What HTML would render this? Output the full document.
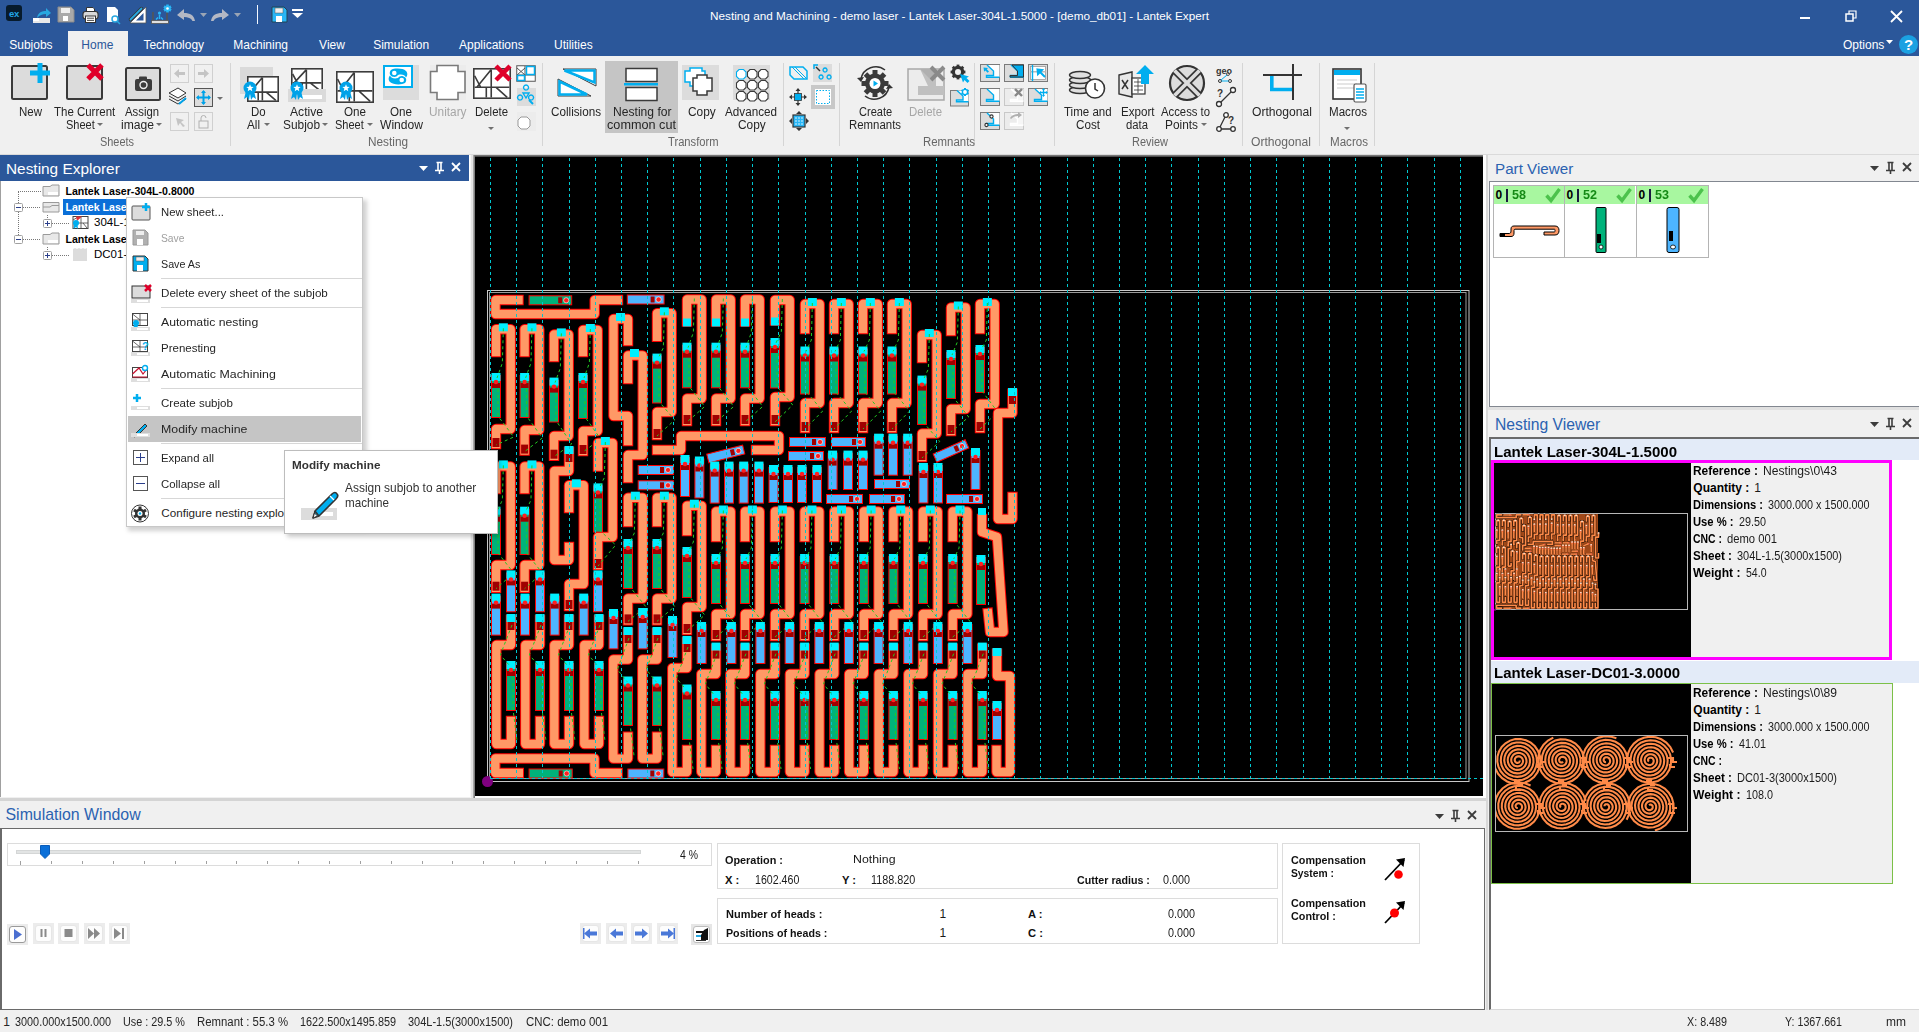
<!DOCTYPE html>
<html><head><meta charset="utf-8"><title>Lantek Expert</title>
<style>
html,body{margin:0;padding:0;}
body{width:1919px;height:1032px;overflow:hidden;position:relative;background:#f0f0f0;font-family:"Liberation Sans", sans-serif;}
.a{position:absolute;}
.t{position:absolute;white-space:nowrap;}
svg.a{overflow:visible;}
</style></head><body>
<div class="a" style="left:0px;top:0px;width:1919px;height:56px;background:#2b579a"></div>
<div class="a" style="left:6px;top:5px;width:16px;height:16px;background:#071b2c;border-radius:3px"></div>
<div class="t" style="left:9px;top:9.16px;font-size:9.5px;line-height:9.5px;color:#22a6e6;font-weight:bold;letter-spacing:-0.3px">ex</div>
<svg class="a" style="left:33px;top:6px;" width="19" height="18" viewBox="0 0 19 18"><rect x="0" y="12" width="17" height="5" fill="#e8e8e8"/><rect x="0" y="12" width="6" height="3" fill="#fff"/><path d="M4 12 C5 6 9 5 13 5 L13 2 L18 7 L13 11 L13 8 C9 8 7 9 4 12Z" fill="#29a8e0"/></svg>
<svg class="a" style="left:57px;top:6px;" width="18" height="17" viewBox="0 0 18 17"><path d="M1 1 H14 L17 4 V16 H1Z" fill="#a9a9a9" stroke="#8a8a8a"/><rect x="4" y="2" width="9" height="5" fill="#eee"/><rect x="6" y="10" width="5" height="5" fill="#fff"/></svg>
<svg class="a" style="left:82px;top:6px;" width="17" height="17" viewBox="0 0 17 17"><path d="M4.5 1.5 H11 L12.5 3 V6 H4.5Z" fill="#fff" stroke="#333" stroke-width="1"/><rect x="1" y="5.5" width="15" height="7.5" rx="2.5" fill="#d8d8d8" stroke="#333" stroke-width="1.1"/><rect x="3.5" y="10" width="10" height="6.5" fill="#fff" stroke="#333" stroke-width="1"/><path d="M5 12.2 H12 M5 14.4 H12" stroke="#333" stroke-width="0.9"/></svg>
<svg class="a" style="left:106px;top:6px;" width="15" height="18" viewBox="0 0 15 18"><path d="M1 1H9L12 4V16H1Z" fill="#fff"/><circle cx="9" cy="13" r="3" fill="#fff" stroke="#29a8e0" stroke-width="1.5"/><line x1="11" y1="15" x2="14" y2="18" stroke="#29a8e0" stroke-width="1.5"/></svg>
<svg class="a" style="left:128px;top:6px;" width="19" height="18" viewBox="0 0 19 18"><path d="M18 1 V17 H2Z" fill="#fff" stroke="#555" stroke-width="0.8"/><path d="M15.5 7 V14.5 H8Z" fill="#2b579a"/><path d="M13.5 2.5 L2.5 13.5" stroke="#333" stroke-width="3.4" stroke-linecap="round"/><path d="M13.5 2.5 L2.5 13.5" stroke="#29a8e0" stroke-width="1.8" stroke-linecap="round"/></svg>
<svg class="a" style="left:150px;top:4px;" width="22" height="21" viewBox="0 0 22 21"><path d="M3 8 V17 M17 8 V17" stroke="#555" stroke-width="1.6"/><rect x="1.5" y="16.5" width="17" height="3" fill="#e0e0e0" stroke="#555" stroke-width="0.8"/><circle cx="9.5" cy="9" r="1.6" fill="#29b6f6"/><path d="M9.5 10.5 V15 M6 15.5 L8 13.5 M13 15.5 L11 13.5" stroke="#29b6f6" stroke-width="1.4"/><g fill="#29b6f6"><rect x="16.2" y="0.5" width="2.6" height="2.6" transform="rotate(0 17.5 4.5)"/><rect x="16.2" y="0.5" width="2.6" height="2.6" transform="rotate(60 17.5 4.5)"/><rect x="16.2" y="0.5" width="2.6" height="2.6" transform="rotate(120 17.5 4.5)"/><rect x="16.2" y="0.5" width="2.6" height="2.6" transform="rotate(180 17.5 4.5)"/><rect x="16.2" y="0.5" width="2.6" height="2.6" transform="rotate(240 17.5 4.5)"/><rect x="16.2" y="0.5" width="2.6" height="2.6" transform="rotate(300 17.5 4.5)"/></g><circle cx="17.5" cy="4.5" r="3" fill="#29b6f6"/><circle cx="17.5" cy="4.5" r="1.3" fill="#fff"/></svg>
<svg class="a" style="left:177px;top:9px;" width="19" height="13" viewBox="0 0 19 13"><path d="M7 0 L0 6 L7 11 V8 C11 8 14 9 15.5 12 H18 C17 6 13 4 7 4Z" fill="#b4b8c4"/></svg>
<svg class="a" style="left:200px;top:13px;" width="7" height="4" viewBox="0 0 7 4"><path d="M0 0H7L3.5 4Z" fill="#9aa5b5"/></svg>
<svg class="a" style="left:211px;top:9px;" width="19" height="13" viewBox="0 0 19 13"><path d="M11 0 L18 6 L11 11 V8 C7 8 4 9 2.5 12 H0 C1 6 5 4 11 4Z" fill="#b4b8c4"/></svg>
<svg class="a" style="left:234px;top:13px;" width="7" height="4" viewBox="0 0 7 4"><path d="M0 0H7L3.5 4Z" fill="#9aa5b5"/></svg>
<div class="a" style="left:256.5px;top:5px;width:1.5px;height:19px;background:#f4f8ff"></div>
<svg class="a" style="left:271px;top:6px;" width="17" height="17" viewBox="0 0 17 17"><path d="M1 1 H13 L16 4 V16 H1Z" fill="#29b6f6" stroke="#245"/><rect x="4" y="2" width="8" height="5" fill="#eee" stroke="#555" stroke-width="0.5"/><rect x="5" y="10" width="6" height="6" fill="#fff"/></svg>
<svg class="a" style="left:292px;top:9px;" width="11" height="9" viewBox="0 0 11 9"><rect x="0" y="0" width="11" height="2" fill="#fff"/><path d="M0 4H11L5.5 9Z" fill="#fff"/></svg>
<div class="t" style="left:710px;top:10.04px;font-size:11.77px;line-height:11.77px;color:#ffffff;">Nesting and Machining - demo laser - Lantek Laser-304L-1.5000 - [demo_db01] - Lantek Expert</div>
<div class="a" style="left:1800px;top:17px;width:10px;height:2px;background:#fff"></div>
<svg class="a" style="left:1845px;top:10px;" width="12" height="12" viewBox="0 0 12 12"><rect x="1" y="4" width="7" height="7" fill="none" stroke="#fff" stroke-width="1.5"/><path d="M4 4V1H11V8H8" fill="none" stroke="#fff" stroke-width="1.2"/></svg>
<svg class="a" style="left:1890px;top:10px;" width="13" height="13" viewBox="0 0 13 13"><path d="M1 1L12 12M12 1L1 12" stroke="#fff" stroke-width="1.8"/></svg>
<div class="a" style="left:68px;top:31px;width:60px;height:25px;background:#f0f0f0"></div>
<div class="t" style="left:9.25px;top:38.84px;font-size:12px;line-height:12px;color:#ffffff;">Subjobs</div>
<div class="t" style="left:143.4px;top:38.84px;font-size:12px;line-height:12px;color:#ffffff;">Technology</div>
<div class="t" style="left:233.3px;top:38.84px;font-size:12px;line-height:12px;color:#ffffff;">Machining</div>
<div class="t" style="left:319.1px;top:38.84px;font-size:12px;line-height:12px;color:#ffffff;">View</div>
<div class="t" style="left:373.2px;top:38.84px;font-size:12px;line-height:12px;color:#ffffff;">Simulation</div>
<div class="t" style="left:459px;top:38.84px;font-size:12px;line-height:12px;color:#ffffff;">Applications</div>
<div class="t" style="left:554px;top:38.84px;font-size:12px;line-height:12px;color:#ffffff;">Utilities</div>
<div class="t" style="left:81.3px;top:38.84px;font-size:12px;line-height:12px;color:#2b579a;">Home</div>
<div class="t" style="left:1843px;top:38.84px;font-size:12px;line-height:12px;color:#ffffff;">Options</div>
<svg class="a" style="left:1886px;top:40px;" width="7" height="4" viewBox="0 0 7 4"><path d="M0 0H7L3.5 4Z" fill="#fff"/></svg>
<svg class="a" style="left:1898px;top:34px;" width="21" height="21" viewBox="0 0 21 21"><circle cx="10.5" cy="10.5" r="9.5" fill="#1ba1e2"/><text x="10.5" y="16" font-family="Liberation Sans" font-weight="bold" font-size="15" fill="#fff" text-anchor="middle">?</text></svg>
<div class="a" style="left:0px;top:56px;width:1919px;height:99px;background:#f0f0f0"></div>
<div class="a" style="left:0px;top:154px;width:1919px;height:1px;background:#dadada"></div>
<svg class="a" style="left:11px;top:62px;" width="40" height="39" viewBox="0 0 40 39"><rect x="1" y="4" width="35" height="33" rx="1.5" fill="#dcdcdc" stroke="#3a3a3a" stroke-width="2"/><path d="M29 1 V21 M19 11 H39" stroke="#00aeef" stroke-width="5"/></svg>
<svg class="a" style="left:66px;top:63px;" width="39" height="37" viewBox="0 0 39 37"><rect x="1" y="3" width="35" height="33" rx="1.5" fill="#dcdcdc" stroke="#3a3a3a" stroke-width="2"/><path d="M22 2 L36 16 M36 2 L22 16" stroke="#e0002a" stroke-width="5"/></svg>
<svg class="a" style="left:125px;top:67px;" width="36" height="34" viewBox="0 0 36 34"><rect x="1" y="1" width="34" height="32" rx="1.5" fill="#dcdcdc" stroke="#3a3a3a" stroke-width="2"/><rect x="10" y="12" width="17" height="12" rx="2" fill="#3c3c3c"/><rect x="14" y="9.5" width="8" height="4" rx="1" fill="#3c3c3c"/><circle cx="18.5" cy="18" r="3.5" fill="none" stroke="#eee" stroke-width="1.4"/></svg>
<div class="t" style="left:18.5px;top:105.84px;font-size:12px;line-height:12px;color:#262626;transform:scaleX(0.9581);transform-origin:0 0;">New</div>
<div class="t" style="left:54.4px;top:105.84px;font-size:12px;line-height:12px;color:#262626;transform:scaleX(0.9558);transform-origin:0 0;">The Current</div>
<div class="t" style="left:66px;top:118.84px;font-size:12px;line-height:12px;color:#262626;transform:scaleX(0.9184);transform-origin:0 0;">Sheet</div>
<svg class="a" style="left:97px;top:123px;" width="6" height="3" viewBox="0 0 6 3"><path d="M0 0H6L3 3Z" fill="#707070"/></svg>
<div class="t" style="left:125px;top:105.84px;font-size:12px;line-height:12px;color:#262626;transform:scaleX(0.9440);transform-origin:0 0;">Assign</div>
<div class="t" style="left:121px;top:118.84px;font-size:12px;line-height:12px;color:#262626;transform:scaleX(1.0096);transform-origin:0 0;">image</div>
<svg class="a" style="left:156px;top:123px;" width="6" height="3" viewBox="0 0 6 3"><path d="M0 0H6L3 3Z" fill="#707070"/></svg>
<svg class="a" style="left:170px;top:64px;" width="19" height="19" viewBox="0 0 19 19"><rect x="0.5" y="0.5" width="18" height="18" fill="#f0f0f0" stroke="#d0d0d0"/><path d="M4 9.5 L9 5 V8 H15 V11 H9 V14Z" fill="#c4c4c4"/></svg>
<svg class="a" style="left:194px;top:64px;" width="19" height="19" viewBox="0 0 19 19"><rect x="0.5" y="0.5" width="18" height="18" fill="#f0f0f0" stroke="#d0d0d0"/><path d="M15 9.5 L10 5 V8 H4 V11 H10 V14Z" fill="#c4c4c4"/></svg>
<svg class="a" style="left:168px;top:86px;" width="20" height="21" viewBox="0 0 20 21"><path d="M1 7 L10 2 L18 7 L10 12Z" fill="#fff" stroke="#333"/><path d="M1 10 L10 15 L18 10 M1 13 L10 18 L18 13" fill="none" stroke="#333"/><path d="M11 18 L18 12" stroke="#00a2e8" stroke-width="2"/></svg>
<svg class="a" style="left:194px;top:88px;" width="19" height="19" viewBox="0 0 19 19"><rect x="0.5" y="0.5" width="18" height="18" fill="#dcdcdc" stroke="#555"/><path d="M9.5 3 V16 M3 9.5 H16" stroke="#00a2e8" stroke-width="2"/><path d="M9.5 2 L7 5 H12Z M9.5 17 L7 14 H12Z M2 9.5 L5 7 V12Z M17 9.5 L14 7 V12Z" fill="#00a2e8"/></svg>
<svg class="a" style="left:217px;top:97px;" width="6" height="3" viewBox="0 0 6 3"><path d="M0 0H6L3 3Z" fill="#707070"/></svg>
<svg class="a" style="left:170px;top:112px;" width="19" height="19" viewBox="0 0 19 19"><rect x="0.5" y="0.5" width="18" height="18" fill="#f0f0f0" stroke="#d0d0d0"/><path d="M6 6 L14 8 L11 10 L15 14 L13 15 L10 11 L8 14Z" fill="#c4c4c4"/></svg>
<svg class="a" style="left:194px;top:112px;" width="19" height="19" viewBox="0 0 19 19"><rect x="0.5" y="0.5" width="18" height="18" fill="#f0f0f0" stroke="#d0d0d0"/><rect x="5" y="9" width="9" height="7" fill="none" stroke="#b0b0b0"/><path d="M7 9 V6 A2.5 2.5 0 0 1 12 6" fill="none" stroke="#b0b0b0"/></svg>
<div class="t" style="left:100px;top:135.84px;font-size:12px;line-height:12px;color:#666666;transform:scaleX(0.9101);transform-origin:0 0;">Sheets</div>
<div class="a" style="left:230px;top:63px;width:1px;height:83px;background:#d5d5d5"></div>
<div class="a" style="left:240px;top:67px;width:33px;height:27px;background:#dadada"></div>
<svg class="a" style="left:247px;top:76px;" width="32" height="26" viewBox="0 0 32 26"><rect x="0.8" y="0.8" width="30.4" height="24.4" fill="#fff" stroke="#3c3c3c" stroke-width="1.6"/><path d="M1.6 16.12 H30.4 M15.36 1.6 V24.4 M1.6 6.5 L6.4 16.12 M15.36 1.6 L3.2 16.12 M11.2 16.12 V24.4 M19.2 16.12 L28.8 24.4" stroke="#3c3c3c" stroke-width="1.6" fill="none"/></svg>
<svg class="a" style="left:243px;top:81px;" width="14" height="20" viewBox="0 0 14 20"><path d="M3 10 L1 18 L4 16 L6 19 L7 12Z M11 10 L13 18 L10 16 L8 19 L7 12Z" fill="#00a2e8"/><circle cx="7" cy="7" r="6.5" fill="#00a2e8"/><path d="M7 3.2 L8 5.8 L10.7 5.9 L8.6 7.5 L9.3 10.2 L7 8.7 L4.7 10.2 L5.4 7.5 L3.3 5.9 L6 5.8Z" fill="#fff"/></svg>
<svg class="a" style="left:291px;top:68px;" width="32" height="24" viewBox="0 0 32 24"><rect x="0.8" y="0.8" width="30.4" height="22.4" fill="#fff" stroke="#3c3c3c" stroke-width="1.6"/><path d="M1.6 14.879999999999999 H30.4 M15.36 1.6 V22.4 M1.6 6.0 L6.4 14.879999999999999 M15.36 1.6 L3.2 14.879999999999999 M11.2 14.879999999999999 V22.4 M19.2 14.879999999999999 L28.8 22.4" stroke="#3c3c3c" stroke-width="1.6" fill="none"/></svg>
<div class="a" style="left:288px;top:89px;width:38px;height:13px;background:#dadada"></div>
<div class="a" style="left:300px;top:95px;width:22px;height:4px;background:#fff"></div>
<svg class="a" style="left:290px;top:81px;" width="14" height="20" viewBox="0 0 14 20"><path d="M3 10 L1 18 L4 16 L6 19 L7 12Z M11 10 L13 18 L10 16 L8 19 L7 12Z" fill="#00a2e8"/><circle cx="7" cy="7" r="6.5" fill="#00a2e8"/><path d="M7 3.2 L8 5.8 L10.7 5.9 L8.6 7.5 L9.3 10.2 L7 8.7 L4.7 10.2 L5.4 7.5 L3.3 5.9 L6 5.8Z" fill="#fff"/></svg>
<svg class="a" style="left:336px;top:71px;" width="38" height="32" viewBox="0 0 38 32"><rect x="0.8" y="0.8" width="36.4" height="30.4" fill="#fff" stroke="#3c3c3c" stroke-width="1.6"/><path d="M1.6 19.84 H36.4 M18.24 1.6 V30.4 M1.6 8.0 L7.6000000000000005 19.84 M18.24 1.6 L3.8000000000000003 19.84 M13.299999999999999 19.84 V30.4 M22.8 19.84 L34.2 30.4" stroke="#3c3c3c" stroke-width="1.6" fill="none"/></svg>
<svg class="a" style="left:339px;top:81px;" width="14" height="20" viewBox="0 0 14 20"><path d="M3 10 L1 18 L4 16 L6 19 L7 12Z M11 10 L13 18 L10 16 L8 19 L7 12Z" fill="#00a2e8"/><circle cx="7" cy="7" r="6.5" fill="#00a2e8"/><path d="M7 3.2 L8 5.8 L10.7 5.9 L8.6 7.5 L9.3 10.2 L7 8.7 L4.7 10.2 L5.4 7.5 L3.3 5.9 L6 5.8Z" fill="#fff"/></svg>
<div class="a" style="left:383px;top:65px;width:36px;height:35px;background:#dcdcdc"></div>
<svg class="a" style="left:383px;top:65px;" width="30" height="23" viewBox="0 0 30 23"><rect x="1" y="1" width="28" height="21" fill="#fff" stroke="#00aeef" stroke-width="2"/><path d="M8 5 C11 3 20 3 23 6 C25 8 24.5 11 23 12.5 C22 10 19 9 15 10 C14 11.5 12 12.3 10 11.8 C7 11 5.5 8 8 5Z" fill="#00aeef"/><circle cx="11.3" cy="8" r="2.3" fill="#fff"/><path d="M22 18 C19 20 10 20 7 17 C5 15 5.5 12 7 10.5 C8 13 11 14 15 13 C16 11.5 18 10.7 20 11.2 C23 12 24.5 15 22 18Z" fill="#00aeef"/><circle cx="18.7" cy="15" r="2.3" fill="#fff"/></svg>
<div class="a" style="left:430px;top:65px;width:36px;height:35px;background:#ececec"></div>
<svg class="a" style="left:429px;top:64px;" width="38" height="37" viewBox="0 0 38 37"><path d="M8 1.5 H29 V7.5 H36 V28.5 H29 V35.5 H8 V28.5 H1.5 V7.5 H8Z" fill="#fff" stroke="#7a7a7a" stroke-width="1.6"/></svg>
<div class="t" style="left:251px;top:105.84px;font-size:12px;line-height:12px;color:#262626;transform:scaleX(0.9517);transform-origin:0 0;">Do</div>
<div class="t" style="left:247px;top:118.84px;font-size:12px;line-height:12px;color:#262626;transform:scaleX(0.9747);transform-origin:0 0;">All</div>
<svg class="a" style="left:264px;top:123px;" width="6" height="3" viewBox="0 0 6 3"><path d="M0 0H6L3 3Z" fill="#707070"/></svg>
<div class="t" style="left:290px;top:105.84px;font-size:12px;line-height:12px;color:#262626;transform:scaleX(1.0098);transform-origin:0 0;">Active</div>
<div class="t" style="left:283px;top:118.84px;font-size:12px;line-height:12px;color:#262626;transform:scaleX(0.9902);transform-origin:0 0;">Subjob</div>
<svg class="a" style="left:322px;top:123px;" width="6" height="3" viewBox="0 0 6 3"><path d="M0 0H6L3 3Z" fill="#707070"/></svg>
<div class="t" style="left:344px;top:105.84px;font-size:12px;line-height:12px;color:#262626;transform:scaleX(0.9699);transform-origin:0 0;">One</div>
<div class="t" style="left:335px;top:118.84px;font-size:12px;line-height:12px;color:#262626;transform:scaleX(0.9184);transform-origin:0 0;">Sheet</div>
<svg class="a" style="left:367px;top:123px;" width="6" height="3" viewBox="0 0 6 3"><path d="M0 0H6L3 3Z" fill="#707070"/></svg>
<div class="t" style="left:390px;top:105.84px;font-size:12px;line-height:12px;color:#262626;transform:scaleX(0.9699);transform-origin:0 0;">One</div>
<div class="t" style="left:379.5px;top:118.84px;font-size:12px;line-height:12px;color:#262626;transform:scaleX(1.0075);transform-origin:0 0;">Window</div>
<div class="t" style="left:429px;top:105.84px;font-size:12px;line-height:12px;color:#a6a6a6;transform:scaleX(0.9866);transform-origin:0 0;">Unitary</div>
<svg class="a" style="left:473px;top:68px;" width="38" height="31" viewBox="0 0 38 31"><rect x="0.8" y="0.8" width="36.4" height="29.4" fill="#fff" stroke="#3c3c3c" stroke-width="1.6"/><path d="M1.6 19.22 H36.4 M18.24 1.6 V29.4 M1.6 7.75 L7.6000000000000005 19.22 M18.24 1.6 L3.8000000000000003 19.22 M13.299999999999999 19.22 V29.4 M22.8 19.22 L34.2 29.4" stroke="#3c3c3c" stroke-width="1.6" fill="none"/></svg>
<svg class="a" style="left:494px;top:64px;" width="18" height="18" viewBox="0 0 18 18"><path d="M2 2 L16 16 M16 2 L2 16" stroke="#e0002a" stroke-width="4.5"/></svg>
<div class="t" style="left:475px;top:105.84px;font-size:12px;line-height:12px;color:#262626;transform:scaleX(0.9513);transform-origin:0 0;">Delete</div>
<svg class="a" style="left:488px;top:127px;" width="6" height="3" viewBox="0 0 6 3"><path d="M0 0H6L3 3Z" fill="#707070"/></svg>
<svg class="a" style="left:516px;top:65px;" width="20" height="17" viewBox="0 0 20 17"><rect x="0.75" y="0.75" width="18.5" height="15.5" fill="#fff" stroke="#555" stroke-width="1"/><path d="M1 10 H19 M9 1 V16 M1 3 L9 10 M9 3 L1 10" stroke="#555" stroke-width="1" fill="none"/><rect x="10.5" y="1.5" width="8" height="8" fill="none" stroke="#00aeef" stroke-width="1.5"/><rect x="1.5" y="10.5" width="7" height="5" fill="none" stroke="#00aeef" stroke-width="1.5"/></svg>
<div class="a" style="left:517px;top:88px;width:19px;height:18px;background:#dcdcdc"></div>
<svg class="a" style="left:517px;top:88px;" width="19" height="18" viewBox="0 0 19 18"><path d="M9 2 a2.5 2.5 0 1 1 0.1 0 M3 12 a2.5 2.5 0 1 1 0.1 0 M14 12 a2.5 2.5 0 1 1 0.1 0" fill="none" stroke="#00aeef" stroke-width="1.4"/><path d="M6 5 H12 L9 10Z" fill="none" stroke="#00aeef" stroke-width="1.4"/><path d="M12 12 L16 16" stroke="#00aeef" stroke-width="2"/></svg>
<div class="a" style="left:517px;top:112px;width:19px;height:19px;background:#ececec"></div>
<svg class="a" style="left:517px;top:116px;" width="14" height="14" viewBox="0 0 14 14"><path d="M4 1 H10 L13 4 V10 L10 13 H4 L1 10 V4Z" fill="#fff" stroke="#999" stroke-width="1"/></svg>
<div class="t" style="left:367.5px;top:135.84px;font-size:12px;line-height:12px;color:#666666;transform:scaleX(0.9831);transform-origin:0 0;">Nesting</div>
<div class="a" style="left:542px;top:63px;width:1px;height:83px;background:#d5d5d5"></div>
<svg class="a" style="left:557px;top:68px;" width="40" height="30" viewBox="0 0 40 30"><path d="M6 1 H39 V18 Z" fill="#fff" stroke="#3c3c3c" stroke-width="1"/><path d="M7.5 2.5 H37.5 V14.5Z" fill="none" stroke="#00aeef" stroke-width="2.5"/><path d="M1 11 L34 28 H1Z" fill="#fff" stroke="#3c3c3c" stroke-width="1"/><path d="M2.5 13.5 L30 26.5 H2.5Z" fill="none" stroke="#00aeef" stroke-width="2.5"/></svg>
<div class="t" style="left:551px;top:105.84px;font-size:12px;line-height:12px;color:#262626;transform:scaleX(0.9736);transform-origin:0 0;">Collisions</div>
<div class="a" style="left:605px;top:61px;width:73px;height:72px;background:#c5c5c5"></div>
<svg class="a" style="left:624px;top:67px;" width="35" height="35" viewBox="0 0 35 35"><rect x="2" y="1.5" width="31" height="13" fill="#fff" stroke="#3a3a3a" stroke-width="1.5"/><rect x="2" y="20.5" width="31" height="13" fill="#fff" stroke="#3a3a3a" stroke-width="1.5"/><rect x="0" y="16" width="34" height="2.5" fill="#00aeef"/></svg>
<div class="t" style="left:612.5px;top:105.84px;font-size:12px;line-height:12px;color:#262626;transform:scaleX(1.0082);transform-origin:0 0;">Nesting for</div>
<div class="t" style="left:607px;top:118.84px;font-size:12px;line-height:12px;color:#262626;transform:scaleX(1.0557);transform-origin:0 0;">common cut</div>
<div class="a" style="left:682px;top:65px;width:37px;height:35px;background:#dcdcdc"></div>
<svg class="a" style="left:684px;top:67px;" width="34" height="32" viewBox="0 0 34 32"><path d="M6 1 H18 V4 H21 V15 H18 V19 H6 V15 H1 V4 H6Z" fill="#fff" stroke="#00aeef" stroke-width="1.5" transform="translate(0,0)"/><path d="M13 8 H23 V11 H28 V24 H23 V28 H13 V24 H9 V11 H13Z" fill="#fff" stroke="#3a3a3a" stroke-width="1.5"/></svg>
<div class="t" style="left:687.5px;top:105.84px;font-size:12px;line-height:12px;color:#262626;transform:scaleX(0.9888);transform-origin:0 0;">Copy</div>
<div class="a" style="left:733px;top:65px;width:37px;height:35px;background:#dcdcdc"></div>
<svg class="a" style="left:734px;top:66px;" width="36" height="36" viewBox="0 0 36 36"><path d="M5.0 3.5 H9.5 L12.0 6.0 V10.5 L9.5 13.0 H5.0 L2.5 10.5 V6.0Z" fill="#fff" stroke="#00aeef" stroke-width="1.1"/><path d="M16.0 3.5 H20.5 L23.0 6.0 V10.5 L20.5 13.0 H16.0 L13.5 10.5 V6.0Z" fill="#fff" stroke="#3a3a3a" stroke-width="1.1"/><path d="M27.0 3.5 H31.5 L34.0 6.0 V10.5 L31.5 13.0 H27.0 L24.5 10.5 V6.0Z" fill="#fff" stroke="#3a3a3a" stroke-width="1.1"/><path d="M5.0 14.5 H9.5 L12.0 17.0 V21.5 L9.5 24.0 H5.0 L2.5 21.5 V17.0Z" fill="#fff" stroke="#3a3a3a" stroke-width="1.1"/><path d="M16.0 14.5 H20.5 L23.0 17.0 V21.5 L20.5 24.0 H16.0 L13.5 21.5 V17.0Z" fill="#fff" stroke="#3a3a3a" stroke-width="1.1"/><path d="M27.0 14.5 H31.5 L34.0 17.0 V21.5 L31.5 24.0 H27.0 L24.5 21.5 V17.0Z" fill="#fff" stroke="#3a3a3a" stroke-width="1.1"/><path d="M5.0 25.5 H9.5 L12.0 28.0 V32.5 L9.5 35.0 H5.0 L2.5 32.5 V28.0Z" fill="#fff" stroke="#3a3a3a" stroke-width="1.1"/><path d="M16.0 25.5 H20.5 L23.0 28.0 V32.5 L20.5 35.0 H16.0 L13.5 32.5 V28.0Z" fill="#fff" stroke="#3a3a3a" stroke-width="1.1"/><path d="M27.0 25.5 H31.5 L34.0 28.0 V32.5 L31.5 35.0 H27.0 L24.5 32.5 V28.0Z" fill="#fff" stroke="#3a3a3a" stroke-width="1.1"/></svg>
<div class="t" style="left:725px;top:105.84px;font-size:12px;line-height:12px;color:#262626;transform:scaleX(0.9742);transform-origin:0 0;">Advanced</div>
<div class="t" style="left:738px;top:118.84px;font-size:12px;line-height:12px;color:#262626;transform:scaleX(0.9888);transform-origin:0 0;">Copy</div>
<div class="t" style="left:667.5px;top:135.84px;font-size:12px;line-height:12px;color:#666666;transform:scaleX(0.9312);transform-origin:0 0;">Transform</div>
<div class="a" style="left:783px;top:63px;width:1px;height:83px;background:#d5d5d5"></div>
<svg class="a" style="left:789px;top:66px;" width="19" height="14" viewBox="0 0 19 14"><path d="M1 1 H14 L18 5 V13 H5 L1 9Z" fill="none" stroke="#00aeef" stroke-width="1.5"/><path d="M3 1 L15 13 M6 1 L18 13" stroke="#00aeef" stroke-width="1"/></svg>
<div class="a" style="left:813px;top:64px;width:19px;height:18px;background:#dcdcdc"></div>
<svg class="a" style="left:813px;top:64px;" width="19" height="18" viewBox="0 0 19 18"><path d="M1 5 V1 H5" fill="none" stroke="#00aeef" stroke-width="1.5"/><path d="M3 3 L7 7" stroke="#333" stroke-width="1.5"/><path d="M12 8 a2 2 0 1 1 0.1 0 M8 15 a2 2 0 1 1 0.1 0 M16 15 a2 2 0 1 1 0.1 0" fill="none" stroke="#00aeef" stroke-width="1.4"/></svg>
<svg class="a" style="left:789px;top:88px;" width="18" height="18" viewBox="0 0 18 18"><path d="M9 1 V17 M1 9 H17" stroke="#333" stroke-width="1.2"/><path d="M9 0 L6.5 3 H11.5Z M9 18 L6.5 15 H11.5Z M0 9 L3 6.5 V11.5Z M18 9 L15 6.5 V11.5Z" fill="#333"/><rect x="5.5" y="5.5" width="7" height="7" fill="#00aeef" stroke="#333" stroke-width="0.8"/></svg>
<div class="a" style="left:811px;top:85px;width:24px;height:24px;background:#c8c8c8"></div>
<svg class="a" style="left:815px;top:89px;" width="16" height="16" viewBox="0 0 16 16"><rect x="0" y="0" width="16" height="16" fill="#fff"/><rect x="1.5" y="1.5" width="13" height="13" fill="none" stroke="#00aeef" stroke-width="1" stroke-dasharray="1.5 1.5"/></svg>
<svg class="a" style="left:789px;top:111px;" width="20" height="20" viewBox="0 0 20 20"><path d="M10 0 L7 3 H13Z M10 20 L7 17 H13Z M0 10 L3 7 V13Z M20 10 L17 7 V13Z" fill="#333"/><rect x="4" y="4" width="12" height="12" fill="#29b6f6" stroke="#333" stroke-width="1.2"/><path d="M6 7 H14 M6 10 H14 M6 13 H14" stroke="#fff" stroke-width="0.8" stroke-dasharray="2 1"/></svg>
<div class="a" style="left:839px;top:63px;width:1px;height:83px;background:#d5d5d5"></div>
<svg class="a" style="left:855px;top:65px;" width="40" height="36" viewBox="0 0 40 36"><path d="M6 14 A15 15 0 0 1 30 5" fill="none" stroke="#333" stroke-width="1.5"/><path d="M34 22 A15 15 0 0 1 10 31" fill="none" stroke="#333" stroke-width="1.5"/><path d="M2 13 L6 17 L9 12Z M38 23 L34 19 L31 24Z" fill="#333"/><circle cx="20" cy="18.5" r="10" fill="#3a3a3a"/><g fill="#3a3a3a"><rect x="17.5" y="5" width="5" height="5" transform="rotate(0 20 18.5)"/><rect x="17.5" y="5" width="5" height="5" transform="rotate(45 20 18.5)"/><rect x="17.5" y="5" width="5" height="5" transform="rotate(90 20 18.5)"/><rect x="17.5" y="5" width="5" height="5" transform="rotate(135 20 18.5)"/><rect x="17.5" y="5" width="5" height="5" transform="rotate(180 20 18.5)"/><rect x="17.5" y="5" width="5" height="5" transform="rotate(225 20 18.5)"/><rect x="17.5" y="5" width="5" height="5" transform="rotate(270 20 18.5)"/><rect x="17.5" y="5" width="5" height="5" transform="rotate(315 20 18.5)"/></g><circle cx="20" cy="18.5" r="5.5" fill="#fff"/><path d="M18.5 15.5 L23 18.5 L18.5 21.5Z" fill="#00aeef"/></svg>
<div class="t" style="left:858.75px;top:105.84px;font-size:12px;line-height:12px;color:#262626;transform:scaleX(0.9231);transform-origin:0 0;">Create</div>
<div class="t" style="left:848.75px;top:118.84px;font-size:12px;line-height:12px;color:#262626;transform:scaleX(0.9508);transform-origin:0 0;">Remnants</div>
<svg class="a" style="left:907px;top:64px;" width="40" height="37" viewBox="0 0 40 37"><rect x="1" y="5" width="36" height="31" fill="#ececec" stroke="#a8a8a8" stroke-width="1.5"/><path d="M13 5 H29 V22 H37 V31 H11 V22 H21Z" fill="#c0c0c0"/><path d="M13 5 L22 14 H29 V5Z" fill="#b0b0b0"/><path d="M24 3 L37 16 M37 3 L24 16" stroke="#8a8a8a" stroke-width="4"/></svg>
<div class="t" style="left:909px;top:105.84px;font-size:12px;line-height:12px;color:#a6a6a6;transform:scaleX(0.9513);transform-origin:0 0;">Delete</div>
<svg class="a" style="left:950px;top:64px;" width="21" height="19" viewBox="0 0 21 19"><circle cx="8" cy="8" r="4.6" fill="none" stroke="#333" stroke-width="3.2"/><g fill="#333"><rect x="6.6" y="0.6" width="2.8" height="3" transform="rotate(0 8 8)"/><rect x="6.6" y="0.6" width="2.8" height="3" transform="rotate(45 8 8)"/><rect x="6.6" y="0.6" width="2.8" height="3" transform="rotate(90 8 8)"/><rect x="6.6" y="0.6" width="2.8" height="3" transform="rotate(135 8 8)"/><rect x="6.6" y="0.6" width="2.8" height="3" transform="rotate(180 8 8)"/><rect x="6.6" y="0.6" width="2.8" height="3" transform="rotate(225 8 8)"/><rect x="6.6" y="0.6" width="2.8" height="3" transform="rotate(270 8 8)"/><rect x="6.6" y="0.6" width="2.8" height="3" transform="rotate(315 8 8)"/></g><path d="M10 10 L19 12.5 L16.5 14 L19.5 17 L17.5 19 L14.5 16 L13 18.5Z" fill="#00aeef"/></svg>
<svg class="a" style="left:950px;top:88px;" width="20" height="19" viewBox="0 0 20 19"><rect x="0.5" y="2.5" width="18" height="15.5" fill="#dcdcdc" stroke="#7a7a7a"/><path d="M7 2.5 H18.5 V13.5 H6 V12 H13 V8Z" fill="#fff"/><path d="M7 2.5 L13 8 V12 H6.5 V13.8 H18.5" fill="none" stroke="#00aeef" stroke-width="1.4"/><g fill="#00aeef"><rect x="14" y="0" width="2" height="2.5" transform="rotate(0 15 4)"/><rect x="14" y="0" width="2" height="2.5" transform="rotate(60 15 4)"/><rect x="14" y="0" width="2" height="2.5" transform="rotate(120 15 4)"/><rect x="14" y="0" width="2" height="2.5" transform="rotate(180 15 4)"/><rect x="14" y="0" width="2" height="2.5" transform="rotate(240 15 4)"/><rect x="14" y="0" width="2" height="2.5" transform="rotate(300 15 4)"/></g><circle cx="15" cy="4" r="2.6" fill="#fff" stroke="#00aeef" stroke-width="1.4"/></svg>
<div class="a" style="left:974px;top:63px;width:1px;height:83px;background:#d5d5d5"></div>
<svg class="a" style="left:980px;top:64px;" width="20" height="18" viewBox="0 0 20 18"><rect x="0.5" y="0.5" width="19" height="17" fill="#dcdcdc" stroke="#7a7a7a" stroke-width="1"/><path d="M7 1 H19.5 V13 H6 V11.5 H13.5 V7Z" fill="#fff"/><path d="M7 1 L13.5 7 V11.5 H6.5 V13.2 H19.5" fill="none" stroke="#00aeef" stroke-width="1.4"/><path d="M3.5 3.5 L8 4 L6.8 5.2 L9 7.4 L7.6 8.8 L5.4 6.6 L4.2 7.8Z" fill="#00aeef"/></svg>
<svg class="a" style="left:1004px;top:64px;" width="20" height="18" viewBox="0 0 20 18"><rect x="0.5" y="0.5" width="19" height="17" fill="#dcdcdc" stroke="#7a7a7a" stroke-width="1"/><path d="M7 1 H19.5 V13 H6 V11.5 H13.5 V7Z" fill="#fff"/><path d="M7 1 L13.5 7 V11.5 H6.5 V13.2 H19.5" fill="none" stroke="#00aeef" stroke-width="1.4"/><path d="M8 1 H19.5 V13 H6 V11.5 H13.5 V7Z" fill="#00aeef" stroke="#333" stroke-width="1"/></svg>
<svg class="a" style="left:1028px;top:64px;" width="20" height="18" viewBox="0 0 20 18"><rect x="0.5" y="0.5" width="19" height="17" fill="#dcdcdc" stroke="#7a7a7a"/><rect x="2.5" y="2.5" width="15" height="13" fill="#fff" stroke="#999" stroke-width="0.8"/><rect x="2.5" y="7" width="15" height="1.5" fill="#bbb"/><path d="M4.5 1 V17" stroke="#00aeef" stroke-width="1.4"/><path d="M17 13 L10 6 M9.5 5.5 L14 6 L10 10Z" stroke="#00aeef" stroke-width="2" fill="#00aeef"/></svg>
<svg class="a" style="left:980px;top:88px;" width="20" height="18" viewBox="0 0 20 18"><rect x="0.5" y="0.5" width="19" height="17" fill="#dcdcdc" stroke="#7a7a7a" stroke-width="1"/><path d="M7 1 H19.5 V13 H6 V11.5 H13.5 V7Z" fill="#fff"/><path d="M7 1 L13.5 7 V11.5 H6.5 V13.2 H19.5" fill="none" stroke="#00aeef" stroke-width="1.4"/></svg>
<svg class="a" style="left:1004px;top:88px;" width="20" height="18" viewBox="0 0 20 18"><rect x="0.5" y="0.5" width="19" height="17" fill="#ececec" stroke="#c8c8c8" stroke-width="1"/><path d="M7 1 H19.5 V13 H6 V11.5 H13.5 V7Z" fill="#f6f6f6"/><path d="M7 1 L13.5 7 V11.5 H6.5 V13.2 H19.5" fill="none" stroke="#ffffff" stroke-width="1.4"/><path d="M11 1 L18 8 M18 1 L11 8" stroke="#888" stroke-width="2.4"/></svg>
<svg class="a" style="left:1028px;top:88px;" width="20" height="18" viewBox="0 0 20 18"><rect x="0.5" y="0.5" width="19" height="17" fill="#dcdcdc" stroke="#7a7a7a" stroke-width="1"/><path d="M7 1 H19.5 V13 H6 V11.5 H13.5 V7Z" fill="#fff"/><path d="M7 1 L13.5 7 V11.5 H6.5 V13.2 H19.5" fill="none" stroke="#00aeef" stroke-width="1.4"/><path d="M15.5 1 V8 M12 4.5 H19" stroke="#00aeef" stroke-width="1.3"/><path d="M15.5 0 L14 2 H17Z M15.5 9 L14 7 H17Z M11 4.5 L13 3 V6Z M20 4.5 L18 3 V6Z" fill="#00aeef"/></svg>
<svg class="a" style="left:980px;top:112px;" width="20" height="18" viewBox="0 0 20 18"><rect x="0.5" y="0.5" width="19" height="17" fill="#dcdcdc" stroke="#7a7a7a" stroke-width="1"/><path d="M7 1 H19.5 V13 H6 V11.5 H13.5 V7Z" fill="#fff"/><path d="M7 1 L13.5 7 V11.5 H6.5 V13.2 H19.5" fill="none" stroke="#00aeef" stroke-width="1.4"/><circle cx="11.5" cy="4.5" r="1.6" fill="#fff" stroke="#333" stroke-width="1.1"/><circle cx="6.5" cy="13" r="1.6" fill="#fff" stroke="#333" stroke-width="1.1"/></svg>
<svg class="a" style="left:1004px;top:112px;" width="20" height="18" viewBox="0 0 20 18"><rect x="0.5" y="0.5" width="19" height="17" fill="#ececec" stroke="#c8c8c8" stroke-width="1"/><path d="M7 1 H19.5 V13 H6 V11.5 H13.5 V7Z" fill="#f6f6f6"/><path d="M7 1 L13.5 7 V11.5 H6.5 V13.2 H19.5" fill="none" stroke="#ffffff" stroke-width="1.4"/><path d="M6 6 C8 3 11 2 14 2 V0 L18 3 L14 6 V4 C11 4 9 5 7 7Z" fill="#b0b0b0"/></svg>
<div class="t" style="left:922.5px;top:135.84px;font-size:12px;line-height:12px;color:#666666;transform:scaleX(0.9508);transform-origin:0 0;">Remnants</div>
<div class="a" style="left:1054px;top:63px;width:1px;height:83px;background:#d5d5d5"></div>
<svg class="a" style="left:1068px;top:70px;" width="38" height="29" viewBox="0 0 38 29"><g fill="#e0e0e0" stroke="#333" stroke-width="1.4"><ellipse cx="12" cy="20" rx="10.5" ry="3.5"/><ellipse cx="12" cy="15" rx="10.5" ry="3.5"/><ellipse cx="12" cy="10" rx="10.5" ry="3.5"/><ellipse cx="12" cy="5" rx="10.5" ry="3.5"/></g><circle cx="27" cy="18.5" r="9.5" fill="#fff" stroke="#333" stroke-width="1.6"/><path d="M27 13 V19 L30 21" fill="none" stroke="#333" stroke-width="1.5"/></svg>
<div class="t" style="left:1063.8px;top:105.84px;font-size:12px;line-height:12px;color:#262626;transform:scaleX(0.9601);transform-origin:0 0;">Time and</div>
<div class="t" style="left:1076px;top:118.84px;font-size:12px;line-height:12px;color:#262626;transform:scaleX(0.9727);transform-origin:0 0;">Cost</div>
<svg class="a" style="left:1118px;top:64px;" width="38" height="34" viewBox="0 0 38 34"><path d="M1 11 L14 8 V33 L1 30Z" fill="#e8e8e8" stroke="#333" stroke-width="1.4"/><path d="M4 16 L10 25 M10 16 L4 25" stroke="#333" stroke-width="1.5"/><rect x="14" y="14" width="13" height="16" fill="#fff" stroke="#333" stroke-width="1.2"/><path d="M16 18 H25 M16 22 H25 M16 26 H25 M20 15 V29" stroke="#333" stroke-width="0.8"/><path d="M27 1 L36 10 H31 V20 H23 V10 H18Z" fill="#00aeef"/></svg>
<div class="t" style="left:1120.5px;top:105.84px;font-size:12px;line-height:12px;color:#262626;transform:scaleX(0.9659);transform-origin:0 0;">Export</div>
<div class="t" style="left:1125.5px;top:118.84px;font-size:12px;line-height:12px;color:#262626;transform:scaleX(0.9419);transform-origin:0 0;">data</div>
<svg class="a" style="left:1168px;top:64px;" width="38" height="38" viewBox="0 0 38 38"><circle cx="19" cy="19" r="17" fill="#dcdcdc" stroke="#333" stroke-width="2.2"/><path d="M7.5 7.5 L30.5 30.5 M30.5 7.5 L7.5 30.5" stroke="#333" stroke-width="7"/><path d="M6.5 6.5 L31.5 31.5 M31.5 6.5 L6.5 31.5" stroke="#dcdcdc" stroke-width="3.8"/></svg>
<div class="t" style="left:1161.4px;top:105.84px;font-size:12px;line-height:12px;color:#262626;transform:scaleX(0.9419);transform-origin:0 0;">Access to</div>
<div class="t" style="left:1165px;top:118.84px;font-size:12px;line-height:12px;color:#262626;transform:scaleX(0.9894);transform-origin:0 0;">Points</div>
<svg class="a" style="left:1201px;top:123px;" width="6" height="3" viewBox="0 0 6 3"><path d="M0 0H6L3 3Z" fill="#707070"/></svg>
<div class="t" style="left:1216px;top:67.38px;font-size:9px;line-height:9px;color:#333;font-weight:bold;">geo</div>
<svg class="a" style="left:1216px;top:73px;" width="20" height="10" viewBox="0 0 20 10"><circle cx="12" cy="1" r="1.5" fill="none" stroke="#555"/><circle cx="4" cy="8" r="1.5" fill="none" stroke="#333"/><circle cx="14" cy="8" r="1.5" fill="none" stroke="#333"/><path d="M5.5 8 H12.5" stroke="#00aeef"/><path d="M5 7 L11 2" stroke="#00aeef"/></svg>
<svg class="a" style="left:1216px;top:87px;" width="20" height="20" viewBox="0 0 20 20"><circle cx="3" cy="17" r="2.5" fill="#fff" stroke="#333" stroke-width="1.3"/><circle cx="17" cy="3" r="2.5" fill="#fff" stroke="#333" stroke-width="1.3"/><path d="M5 15 L15 5" stroke="#333" stroke-width="1.3"/><text x="1" y="10" font-family="Liberation Sans" font-weight="bold" font-size="10" fill="#333">?</text></svg>
<svg class="a" style="left:1216px;top:112px;" width="20" height="20" viewBox="0 0 20 20"><circle cx="3" cy="17" r="2.3" fill="#fff" stroke="#333" stroke-width="1.3"/><circle cx="17" cy="17" r="2.3" fill="#fff" stroke="#333" stroke-width="1.3"/><circle cx="10" cy="3" r="2.3" fill="#fff" stroke="#333" stroke-width="1.3"/><path d="M5 17 H15 M4 15 L9 5" stroke="#333" stroke-width="1.3"/><text x="12" y="12" font-family="Liberation Sans" font-weight="bold" font-size="10" fill="#333">?</text></svg>
<div class="t" style="left:1131.7px;top:135.84px;font-size:12px;line-height:12px;color:#666666;transform:scaleX(0.9149);transform-origin:0 0;">Review</div>
<div class="a" style="left:1242px;top:63px;width:1px;height:83px;background:#d5d5d5"></div>
<svg class="a" style="left:1262px;top:64px;" width="40" height="37" viewBox="0 0 40 37"><path d="M9.8 11 V25.5 H30" fill="none" stroke="#00aeef" stroke-width="3.6"/><path d="M1 11 H40 M31 0 V36" stroke="#333" stroke-width="2"/></svg>
<div class="t" style="left:1251.5px;top:105.84px;font-size:12px;line-height:12px;color:#262626;transform:scaleX(1.0105);transform-origin:0 0;">Orthogonal</div>
<div class="t" style="left:1251px;top:135.84px;font-size:12px;line-height:12px;color:#666666;transform:scaleX(1.0105);transform-origin:0 0;">Orthogonal</div>
<div class="a" style="left:1319px;top:63px;width:1px;height:83px;background:#d5d5d5"></div>
<svg class="a" style="left:1332px;top:68px;" width="36" height="35" viewBox="0 0 36 35"><rect x="1" y="1" width="28" height="30" fill="#fff" stroke="#333" stroke-width="1.6"/><rect x="2" y="2" width="26" height="5" fill="#00aeef"/><path d="M5 12 H25 M5 16 H25 M5 20 H25" stroke="#ccc" stroke-width="1.2"/><rect x="22" y="16" width="12" height="18" rx="1.5" fill="#fff" stroke="#555" stroke-width="1.2"/><path d="M24 21 H32 M24 24 H32 M24 27 H32 M24 30 H32" stroke="#00aeef" stroke-width="1.5"/></svg>
<div class="t" style="left:1328.6px;top:105.84px;font-size:12px;line-height:12px;color:#262626;transform:scaleX(0.9659);transform-origin:0 0;">Macros</div>
<svg class="a" style="left:1344px;top:127px;" width="6" height="3" viewBox="0 0 6 3"><path d="M0 0H6L3 3Z" fill="#707070"/></svg>
<div class="t" style="left:1330px;top:135.84px;font-size:12px;line-height:12px;color:#666666;transform:scaleX(0.9659);transform-origin:0 0;">Macros</div>
<div class="a" style="left:1374px;top:63px;width:1px;height:83px;background:#d5d5d5"></div>
<div class="a" style="left:0px;top:155px;width:470px;height:642px;background:#ffffff"></div>
<div class="a" style="left:0px;top:181px;width:1px;height:616px;background:#a0a0a0"></div>
<div class="a" style="left:470px;top:155px;width:5px;height:645px;background:#e3e3e3"></div>
<div class="a" style="left:470px;top:155px;width:1px;height:645px;background:#f5f5f5"></div>
<div class="a" style="left:0px;top:155px;width:469px;height:26px;background:#2b579a"></div>
<div class="t" style="left:6px;top:160.96px;font-size:15.4px;line-height:15.4px;color:#ffffff;">Nesting Explorer</div>
<svg class="a" style="left:419px;top:162px;" width="42" height="13" viewBox="0 0 42 13"><path d="M0 4 H9 L4.5 9Z" fill="#ffffff"/><path d="M19 0 V8 M22 0 V8 M17.5 0.5 H23.5 M16 8.5 H25 M20.5 9 V12" stroke="#ffffff" stroke-width="1.6" fill="none"/><path d="M33 1 L41 9 M41 1 L33 9" stroke="#ffffff" stroke-width="1.8"/></svg>
<div class="a" style="left:18px;top:191px;width:23px;height:1px;background-image:linear-gradient(to right,#777 50%,transparent 50%);background-size:2px 1px;"></div>
<div class="a" style="left:18px;top:192px;width:1px;height:47px;background-image:linear-gradient(to bottom,#777 50%,transparent 50%);background-size:1px 2px;"></div>
<div class="a" style="left:23px;top:207px;width:18px;height:1px;background-image:linear-gradient(to right,#777 50%,transparent 50%);background-size:2px 1px;"></div>
<div class="a" style="left:23px;top:239px;width:18px;height:1px;background-image:linear-gradient(to right,#777 50%,transparent 50%);background-size:2px 1px;"></div>
<div class="a" style="left:47px;top:215px;width:1px;height:8px;background-image:linear-gradient(to bottom,#777 50%,transparent 50%);background-size:1px 2px;"></div>
<div class="a" style="left:52px;top:223px;width:18px;height:1px;background-image:linear-gradient(to right,#777 50%,transparent 50%);background-size:2px 1px;"></div>
<div class="a" style="left:47px;top:247px;width:1px;height:8px;background-image:linear-gradient(to bottom,#777 50%,transparent 50%);background-size:1px 2px;"></div>
<div class="a" style="left:52px;top:255px;width:18px;height:1px;background-image:linear-gradient(to right,#777 50%,transparent 50%);background-size:2px 1px;"></div>
<svg class="a" style="left:14px;top:203px;" width="9" height="9" viewBox="0 0 9 9"><rect x="0.5" y="0.5" width="8" height="8" rx="1" fill="#fff" stroke="#a0a0a0"/><path d="M2 4.5 H7" stroke="#2b3f8c" stroke-width="1"/></svg>
<svg class="a" style="left:14px;top:235px;" width="9" height="9" viewBox="0 0 9 9"><rect x="0.5" y="0.5" width="8" height="8" rx="1" fill="#fff" stroke="#a0a0a0"/><path d="M2 4.5 H7" stroke="#2b3f8c" stroke-width="1"/></svg>
<svg class="a" style="left:43px;top:219px;" width="9" height="9" viewBox="0 0 9 9"><rect x="0.5" y="0.5" width="8" height="8" rx="1" fill="#fff" stroke="#a0a0a0"/><path d="M2 4.5 H7" stroke="#2b3f8c" stroke-width="1"/><path d="M4.5 2 V7" stroke="#2b3f8c" stroke-width="1"/></svg>
<svg class="a" style="left:43px;top:251px;" width="9" height="9" viewBox="0 0 9 9"><rect x="0.5" y="0.5" width="8" height="8" rx="1" fill="#fff" stroke="#a0a0a0"/><path d="M2 4.5 H7" stroke="#2b3f8c" stroke-width="1"/><path d="M4.5 2 V7" stroke="#2b3f8c" stroke-width="1"/></svg>
<svg class="a" style="left:42px;top:184px;" width="18" height="13" viewBox="0 0 18 13"><path d="M1 2.5 H8 L10 1 H17 V12 H1Z" fill="#e8e8e8" stroke="#9a9a9a" stroke-width="1"/><rect x="6" y="8" width="10" height="3" fill="#fff"/></svg>
<svg class="a" style="left:42px;top:200px;" width="18" height="13" viewBox="0 0 18 13"><path d="M1 2.5 H17 V12 H1Z" fill="#e8e8e8" stroke="#9a9a9a" stroke-width="1"/><path d="M1 7 H8 L10 5.5 H17" stroke="#9a9a9a" fill="none"/></svg>
<svg class="a" style="left:42px;top:232px;" width="18" height="13" viewBox="0 0 18 13"><path d="M1 2.5 H8 L10 1 H17 V12 H1Z" fill="#e8e8e8" stroke="#9a9a9a" stroke-width="1"/><rect x="6" y="8" width="10" height="3" fill="#fff"/></svg>
<svg class="a" style="left:72px;top:216px;" width="17" height="13" viewBox="0 0 17 13"><rect x="1" y="0.5" width="15" height="12" fill="#fff" stroke="#444" stroke-width="1"/><path d="M1 7 H16 M9 1 V12 M1 4 L6 1 M11 7 L15 12" stroke="#444" stroke-width="0.8" fill="none"/><path d="M4 0.5 L10 0.5 L5 5Z" fill="#e0303a"/><circle cx="4" cy="7" r="3" fill="#00aeef"/><path d="M2 9 L1.5 13 L4 11 L6 13 L5.5 9" fill="#00aeef"/></svg>
<svg class="a" style="left:73px;top:248px;" width="14" height="13" viewBox="0 0 14 13"><path d="M0 1 L2 0 L4 1 L6 0 L8 1 L10 0 L12 1 L14 0 V13 H0Z" fill="#dcdcdc"/></svg>
<div class="t" style="left:65.5px;top:186.03px;font-size:10.6px;line-height:10.6px;color:#000000;font-weight:bold;">Lantek Laser-304L-0.8000</div>
<div class="a" style="left:63px;top:199px;width:64px;height:16px;background:#0a6fd8"></div>
<div class="t" style="left:65.5px;top:202.03px;font-size:10.6px;line-height:10.6px;color:#ffffff;font-weight:bold;">Lantek Lase</div>
<div class="t" style="left:94px;top:217.27px;font-size:11.5px;line-height:11.5px;color:#000000;">304L-1</div>
<div class="t" style="left:65.5px;top:234.03px;font-size:10.6px;line-height:10.6px;color:#000000;font-weight:bold;">Lantek Lase</div>
<div class="t" style="left:94px;top:249.27px;font-size:11.5px;line-height:11.5px;color:#000000;">DC01-</div>
<div class="a" style="left:475px;top:155px;width:1008px;height:2px;background:linear-gradient(#8a8a8a,#3a3a3a)"></div>
<div class="a" style="left:475px;top:157px;width:1008px;height:639px;background:#000"></div>
<div class="a" style="left:473px;top:155px;width:2px;height:644px;background:linear-gradient(90deg,#b8b8b8,#6a6a6a)"></div>
<div class="a" style="left:1483px;top:155px;width:3px;height:644px;background:#fdfdfd"></div>
<div class="a" style="left:475px;top:796px;width:1011px;height:3px;background:#fdfdfd"></div>
<div class="a" style="left:0px;top:798px;width:1488px;height:3px;background:#d4d4d4"></div>
<svg class="a" style="left:475px;top:157px;overflow:hidden" width="1008" height="639" viewBox="0 0 1008 639"><rect x="12.5" y="133.5" width="981.5" height="491.0" fill="none" stroke="#c8c8c8" stroke-width="1"/><rect x="14.5" y="135.5" width="976.5" height="486.0" fill="none" stroke="#9a9a9a" stroke-width="1"/><g transform="translate(-475,-157)"><path d="M518.5 300 H495.5 V314 H594.7 V300 H618" fill="none" stroke="#ff0000" stroke-width="10.4" stroke-linejoin="round" stroke-linecap="square"/><path d="M518.5 300 H495.5 V314 H594.7 V300 H618" fill="none" stroke="#ff9966" stroke-width="8.4" stroke-linejoin="round" stroke-linecap="square"/><rect x="529.1" y="295.8" width="42.60000000000002" height="9" fill="#00b27a" stroke="#ff0000" stroke-width="1"/><rect x="558.2" y="297.3" width="4" height="6" fill="#a00000"/><circle cx="566.2" cy="300.3" r="2.6" fill="#ff2020" stroke="#fff" stroke-width="0.6"/><rect x="627.3" y="295.0" width="36.80000000000007" height="9" fill="#4db5ff" stroke="#ff0000" stroke-width="1"/><rect x="650.6" y="296.5" width="4" height="6" fill="#a00000"/><circle cx="658.6" cy="299.5" r="2.6" fill="#ff2020" stroke="#fff" stroke-width="0.6"/><path d="M518.8 773 H495.3 V758.5 H594.5 V773 H617.6" fill="none" stroke="#ff0000" stroke-width="10.4" stroke-linejoin="round" stroke-linecap="square"/><path d="M518.8 773 H495.3 V758.5 H594.5 V773 H617.6" fill="none" stroke="#ff9966" stroke-width="8.4" stroke-linejoin="round" stroke-linecap="square"/><rect x="529.1" y="769.0" width="43.10000000000002" height="9" fill="#00b27a" stroke="#ff0000" stroke-width="1"/><rect x="558.7" y="770.5" width="4" height="6" fill="#a00000"/><circle cx="566.7" cy="773.5" r="2.6" fill="#ff2020" stroke="#fff" stroke-width="0.6"/><rect x="627.9" y="769.0" width="35.89999999999998" height="9" fill="#4db5ff" stroke="#ff0000" stroke-width="1"/><rect x="650.3" y="770.5" width="4" height="6" fill="#a00000"/><circle cx="658.3" cy="773.5" r="2.6" fill="#ff2020" stroke="#fff" stroke-width="0.6"/><path d="M496 352 V329.3 H510.7 V429 H496 V444" fill="none" stroke="#ff0000" stroke-width="10.4" stroke-linejoin="round" stroke-linecap="square"/><path d="M496 352 V329.3 H510.7 V429 H496 V444" fill="none" stroke="#ff9966" stroke-width="8.4" stroke-linejoin="round" stroke-linecap="square"/><rect x="498.85" y="323.3" width="9" height="8" fill="#00f0ff"/><rect x="492.5" y="438" width="7" height="9" fill="#a00000"/><rect x="491.5" y="375.5" width="9" height="42" fill="#00b27a" stroke="#ff0000" stroke-width="1"/><rect x="491.5" y="373" width="9" height="8" fill="#00f0ff"/><rect x="492" y="383" width="8" height="5" fill="#a00000"/><circle cx="496.0" cy="382" r="2.2" fill="#ff2020"/><path d="M503.35 328.3 L502.35 363 L497 378 M498 389 V416 L513.7 437 L496 445" fill="none" stroke="#22cc22" stroke-width="1" stroke-dasharray="3 3"/><path d="M524.6 352 V329.3 H539.3000000000001 V430 H524.6 V450.6" fill="none" stroke="#ff0000" stroke-width="10.4" stroke-linejoin="round" stroke-linecap="square"/><path d="M524.6 352 V329.3 H539.3000000000001 V430 H524.6 V450.6" fill="none" stroke="#ff9966" stroke-width="8.4" stroke-linejoin="round" stroke-linecap="square"/><rect x="527.45" y="323.3" width="9" height="8" fill="#00f0ff"/><rect x="521.1" y="444.6" width="7" height="9" fill="#a00000"/><rect x="520.1" y="375.5" width="9" height="42" fill="#00b27a" stroke="#ff0000" stroke-width="1"/><rect x="520.1" y="373" width="9" height="8" fill="#00f0ff"/><rect x="520.6" y="383" width="8" height="5" fill="#a00000"/><circle cx="524.6" cy="382" r="2.2" fill="#ff2020"/><path d="M531.95 328.3 L530.95 363 L525.6 378 M526.6 389 V416 L542.3000000000001 438 L524.6 451.6" fill="none" stroke="#22cc22" stroke-width="1" stroke-dasharray="3 3"/><path d="M554 357 V334.4 H568.7 V436 H554 V455.7" fill="none" stroke="#ff0000" stroke-width="10.4" stroke-linejoin="round" stroke-linecap="square"/><path d="M554 357 V334.4 H568.7 V436 H554 V455.7" fill="none" stroke="#ff9966" stroke-width="8.4" stroke-linejoin="round" stroke-linecap="square"/><rect x="556.85" y="328.4" width="9" height="8" fill="#00f0ff"/><rect x="550.5" y="449.7" width="7" height="9" fill="#a00000"/><rect x="549.5" y="380.1" width="9" height="41.89999999999998" fill="#00b27a" stroke="#ff0000" stroke-width="1"/><rect x="549.5" y="377.6" width="9" height="8" fill="#00f0ff"/><rect x="550" y="387.6" width="8" height="5" fill="#a00000"/><circle cx="554.0" cy="386.6" r="2.2" fill="#ff2020"/><path d="M561.35 333.4 L560.35 368 L555 382.6 M556 393.6 V420.5 L571.7 444 L554 456.7" fill="none" stroke="#22cc22" stroke-width="1" stroke-dasharray="3 3"/><path d="M583 352 V330 H597.7 V431 H583 V451" fill="none" stroke="#ff0000" stroke-width="10.4" stroke-linejoin="round" stroke-linecap="square"/><path d="M583 352 V330 H597.7 V431 H583 V451" fill="none" stroke="#ff9966" stroke-width="8.4" stroke-linejoin="round" stroke-linecap="square"/><rect x="585.85" y="324" width="9" height="8" fill="#00f0ff"/><rect x="579.5" y="445" width="7" height="9" fill="#a00000"/><rect x="578.5" y="375.5" width="9" height="43" fill="#00b27a" stroke="#ff0000" stroke-width="1"/><rect x="578.5" y="373" width="9" height="8" fill="#00f0ff"/><rect x="579" y="383" width="8" height="5" fill="#a00000"/><circle cx="583.0" cy="382" r="2.2" fill="#ff2020"/><path d="M590.35 329 L589.35 363 L584 378 M585 389 V417 L600.7 439 L583 452" fill="none" stroke="#22cc22" stroke-width="1" stroke-dasharray="3 3"/><path d="M628 341 V319 H613.5 V416 H628 V441" fill="none" stroke="#ff0000" stroke-width="10.4" stroke-linejoin="round" stroke-linecap="square"/><path d="M628 341 V319 H613.5 V416 H628 V441" fill="none" stroke="#ff9966" stroke-width="8.4" stroke-linejoin="round" stroke-linecap="square"/><rect x="616" y="313" width="9" height="8" fill="#00f0ff"/><path d="M628 379 V355.5 H642.7 V455 H628 V478" fill="none" stroke="#ff0000" stroke-width="10.4" stroke-linejoin="round" stroke-linecap="square"/><path d="M628 379 V355.5 H642.7 V455 H628 V478" fill="none" stroke="#ff9966" stroke-width="8.4" stroke-linejoin="round" stroke-linecap="square"/><rect x="630" y="349" width="9" height="8" fill="#00f0ff"/><path d="M657 336.8 V313.3 H671.7 V412 H657 V435" fill="none" stroke="#ff0000" stroke-width="10.4" stroke-linejoin="round" stroke-linecap="square"/><path d="M657 336.8 V313.3 H671.7 V412 H657 V435" fill="none" stroke="#ff9966" stroke-width="8.4" stroke-linejoin="round" stroke-linecap="square"/><rect x="659.85" y="307.3" width="9" height="8" fill="#00f0ff"/><rect x="653.5" y="429" width="7" height="9" fill="#a00000"/><rect x="652.5" y="356.1" width="9" height="46.89999999999998" fill="#00b27a" stroke="#ff0000" stroke-width="1"/><rect x="652.5" y="353.6" width="9" height="8" fill="#00f0ff"/><rect x="653" y="363.6" width="8" height="5" fill="#a00000"/><circle cx="657.0" cy="362.6" r="2.2" fill="#ff2020"/><path d="M664.35 312.3 L663.35 347.8 L658 358.6 M659 369.6 V401.5 L674.7 420 L657 436" fill="none" stroke="#22cc22" stroke-width="1" stroke-dasharray="3 3"/><path d="M687 321.5 V299.5 H701.7 V398.5 H687 V421" fill="none" stroke="#ff0000" stroke-width="10.4" stroke-linejoin="round" stroke-linecap="square"/><path d="M687 321.5 V299.5 H701.7 V398.5 H687 V421" fill="none" stroke="#ff9966" stroke-width="8.4" stroke-linejoin="round" stroke-linecap="square"/><rect x="683" y="318.5" width="8" height="8" fill="#00f0ff"/><rect x="683.5" y="415" width="7" height="9" fill="#a00000"/><rect x="682.5" y="345.2" width="9" height="42.60000000000002" fill="#00b27a" stroke="#ff0000" stroke-width="1"/><rect x="682.5" y="342.7" width="9" height="8" fill="#00f0ff"/><rect x="683" y="352.7" width="8" height="5" fill="#a00000"/><circle cx="687.0" cy="351.7" r="2.2" fill="#ff2020"/><path d="M694.35 298.5 L693.35 332.5 L688 347.7 M689 358.7 V386.3 L704.7 406.5 L687 422" fill="none" stroke="#22cc22" stroke-width="1" stroke-dasharray="3 3"/><path d="M716 321.5 V299.5 H730.7 V398.5 H716 V421" fill="none" stroke="#ff0000" stroke-width="10.4" stroke-linejoin="round" stroke-linecap="square"/><path d="M716 321.5 V299.5 H730.7 V398.5 H716 V421" fill="none" stroke="#ff9966" stroke-width="8.4" stroke-linejoin="round" stroke-linecap="square"/><rect x="712" y="318.5" width="8" height="8" fill="#00f0ff"/><rect x="712.5" y="415" width="7" height="9" fill="#a00000"/><rect x="711.5" y="345.2" width="9" height="42.60000000000002" fill="#00b27a" stroke="#ff0000" stroke-width="1"/><rect x="711.5" y="342.7" width="9" height="8" fill="#00f0ff"/><rect x="712" y="352.7" width="8" height="5" fill="#a00000"/><circle cx="716.0" cy="351.7" r="2.2" fill="#ff2020"/><path d="M723.35 298.5 L722.35 332.5 L717 347.7 M718 358.7 V386.3 L733.7 406.5 L716 422" fill="none" stroke="#22cc22" stroke-width="1" stroke-dasharray="3 3"/><path d="M745 321.5 V299.5 H759.7 V398.5 H745 V421" fill="none" stroke="#ff0000" stroke-width="10.4" stroke-linejoin="round" stroke-linecap="square"/><path d="M745 321.5 V299.5 H759.7 V398.5 H745 V421" fill="none" stroke="#ff9966" stroke-width="8.4" stroke-linejoin="round" stroke-linecap="square"/><rect x="741" y="318.5" width="8" height="8" fill="#00f0ff"/><rect x="741.5" y="415" width="7" height="9" fill="#a00000"/><rect x="740.5" y="345.2" width="9" height="42.60000000000002" fill="#00b27a" stroke="#ff0000" stroke-width="1"/><rect x="740.5" y="342.7" width="9" height="8" fill="#00f0ff"/><rect x="741" y="352.7" width="8" height="5" fill="#a00000"/><circle cx="745.0" cy="351.7" r="2.2" fill="#ff2020"/><path d="M752.35 298.5 L751.35 332.5 L746 347.7 M747 358.7 V386.3 L762.7 406.5 L745 422" fill="none" stroke="#22cc22" stroke-width="1" stroke-dasharray="3 3"/><path d="M775 320.5 V300 H789.7 V397 H775 V421" fill="none" stroke="#ff0000" stroke-width="10.4" stroke-linejoin="round" stroke-linecap="square"/><path d="M775 320.5 V300 H789.7 V397 H775 V421" fill="none" stroke="#ff9966" stroke-width="8.4" stroke-linejoin="round" stroke-linecap="square"/><rect x="771" y="317.5" width="8" height="8" fill="#00f0ff"/><rect x="771.5" y="415" width="7" height="9" fill="#a00000"/><rect x="770.5" y="340.5" width="9" height="47.5" fill="#00b27a" stroke="#ff0000" stroke-width="1"/><rect x="770.5" y="338" width="9" height="8" fill="#00f0ff"/><rect x="771" y="348" width="8" height="5" fill="#a00000"/><circle cx="775.0" cy="347" r="2.2" fill="#ff2020"/><path d="M782.35 299 L781.35 331.5 L776 343 M777 354 V386.5 L792.7 405 L775 422" fill="none" stroke="#22cc22" stroke-width="1" stroke-dasharray="3 3"/><path d="M805 329 V304 H819.7 V403 H805 V428" fill="none" stroke="#ff0000" stroke-width="10.4" stroke-linejoin="round" stroke-linecap="square"/><path d="M805 329 V304 H819.7 V403 H805 V428" fill="none" stroke="#ff9966" stroke-width="8.4" stroke-linejoin="round" stroke-linecap="square"/><rect x="807.85" y="298" width="9" height="8" fill="#00f0ff"/><rect x="801.5" y="422" width="7" height="9" fill="#a00000"/><rect x="800.5" y="349.0" width="9" height="45.0" fill="#00b27a" stroke="#ff0000" stroke-width="1"/><rect x="800.5" y="346.5" width="9" height="8" fill="#00f0ff"/><rect x="801" y="356.5" width="8" height="5" fill="#a00000"/><circle cx="805.0" cy="355.5" r="2.2" fill="#ff2020"/><path d="M812.35 303 L811.35 340 L806 351.5 M807 362.5 V392.5 L822.7 411 L805 429" fill="none" stroke="#22cc22" stroke-width="1" stroke-dasharray="3 3"/><path d="M834 329 V304 H848.7 V403 H834 V428" fill="none" stroke="#ff0000" stroke-width="10.4" stroke-linejoin="round" stroke-linecap="square"/><path d="M834 329 V304 H848.7 V403 H834 V428" fill="none" stroke="#ff9966" stroke-width="8.4" stroke-linejoin="round" stroke-linecap="square"/><rect x="836.85" y="298" width="9" height="8" fill="#00f0ff"/><rect x="830.5" y="422" width="7" height="9" fill="#a00000"/><rect x="829.5" y="349.0" width="9" height="45.0" fill="#00b27a" stroke="#ff0000" stroke-width="1"/><rect x="829.5" y="346.5" width="9" height="8" fill="#00f0ff"/><rect x="830" y="356.5" width="8" height="5" fill="#a00000"/><circle cx="834.0" cy="355.5" r="2.2" fill="#ff2020"/><path d="M841.35 303 L840.35 340 L835 351.5 M836 362.5 V392.5 L851.7 411 L834 429" fill="none" stroke="#22cc22" stroke-width="1" stroke-dasharray="3 3"/><path d="M863 329 V304 H877.7 V403 H863 V428" fill="none" stroke="#ff0000" stroke-width="10.4" stroke-linejoin="round" stroke-linecap="square"/><path d="M863 329 V304 H877.7 V403 H863 V428" fill="none" stroke="#ff9966" stroke-width="8.4" stroke-linejoin="round" stroke-linecap="square"/><rect x="865.85" y="298" width="9" height="8" fill="#00f0ff"/><rect x="859.5" y="422" width="7" height="9" fill="#a00000"/><rect x="858.5" y="349.0" width="9" height="45.0" fill="#00b27a" stroke="#ff0000" stroke-width="1"/><rect x="858.5" y="346.5" width="9" height="8" fill="#00f0ff"/><rect x="859" y="356.5" width="8" height="5" fill="#a00000"/><circle cx="863.0" cy="355.5" r="2.2" fill="#ff2020"/><path d="M870.35 303 L869.35 340 L864 351.5 M865 362.5 V392.5 L880.7 411 L863 429" fill="none" stroke="#22cc22" stroke-width="1" stroke-dasharray="3 3"/><path d="M892 329 V304 H906.7 V403 H892 V428" fill="none" stroke="#ff0000" stroke-width="10.4" stroke-linejoin="round" stroke-linecap="square"/><path d="M892 329 V304 H906.7 V403 H892 V428" fill="none" stroke="#ff9966" stroke-width="8.4" stroke-linejoin="round" stroke-linecap="square"/><rect x="894.85" y="298" width="9" height="8" fill="#00f0ff"/><rect x="888.5" y="422" width="7" height="9" fill="#a00000"/><rect x="887.5" y="349.0" width="9" height="45.0" fill="#00b27a" stroke="#ff0000" stroke-width="1"/><rect x="887.5" y="346.5" width="9" height="8" fill="#00f0ff"/><rect x="888" y="356.5" width="8" height="5" fill="#a00000"/><circle cx="892.0" cy="355.5" r="2.2" fill="#ff2020"/><path d="M899.35 303 L898.35 340 L893 351.5 M894 362.5 V392.5 L909.7 411 L892 429" fill="none" stroke="#22cc22" stroke-width="1" stroke-dasharray="3 3"/><path d="M922 358 V335 H936.7 V433.5 H922 V457" fill="none" stroke="#ff0000" stroke-width="10.4" stroke-linejoin="round" stroke-linecap="square"/><path d="M922 358 V335 H936.7 V433.5 H922 V457" fill="none" stroke="#ff9966" stroke-width="8.4" stroke-linejoin="round" stroke-linecap="square"/><rect x="924.85" y="329" width="9" height="8" fill="#00f0ff"/><rect x="918.5" y="451" width="7" height="9" fill="#a00000"/><rect x="917.5" y="378.1" width="9" height="46.39999999999998" fill="#00b27a" stroke="#ff0000" stroke-width="1"/><rect x="917.5" y="375.6" width="9" height="8" fill="#00f0ff"/><rect x="918" y="385.6" width="8" height="5" fill="#a00000"/><circle cx="922.0" cy="384.6" r="2.2" fill="#ff2020"/><path d="M929.35 334 L928.35 369 L923 380.6 M924 391.6 V423 L939.7 441.5 L922 458" fill="none" stroke="#22cc22" stroke-width="1" stroke-dasharray="3 3"/><path d="M951 331 V307.5 H965.7 V409 H951 V431" fill="none" stroke="#ff0000" stroke-width="10.4" stroke-linejoin="round" stroke-linecap="square"/><path d="M951 331 V307.5 H965.7 V409 H951 V431" fill="none" stroke="#ff9966" stroke-width="8.4" stroke-linejoin="round" stroke-linecap="square"/><rect x="953.85" y="301.5" width="9" height="8" fill="#00f0ff"/><rect x="947.5" y="425" width="7" height="9" fill="#a00000"/><rect x="946.5" y="352.5" width="9" height="46" fill="#00b27a" stroke="#ff0000" stroke-width="1"/><rect x="946.5" y="350" width="9" height="8" fill="#00f0ff"/><rect x="947" y="360" width="8" height="5" fill="#a00000"/><circle cx="951.0" cy="359" r="2.2" fill="#ff2020"/><path d="M958.35 306.5 L957.35 342 L952 355 M953 366 V397 L968.7 417 L951 432" fill="none" stroke="#22cc22" stroke-width="1" stroke-dasharray="3 3"/><path d="M980 329 V304 H994.7 V404 H980 V428" fill="none" stroke="#ff0000" stroke-width="10.4" stroke-linejoin="round" stroke-linecap="square"/><path d="M980 329 V304 H994.7 V404 H980 V428" fill="none" stroke="#ff9966" stroke-width="8.4" stroke-linejoin="round" stroke-linecap="square"/><rect x="982.85" y="298" width="9" height="8" fill="#00f0ff"/><rect x="976.5" y="422" width="7" height="9" fill="#a00000"/><rect x="975.5" y="347.5" width="9" height="45" fill="#00b27a" stroke="#ff0000" stroke-width="1"/><rect x="975.5" y="345" width="9" height="8" fill="#00f0ff"/><rect x="976" y="355" width="8" height="5" fill="#a00000"/><circle cx="980.0" cy="354" r="2.2" fill="#ff2020"/><path d="M987.35 303 L986.35 340 L981 350 M982 361 V391 L997.7 412 L980 429" fill="none" stroke="#22cc22" stroke-width="1" stroke-dasharray="3 3"/><path d="M1012.5 393.7 V413 H998 V519 H1012.5 V497" fill="none" stroke="#ff0000" stroke-width="10.4" stroke-linejoin="round" stroke-linecap="square"/><path d="M1012.5 393.7 V413 H998 V519 H1012.5 V497" fill="none" stroke="#ff9966" stroke-width="8.4" stroke-linejoin="round" stroke-linecap="square"/><rect x="1008" y="388" width="9" height="8" fill="#00f0ff"/><rect x="1009" y="396" width="7" height="8" fill="#a00000"/><path d="M657 450 H681 V436 H779 V450 H756" fill="none" stroke="#ff0000" stroke-width="10.4" stroke-linejoin="round" stroke-linecap="square"/><path d="M657 450 H681 V436 H779 V450 H756" fill="none" stroke="#ff9966" stroke-width="8.4" stroke-linejoin="round" stroke-linecap="square"/><rect x="638.2" y="465.5" width="35.299999999999955" height="9" fill="#4db5ff" stroke="#ff0000" stroke-width="1"/><rect x="660" y="467" width="4" height="6" fill="#a00000"/><circle cx="668" cy="470.0" r="2.6" fill="#ff2020" stroke="#fff" stroke-width="0.6"/><rect x="638.2" y="480.8" width="35.299999999999955" height="9" fill="#4db5ff" stroke="#ff0000" stroke-width="1"/><rect x="660" y="482.3" width="4" height="6" fill="#a00000"/><circle cx="668" cy="485.3" r="2.6" fill="#ff2020" stroke="#fff" stroke-width="0.6"/><rect x="789.5" y="437.5" width="36" height="9" fill="#4db5ff" stroke="#ff0000" stroke-width="1"/><rect x="812" y="439" width="4" height="6" fill="#a00000"/><circle cx="820" cy="442.0" r="2.6" fill="#ff2020" stroke="#fff" stroke-width="0.6"/><rect x="831.5" y="437.5" width="34" height="9" fill="#4db5ff" stroke="#ff0000" stroke-width="1"/><rect x="852" y="439" width="4" height="6" fill="#a00000"/><circle cx="860" cy="442.0" r="2.6" fill="#ff2020" stroke="#fff" stroke-width="0.6"/><rect x="788.5" y="451.5" width="35" height="9" fill="#4db5ff" stroke="#ff0000" stroke-width="1"/><rect x="810" y="453" width="4" height="6" fill="#a00000"/><circle cx="818" cy="456.0" r="2.6" fill="#ff2020" stroke="#fff" stroke-width="0.6"/><rect x="826.5" y="494.5" width="36" height="9" fill="#4db5ff" stroke="#ff0000" stroke-width="1"/><rect x="849" y="496" width="4" height="6" fill="#a00000"/><circle cx="857" cy="499.0" r="2.6" fill="#ff2020" stroke="#fff" stroke-width="0.6"/><rect x="874.5" y="479.5" width="35" height="9" fill="#4db5ff" stroke="#ff0000" stroke-width="1"/><rect x="896" y="481" width="4" height="6" fill="#a00000"/><circle cx="904" cy="484.0" r="2.6" fill="#ff2020" stroke="#fff" stroke-width="0.6"/><rect x="869.5" y="494.5" width="35" height="9" fill="#4db5ff" stroke="#ff0000" stroke-width="1"/><rect x="891" y="496" width="4" height="6" fill="#a00000"/><circle cx="899" cy="499.0" r="2.6" fill="#ff2020" stroke="#fff" stroke-width="0.6"/><rect x="946.5" y="494.5" width="36" height="9" fill="#4db5ff" stroke="#ff0000" stroke-width="1"/><rect x="969" y="496" width="4" height="6" fill="#a00000"/><circle cx="977" cy="499.0" r="2.6" fill="#ff2020" stroke="#fff" stroke-width="0.6"/><g transform="rotate(-14 726 455)"><rect x="707.5" y="449.5" width="37" height="9" fill="#4db5ff" stroke="#ff0000" stroke-width="1"/><rect x="731" y="451" width="4" height="6" fill="#a00000"/><circle cx="739" cy="454.0" r="2.6" fill="#ff2020" stroke="#fff" stroke-width="0.6"/></g><g transform="rotate(-24 951 451)"><rect x="933.5" y="446.5" width="35" height="9" fill="#4db5ff" stroke="#ff0000" stroke-width="1"/><rect x="955" y="448" width="4" height="6" fill="#a00000"/><circle cx="963" cy="451.0" r="2.6" fill="#ff2020" stroke="#fff" stroke-width="0.6"/></g><rect x="680.5" y="457.5" width="9" height="39" fill="#4db5ff" stroke="#ff0000" stroke-width="1"/><rect x="680.5" y="455" width="9" height="8" fill="#00f0ff"/><rect x="681" y="465" width="8" height="5" fill="#a00000"/><circle cx="685.0" cy="464" r="2.2" fill="#ff2020"/><rect x="694.9" y="459.0" width="9" height="39.0" fill="#4db5ff" stroke="#ff0000" stroke-width="1"/><rect x="694.9" y="456.5" width="9" height="8" fill="#00f0ff"/><rect x="695.4" y="466.5" width="8" height="5" fill="#a00000"/><circle cx="699.4" cy="465.5" r="2.2" fill="#ff2020"/><rect x="710.2" y="464.1" width="9" height="39.0" fill="#4db5ff" stroke="#ff0000" stroke-width="1"/><rect x="710.2" y="461.6" width="9" height="8" fill="#00f0ff"/><rect x="710.7" y="471.6" width="8" height="5" fill="#a00000"/><circle cx="714.7" cy="470.6" r="2.2" fill="#ff2020"/><rect x="724.5" y="464.1" width="9" height="39.0" fill="#4db5ff" stroke="#ff0000" stroke-width="1"/><rect x="724.5" y="461.6" width="9" height="8" fill="#00f0ff"/><rect x="725" y="471.6" width="8" height="5" fill="#a00000"/><circle cx="729.0" cy="470.6" r="2.2" fill="#ff2020"/><rect x="739.2" y="464.1" width="9" height="39.0" fill="#4db5ff" stroke="#ff0000" stroke-width="1"/><rect x="739.2" y="461.6" width="9" height="8" fill="#00f0ff"/><rect x="739.7" y="471.6" width="8" height="5" fill="#a00000"/><circle cx="743.7" cy="470.6" r="2.2" fill="#ff2020"/><rect x="754.5" y="464.1" width="9" height="39.0" fill="#4db5ff" stroke="#ff0000" stroke-width="1"/><rect x="754.5" y="461.6" width="9" height="8" fill="#00f0ff"/><rect x="755" y="471.6" width="8" height="5" fill="#a00000"/><circle cx="759.0" cy="470.6" r="2.2" fill="#ff2020"/><rect x="769.0" y="467.5" width="9" height="35" fill="#4db5ff" stroke="#ff0000" stroke-width="1"/><rect x="769.0" y="465" width="9" height="8" fill="#00f0ff"/><rect x="769.5" y="475" width="8" height="5" fill="#a00000"/><circle cx="773.5" cy="474" r="2.2" fill="#ff2020"/><rect x="783.5" y="467.5" width="9" height="35" fill="#4db5ff" stroke="#ff0000" stroke-width="1"/><rect x="783.5" y="465" width="9" height="8" fill="#00f0ff"/><rect x="784" y="475" width="8" height="5" fill="#a00000"/><circle cx="788.0" cy="474" r="2.2" fill="#ff2020"/><rect x="797.5" y="467.5" width="9" height="35" fill="#4db5ff" stroke="#ff0000" stroke-width="1"/><rect x="797.5" y="465" width="9" height="8" fill="#00f0ff"/><rect x="798" y="475" width="8" height="5" fill="#a00000"/><circle cx="802.0" cy="474" r="2.2" fill="#ff2020"/><rect x="812.5" y="467.5" width="9" height="35" fill="#4db5ff" stroke="#ff0000" stroke-width="1"/><rect x="812.5" y="465" width="9" height="8" fill="#00f0ff"/><rect x="813" y="475" width="8" height="5" fill="#a00000"/><circle cx="817.0" cy="474" r="2.2" fill="#ff2020"/><rect x="828.1" y="453.1" width="9" height="36.39999999999998" fill="#4db5ff" stroke="#ff0000" stroke-width="1"/><rect x="828.1" y="450.6" width="9" height="8" fill="#00f0ff"/><rect x="828.6" y="460.6" width="8" height="5" fill="#a00000"/><circle cx="832.6" cy="459.6" r="2.2" fill="#ff2020"/><rect x="843.5" y="453.1" width="9" height="36.39999999999998" fill="#4db5ff" stroke="#ff0000" stroke-width="1"/><rect x="843.5" y="450.6" width="9" height="8" fill="#00f0ff"/><rect x="844" y="460.6" width="8" height="5" fill="#a00000"/><circle cx="848.0" cy="459.6" r="2.2" fill="#ff2020"/><rect x="858.5" y="453.1" width="9" height="36.39999999999998" fill="#4db5ff" stroke="#ff0000" stroke-width="1"/><rect x="858.5" y="450.6" width="9" height="8" fill="#00f0ff"/><rect x="859" y="460.6" width="8" height="5" fill="#a00000"/><circle cx="863.0" cy="459.6" r="2.2" fill="#ff2020"/><rect x="874.1" y="436.2" width="9" height="39.0" fill="#4db5ff" stroke="#ff0000" stroke-width="1"/><rect x="874.1" y="433.7" width="9" height="8" fill="#00f0ff"/><rect x="874.6" y="443.7" width="8" height="5" fill="#a00000"/><circle cx="878.6" cy="442.7" r="2.2" fill="#ff2020"/><rect x="888.5" y="436.2" width="9" height="39.0" fill="#4db5ff" stroke="#ff0000" stroke-width="1"/><rect x="888.5" y="433.7" width="9" height="8" fill="#00f0ff"/><rect x="889" y="443.7" width="8" height="5" fill="#a00000"/><circle cx="893.0" cy="442.7" r="2.2" fill="#ff2020"/><rect x="903.2" y="436.2" width="9" height="39.0" fill="#4db5ff" stroke="#ff0000" stroke-width="1"/><rect x="903.2" y="433.7" width="9" height="8" fill="#00f0ff"/><rect x="903.7" y="443.7" width="8" height="5" fill="#a00000"/><circle cx="907.7" cy="442.7" r="2.2" fill="#ff2020"/><rect x="918.9" y="465.5" width="9" height="37.5" fill="#4db5ff" stroke="#ff0000" stroke-width="1"/><rect x="918.9" y="463" width="9" height="8" fill="#00f0ff"/><rect x="919.4" y="473" width="8" height="5" fill="#a00000"/><circle cx="923.4" cy="472" r="2.2" fill="#ff2020"/><rect x="933.5" y="465.5" width="9" height="37.5" fill="#4db5ff" stroke="#ff0000" stroke-width="1"/><rect x="933.5" y="463" width="9" height="8" fill="#00f0ff"/><rect x="934" y="473" width="8" height="5" fill="#a00000"/><circle cx="938.0" cy="472" r="2.2" fill="#ff2020"/><rect x="971.0" y="450.5" width="9" height="39" fill="#4db5ff" stroke="#ff0000" stroke-width="1"/><rect x="971.0" y="448" width="9" height="8" fill="#00f0ff"/><rect x="971.5" y="458" width="8" height="5" fill="#a00000"/><circle cx="975.5" cy="457" r="2.2" fill="#ff2020"/><path d="M496 489 V466.4 H510.7 V565 H496 V587.7" fill="none" stroke="#ff0000" stroke-width="10.4" stroke-linejoin="round" stroke-linecap="square"/><path d="M496 489 V466.4 H510.7 V565 H496 V587.7" fill="none" stroke="#ff9966" stroke-width="8.4" stroke-linejoin="round" stroke-linecap="square"/><rect x="498.85" y="460.4" width="9" height="8" fill="#00f0ff"/><rect x="492.5" y="581.7" width="7" height="9" fill="#a00000"/><rect x="491.5" y="509.2" width="9" height="45.30000000000001" fill="#00b27a" stroke="#ff0000" stroke-width="1"/><rect x="491.5" y="506.7" width="9" height="8" fill="#00f0ff"/><rect x="492" y="516.7" width="8" height="5" fill="#a00000"/><circle cx="496.0" cy="515.7" r="2.2" fill="#ff2020"/><path d="M503.35 465.4 L502.35 500 L497 511.7 M498 522.7 V553 L513.7 573 L496 588.7" fill="none" stroke="#22cc22" stroke-width="1" stroke-dasharray="3 3"/><path d="M524.6 489 V466.4 H539.3000000000001 V565 H524.6 V587.7" fill="none" stroke="#ff0000" stroke-width="10.4" stroke-linejoin="round" stroke-linecap="square"/><path d="M524.6 489 V466.4 H539.3000000000001 V565 H524.6 V587.7" fill="none" stroke="#ff9966" stroke-width="8.4" stroke-linejoin="round" stroke-linecap="square"/><rect x="527.45" y="460.4" width="9" height="8" fill="#00f0ff"/><rect x="521.1" y="581.7" width="7" height="9" fill="#a00000"/><rect x="520.1" y="509.2" width="9" height="45.30000000000001" fill="#00b27a" stroke="#ff0000" stroke-width="1"/><rect x="520.1" y="506.7" width="9" height="8" fill="#00f0ff"/><rect x="520.6" y="516.7" width="8" height="5" fill="#a00000"/><circle cx="524.6" cy="515.7" r="2.2" fill="#ff2020"/><path d="M531.95 465.4 L530.95 500 L525.6 511.7 M526.6 522.7 V553 L542.3000000000001 573 L524.6 588.7" fill="none" stroke="#22cc22" stroke-width="1" stroke-dasharray="3 3"/><path d="M569 452 V471 H554.3 V560 H569 V547" fill="none" stroke="#ff0000" stroke-width="10.4" stroke-linejoin="round" stroke-linecap="square"/><path d="M569 452 V471 H554.3 V560 H569 V547" fill="none" stroke="#ff9966" stroke-width="8.4" stroke-linejoin="round" stroke-linecap="square"/><rect x="564.5" y="446" width="9" height="8" fill="#00f0ff"/><rect x="565.5" y="454" width="7" height="8" fill="#a00000"/><path d="M569 508 V485.3 H583.7 V584 H569 V606" fill="none" stroke="#ff0000" stroke-width="10.4" stroke-linejoin="round" stroke-linecap="square"/><path d="M569 508 V485.3 H583.7 V584 H569 V606" fill="none" stroke="#ff9966" stroke-width="8.4" stroke-linejoin="round" stroke-linecap="square"/><rect x="571.85" y="479.3" width="9" height="8" fill="#00f0ff"/><rect x="565.5" y="600" width="7" height="9" fill="#a00000"/><path d="M598 466.6 V443 H612.7 V537 H598 V565" fill="none" stroke="#ff0000" stroke-width="10.4" stroke-linejoin="round" stroke-linecap="square"/><path d="M598 466.6 V443 H612.7 V537 H598 V565" fill="none" stroke="#ff9966" stroke-width="8.4" stroke-linejoin="round" stroke-linecap="square"/><rect x="600.85" y="437" width="9" height="8" fill="#00f0ff"/><rect x="594.5" y="559" width="7" height="9" fill="#a00000"/><rect x="593.5" y="485.9" width="9" height="46.200000000000045" fill="#00b27a" stroke="#ff0000" stroke-width="1"/><rect x="593.5" y="483.4" width="9" height="8" fill="#00f0ff"/><rect x="594" y="493.4" width="8" height="5" fill="#a00000"/><circle cx="598.0" cy="492.4" r="2.2" fill="#ff2020"/><path d="M605.35 442 L604.35 477.6 L599 488.4 M600 499.4 V530.6 L615.7 545 L598 566" fill="none" stroke="#22cc22" stroke-width="1" stroke-dasharray="3 3"/><path d="M628 522 V497.7 H642.7 V598.5 H628 V620.4" fill="none" stroke="#ff0000" stroke-width="10.4" stroke-linejoin="round" stroke-linecap="square"/><path d="M628 522 V497.7 H642.7 V598.5 H628 V620.4" fill="none" stroke="#ff9966" stroke-width="8.4" stroke-linejoin="round" stroke-linecap="square"/><rect x="630.85" y="491.7" width="9" height="8" fill="#00f0ff"/><rect x="624.5" y="614.4" width="7" height="9" fill="#a00000"/><rect x="623.5" y="541.5" width="9" height="47" fill="#00b27a" stroke="#ff0000" stroke-width="1"/><rect x="623.5" y="539" width="9" height="8" fill="#00f0ff"/><rect x="624" y="549" width="8" height="5" fill="#a00000"/><circle cx="628.0" cy="548" r="2.2" fill="#ff2020"/><path d="M635.35 496.7 L634.35 533 L629 544 M630 555 V587 L645.7 606.5 L628 621.4" fill="none" stroke="#22cc22" stroke-width="1" stroke-dasharray="3 3"/><path d="M657 522 V497.7 H671.7 V598.5 H657 V620.4" fill="none" stroke="#ff0000" stroke-width="10.4" stroke-linejoin="round" stroke-linecap="square"/><path d="M657 522 V497.7 H671.7 V598.5 H657 V620.4" fill="none" stroke="#ff9966" stroke-width="8.4" stroke-linejoin="round" stroke-linecap="square"/><rect x="659.85" y="491.7" width="9" height="8" fill="#00f0ff"/><rect x="653.5" y="614.4" width="7" height="9" fill="#a00000"/><rect x="652.5" y="541.5" width="9" height="47" fill="#00b27a" stroke="#ff0000" stroke-width="1"/><rect x="652.5" y="539" width="9" height="8" fill="#00f0ff"/><rect x="653" y="549" width="8" height="5" fill="#a00000"/><circle cx="657.0" cy="548" r="2.2" fill="#ff2020"/><path d="M664.35 496.7 L663.35 533 L658 544 M659 555 V587 L674.7 606.5 L657 621.4" fill="none" stroke="#22cc22" stroke-width="1" stroke-dasharray="3 3"/><path d="M687 531 V505.7 H701.7 V607 H687 V630" fill="none" stroke="#ff0000" stroke-width="10.4" stroke-linejoin="round" stroke-linecap="square"/><path d="M687 531 V505.7 H701.7 V607 H687 V630" fill="none" stroke="#ff9966" stroke-width="8.4" stroke-linejoin="round" stroke-linecap="square"/><rect x="689.85" y="499.7" width="9" height="8" fill="#00f0ff"/><rect x="683.5" y="624" width="7" height="9" fill="#a00000"/><rect x="682.5" y="549.5" width="9" height="48" fill="#00b27a" stroke="#ff0000" stroke-width="1"/><rect x="682.5" y="547" width="9" height="8" fill="#00f0ff"/><rect x="683" y="557" width="8" height="5" fill="#a00000"/><circle cx="687.0" cy="556" r="2.2" fill="#ff2020"/><path d="M694.35 504.7 L693.35 542 L688 552 M689 563 V596 L704.7 615 L687 631" fill="none" stroke="#22cc22" stroke-width="1" stroke-dasharray="3 3"/><path d="M716 537 V511.5 H730.7 V614 H716 V636" fill="none" stroke="#ff0000" stroke-width="10.4" stroke-linejoin="round" stroke-linecap="square"/><path d="M716 537 V511.5 H730.7 V614 H716 V636" fill="none" stroke="#ff9966" stroke-width="8.4" stroke-linejoin="round" stroke-linecap="square"/><rect x="718.85" y="505.5" width="9" height="8" fill="#00f0ff"/><rect x="712.5" y="630" width="7" height="9" fill="#a00000"/><rect x="711.5" y="556.5" width="9" height="47" fill="#00b27a" stroke="#ff0000" stroke-width="1"/><rect x="711.5" y="554" width="9" height="8" fill="#00f0ff"/><rect x="712" y="564" width="8" height="5" fill="#a00000"/><circle cx="716.0" cy="563" r="2.2" fill="#ff2020"/><path d="M723.35 510.5 L722.35 548 L717 559 M718 570 V602 L733.7 622 L716 637" fill="none" stroke="#22cc22" stroke-width="1" stroke-dasharray="3 3"/><path d="M745 537 V511.5 H759.7 V614 H745 V636" fill="none" stroke="#ff0000" stroke-width="10.4" stroke-linejoin="round" stroke-linecap="square"/><path d="M745 537 V511.5 H759.7 V614 H745 V636" fill="none" stroke="#ff9966" stroke-width="8.4" stroke-linejoin="round" stroke-linecap="square"/><rect x="747.85" y="505.5" width="9" height="8" fill="#00f0ff"/><rect x="741.5" y="630" width="7" height="9" fill="#a00000"/><rect x="740.5" y="556.5" width="9" height="47" fill="#00b27a" stroke="#ff0000" stroke-width="1"/><rect x="740.5" y="554" width="9" height="8" fill="#00f0ff"/><rect x="741" y="564" width="8" height="5" fill="#a00000"/><circle cx="745.0" cy="563" r="2.2" fill="#ff2020"/><path d="M752.35 510.5 L751.35 548 L746 559 M747 570 V602 L762.7 622 L745 637" fill="none" stroke="#22cc22" stroke-width="1" stroke-dasharray="3 3"/><path d="M775 537 V511.5 H789.7 V614 H775 V636" fill="none" stroke="#ff0000" stroke-width="10.4" stroke-linejoin="round" stroke-linecap="square"/><path d="M775 537 V511.5 H789.7 V614 H775 V636" fill="none" stroke="#ff9966" stroke-width="8.4" stroke-linejoin="round" stroke-linecap="square"/><rect x="777.85" y="505.5" width="9" height="8" fill="#00f0ff"/><rect x="771.5" y="630" width="7" height="9" fill="#a00000"/><rect x="770.5" y="556.5" width="9" height="47" fill="#00b27a" stroke="#ff0000" stroke-width="1"/><rect x="770.5" y="554" width="9" height="8" fill="#00f0ff"/><rect x="771" y="564" width="8" height="5" fill="#a00000"/><circle cx="775.0" cy="563" r="2.2" fill="#ff2020"/><path d="M782.35 510.5 L781.35 548 L776 559 M777 570 V602 L792.7 622 L775 637" fill="none" stroke="#22cc22" stroke-width="1" stroke-dasharray="3 3"/><path d="M804.6 537 V511.5 H819.3000000000001 V614 H804.6 V636" fill="none" stroke="#ff0000" stroke-width="10.4" stroke-linejoin="round" stroke-linecap="square"/><path d="M804.6 537 V511.5 H819.3000000000001 V614 H804.6 V636" fill="none" stroke="#ff9966" stroke-width="8.4" stroke-linejoin="round" stroke-linecap="square"/><rect x="807.45" y="505.5" width="9" height="8" fill="#00f0ff"/><rect x="801.1" y="630" width="7" height="9" fill="#a00000"/><rect x="800.1" y="556.5" width="9" height="47" fill="#00b27a" stroke="#ff0000" stroke-width="1"/><rect x="800.1" y="554" width="9" height="8" fill="#00f0ff"/><rect x="800.6" y="564" width="8" height="5" fill="#a00000"/><circle cx="804.6" cy="563" r="2.2" fill="#ff2020"/><path d="M811.95 510.5 L810.95 548 L805.6 559 M806.6 570 V602 L822.3000000000001 622 L804.6 637" fill="none" stroke="#22cc22" stroke-width="1" stroke-dasharray="3 3"/><path d="M834.2 537 V511.5 H848.9000000000001 V614 H834.2 V636" fill="none" stroke="#ff0000" stroke-width="10.4" stroke-linejoin="round" stroke-linecap="square"/><path d="M834.2 537 V511.5 H848.9000000000001 V614 H834.2 V636" fill="none" stroke="#ff9966" stroke-width="8.4" stroke-linejoin="round" stroke-linecap="square"/><rect x="837.0500000000001" y="505.5" width="9" height="8" fill="#00f0ff"/><rect x="830.7" y="630" width="7" height="9" fill="#a00000"/><rect x="829.7" y="556.5" width="9" height="47" fill="#00b27a" stroke="#ff0000" stroke-width="1"/><rect x="829.7" y="554" width="9" height="8" fill="#00f0ff"/><rect x="830.2" y="564" width="8" height="5" fill="#a00000"/><circle cx="834.2" cy="563" r="2.2" fill="#ff2020"/><path d="M841.5500000000001 510.5 L840.5500000000001 548 L835.2 559 M836.2 570 V602 L851.9000000000001 622 L834.2 637" fill="none" stroke="#22cc22" stroke-width="1" stroke-dasharray="3 3"/><path d="M863.8 537 V511.5 H878.5 V614 H863.8 V636" fill="none" stroke="#ff0000" stroke-width="10.4" stroke-linejoin="round" stroke-linecap="square"/><path d="M863.8 537 V511.5 H878.5 V614 H863.8 V636" fill="none" stroke="#ff9966" stroke-width="8.4" stroke-linejoin="round" stroke-linecap="square"/><rect x="866.65" y="505.5" width="9" height="8" fill="#00f0ff"/><rect x="860.3" y="630" width="7" height="9" fill="#a00000"/><rect x="859.3" y="556.5" width="9" height="47" fill="#00b27a" stroke="#ff0000" stroke-width="1"/><rect x="859.3" y="554" width="9" height="8" fill="#00f0ff"/><rect x="859.8" y="564" width="8" height="5" fill="#a00000"/><circle cx="863.8" cy="563" r="2.2" fill="#ff2020"/><path d="M871.15 510.5 L870.15 548 L864.8 559 M865.8 570 V602 L881.5 622 L863.8 637" fill="none" stroke="#22cc22" stroke-width="1" stroke-dasharray="3 3"/><path d="M893.4 537 V511.5 H908.1 V614 H893.4 V636" fill="none" stroke="#ff0000" stroke-width="10.4" stroke-linejoin="round" stroke-linecap="square"/><path d="M893.4 537 V511.5 H908.1 V614 H893.4 V636" fill="none" stroke="#ff9966" stroke-width="8.4" stroke-linejoin="round" stroke-linecap="square"/><rect x="896.25" y="505.5" width="9" height="8" fill="#00f0ff"/><rect x="889.9" y="630" width="7" height="9" fill="#a00000"/><rect x="888.9" y="556.5" width="9" height="47" fill="#00b27a" stroke="#ff0000" stroke-width="1"/><rect x="888.9" y="554" width="9" height="8" fill="#00f0ff"/><rect x="889.4" y="564" width="8" height="5" fill="#a00000"/><circle cx="893.4" cy="563" r="2.2" fill="#ff2020"/><path d="M900.75 510.5 L899.75 548 L894.4 559 M895.4 570 V602 L911.1 622 L893.4 637" fill="none" stroke="#22cc22" stroke-width="1" stroke-dasharray="3 3"/><path d="M923 537 V511.5 H937.7 V614 H923 V636" fill="none" stroke="#ff0000" stroke-width="10.4" stroke-linejoin="round" stroke-linecap="square"/><path d="M923 537 V511.5 H937.7 V614 H923 V636" fill="none" stroke="#ff9966" stroke-width="8.4" stroke-linejoin="round" stroke-linecap="square"/><rect x="925.85" y="505.5" width="9" height="8" fill="#00f0ff"/><rect x="919.5" y="630" width="7" height="9" fill="#a00000"/><rect x="918.5" y="556.5" width="9" height="47" fill="#00b27a" stroke="#ff0000" stroke-width="1"/><rect x="918.5" y="554" width="9" height="8" fill="#00f0ff"/><rect x="919" y="564" width="8" height="5" fill="#a00000"/><circle cx="923.0" cy="563" r="2.2" fill="#ff2020"/><path d="M930.35 510.5 L929.35 548 L924 559 M925 570 V602 L940.7 622 L923 637" fill="none" stroke="#22cc22" stroke-width="1" stroke-dasharray="3 3"/><path d="M952.7 537 V511.5 H967.4000000000001 V614 H952.7 V636" fill="none" stroke="#ff0000" stroke-width="10.4" stroke-linejoin="round" stroke-linecap="square"/><path d="M952.7 537 V511.5 H967.4000000000001 V614 H952.7 V636" fill="none" stroke="#ff9966" stroke-width="8.4" stroke-linejoin="round" stroke-linecap="square"/><rect x="955.5500000000001" y="505.5" width="9" height="8" fill="#00f0ff"/><rect x="949.2" y="630" width="7" height="9" fill="#a00000"/><rect x="948.2" y="556.5" width="9" height="47" fill="#00b27a" stroke="#ff0000" stroke-width="1"/><rect x="948.2" y="554" width="9" height="8" fill="#00f0ff"/><rect x="948.7" y="564" width="8" height="5" fill="#a00000"/><circle cx="952.7" cy="563" r="2.2" fill="#ff2020"/><path d="M960.0500000000001 510.5 L959.0500000000001 548 L953.7 559 M954.7 570 V602 L970.4000000000001 622 L952.7 637" fill="none" stroke="#22cc22" stroke-width="1" stroke-dasharray="3 3"/><path d="M982 519 V532 L997 537 L1003.5 632 L990 632 L988 613" fill="none" stroke="#ff0000" stroke-width="10.4" stroke-linejoin="round" stroke-linecap="square"/><path d="M982 519 V532 L997 537 L1003.5 632 L990 632 L988 613" fill="none" stroke="#ff9966" stroke-width="8.4" stroke-linejoin="round" stroke-linecap="square"/><rect x="978" y="508" width="8" height="7" fill="#00f0ff"/><rect x="976.5" y="557.5" width="9" height="47" fill="#00b27a" stroke="#ff0000" stroke-width="1"/><rect x="976.5" y="555" width="9" height="8" fill="#00f0ff"/><rect x="977" y="565" width="8" height="5" fill="#a00000"/><circle cx="981.0" cy="564" r="2.2" fill="#ff2020"/><rect x="506.5" y="572.9" width="9" height="38.89999999999998" fill="#4db5ff" stroke="#ff0000" stroke-width="1"/><rect x="506.5" y="570.4" width="9" height="8" fill="#00f0ff"/><rect x="507" y="580.4" width="8" height="5" fill="#a00000"/><circle cx="511.0" cy="579.4" r="2.2" fill="#ff2020"/><rect x="535.5" y="572.9" width="9" height="38.89999999999998" fill="#4db5ff" stroke="#ff0000" stroke-width="1"/><rect x="535.5" y="570.4" width="9" height="8" fill="#00f0ff"/><rect x="536" y="580.4" width="8" height="5" fill="#a00000"/><circle cx="540.0" cy="579.4" r="2.2" fill="#ff2020"/><rect x="593.5" y="572.9" width="9" height="38.89999999999998" fill="#4db5ff" stroke="#ff0000" stroke-width="1"/><rect x="593.5" y="570.4" width="9" height="8" fill="#00f0ff"/><rect x="594" y="580.4" width="8" height="5" fill="#a00000"/><circle cx="598.0" cy="579.4" r="2.2" fill="#ff2020"/><rect x="491.5" y="596.1" width="9" height="39.0" fill="#4db5ff" stroke="#ff0000" stroke-width="1"/><rect x="491.5" y="593.6" width="9" height="8" fill="#00f0ff"/><rect x="492" y="603.6" width="8" height="5" fill="#a00000"/><circle cx="496.0" cy="602.6" r="2.2" fill="#ff2020"/><rect x="520.5" y="596.1" width="9" height="39.0" fill="#4db5ff" stroke="#ff0000" stroke-width="1"/><rect x="520.5" y="593.6" width="9" height="8" fill="#00f0ff"/><rect x="521" y="603.6" width="8" height="5" fill="#a00000"/><circle cx="525.0" cy="602.6" r="2.2" fill="#ff2020"/><rect x="550.2" y="596.1" width="9" height="39.0" fill="#4db5ff" stroke="#ff0000" stroke-width="1"/><rect x="550.2" y="593.6" width="9" height="8" fill="#00f0ff"/><rect x="550.7" y="603.6" width="8" height="5" fill="#a00000"/><circle cx="554.7" cy="602.6" r="2.2" fill="#ff2020"/><rect x="579.2" y="596.1" width="9" height="39.0" fill="#4db5ff" stroke="#ff0000" stroke-width="1"/><rect x="579.2" y="593.6" width="9" height="8" fill="#00f0ff"/><rect x="579.7" y="603.6" width="8" height="5" fill="#a00000"/><circle cx="583.7" cy="602.6" r="2.2" fill="#ff2020"/><rect x="609.0" y="611.5" width="9" height="37.39999999999998" fill="#4db5ff" stroke="#ff0000" stroke-width="1"/><rect x="609.0" y="609" width="9" height="8" fill="#00f0ff"/><rect x="609.5" y="619" width="8" height="5" fill="#a00000"/><circle cx="613.5" cy="618" r="2.2" fill="#ff2020"/><rect x="638.2" y="610.5" width="9" height="38.39999999999998" fill="#4db5ff" stroke="#ff0000" stroke-width="1"/><rect x="638.2" y="608" width="9" height="8" fill="#00f0ff"/><rect x="638.7" y="618" width="8" height="5" fill="#a00000"/><circle cx="642.7" cy="617" r="2.2" fill="#ff2020"/><rect x="668.0" y="618.5" width="9" height="39" fill="#4db5ff" stroke="#ff0000" stroke-width="1"/><rect x="668.0" y="616" width="9" height="8" fill="#00f0ff"/><rect x="668.5" y="626" width="8" height="5" fill="#a00000"/><circle cx="672.5" cy="625" r="2.2" fill="#ff2020"/><rect x="697.1" y="624.5" width="9" height="39" fill="#4db5ff" stroke="#ff0000" stroke-width="1"/><rect x="697.1" y="622" width="9" height="8" fill="#00f0ff"/><rect x="697.6" y="632" width="8" height="5" fill="#a00000"/><circle cx="701.6" cy="631" r="2.2" fill="#ff2020"/><rect x="726.9" y="624.5" width="9" height="39" fill="#4db5ff" stroke="#ff0000" stroke-width="1"/><rect x="726.9" y="622" width="9" height="8" fill="#00f0ff"/><rect x="727.4" y="632" width="8" height="5" fill="#a00000"/><circle cx="731.4" cy="631" r="2.2" fill="#ff2020"/><rect x="755.9" y="624.5" width="9" height="39" fill="#4db5ff" stroke="#ff0000" stroke-width="1"/><rect x="755.9" y="622" width="9" height="8" fill="#00f0ff"/><rect x="756.4" y="632" width="8" height="5" fill="#a00000"/><circle cx="760.4" cy="631" r="2.2" fill="#ff2020"/><rect x="785.1" y="624.5" width="9" height="39" fill="#4db5ff" stroke="#ff0000" stroke-width="1"/><rect x="785.1" y="622" width="9" height="8" fill="#00f0ff"/><rect x="785.6" y="632" width="8" height="5" fill="#a00000"/><circle cx="789.6" cy="631" r="2.2" fill="#ff2020"/><rect x="814.8" y="624.5" width="9" height="39" fill="#4db5ff" stroke="#ff0000" stroke-width="1"/><rect x="814.8" y="622" width="9" height="8" fill="#00f0ff"/><rect x="815.3" y="632" width="8" height="5" fill="#a00000"/><circle cx="819.3" cy="631" r="2.2" fill="#ff2020"/><rect x="844.4" y="624.5" width="9" height="39" fill="#4db5ff" stroke="#ff0000" stroke-width="1"/><rect x="844.4" y="622" width="9" height="8" fill="#00f0ff"/><rect x="844.9" y="632" width="8" height="5" fill="#a00000"/><circle cx="848.9" cy="631" r="2.2" fill="#ff2020"/><rect x="874.1" y="624.5" width="9" height="39" fill="#4db5ff" stroke="#ff0000" stroke-width="1"/><rect x="874.1" y="622" width="9" height="8" fill="#00f0ff"/><rect x="874.6" y="632" width="8" height="5" fill="#a00000"/><circle cx="878.6" cy="631" r="2.2" fill="#ff2020"/><rect x="903.7" y="624.5" width="9" height="39" fill="#4db5ff" stroke="#ff0000" stroke-width="1"/><rect x="903.7" y="622" width="9" height="8" fill="#00f0ff"/><rect x="904.2" y="632" width="8" height="5" fill="#a00000"/><circle cx="908.2" cy="631" r="2.2" fill="#ff2020"/><rect x="933.4" y="624.5" width="9" height="39" fill="#4db5ff" stroke="#ff0000" stroke-width="1"/><rect x="933.4" y="622" width="9" height="8" fill="#00f0ff"/><rect x="933.9" y="632" width="8" height="5" fill="#a00000"/><circle cx="937.9" cy="631" r="2.2" fill="#ff2020"/><rect x="963.0" y="624.5" width="9" height="39" fill="#4db5ff" stroke="#ff0000" stroke-width="1"/><rect x="963.0" y="622" width="9" height="8" fill="#00f0ff"/><rect x="963.5" y="632" width="8" height="5" fill="#a00000"/><circle cx="967.5" cy="631" r="2.2" fill="#ff2020"/><path d="M511 620 V645 H496.3 V744 H511 V721" fill="none" stroke="#ff0000" stroke-width="10.4" stroke-linejoin="round" stroke-linecap="square"/><path d="M511 620 V645 H496.3 V744 H511 V721" fill="none" stroke="#ff9966" stroke-width="8.4" stroke-linejoin="round" stroke-linecap="square"/><rect x="506.5" y="614" width="9" height="8" fill="#00f0ff"/><rect x="507.5" y="622" width="7" height="8" fill="#a00000"/><rect x="506.5" y="663.5" width="9" height="47" fill="#00b27a" stroke="#ff0000" stroke-width="1"/><rect x="506.5" y="661" width="9" height="8" fill="#00f0ff"/><rect x="507" y="671" width="8" height="5" fill="#a00000"/><circle cx="511.0" cy="670" r="2.2" fill="#ff2020"/><path d="M512 625 L500.3 655 L510 666 M513 677 V709 L517 741" fill="none" stroke="#22cc22" stroke-width="1" stroke-dasharray="3 3"/><path d="M540 620 V645 H525.3 V744 H540 V721" fill="none" stroke="#ff0000" stroke-width="10.4" stroke-linejoin="round" stroke-linecap="square"/><path d="M540 620 V645 H525.3 V744 H540 V721" fill="none" stroke="#ff9966" stroke-width="8.4" stroke-linejoin="round" stroke-linecap="square"/><rect x="535.5" y="614" width="9" height="8" fill="#00f0ff"/><rect x="536.5" y="622" width="7" height="8" fill="#a00000"/><rect x="535.5" y="663.5" width="9" height="47" fill="#00b27a" stroke="#ff0000" stroke-width="1"/><rect x="535.5" y="661" width="9" height="8" fill="#00f0ff"/><rect x="536" y="671" width="8" height="5" fill="#a00000"/><circle cx="540.0" cy="670" r="2.2" fill="#ff2020"/><path d="M541 625 L529.3 655 L539 666 M542 677 V709 L546 741" fill="none" stroke="#22cc22" stroke-width="1" stroke-dasharray="3 3"/><path d="M569 620 V645 H554.3 V744 H569 V721" fill="none" stroke="#ff0000" stroke-width="10.4" stroke-linejoin="round" stroke-linecap="square"/><path d="M569 620 V645 H554.3 V744 H569 V721" fill="none" stroke="#ff9966" stroke-width="8.4" stroke-linejoin="round" stroke-linecap="square"/><rect x="564.5" y="614" width="9" height="8" fill="#00f0ff"/><rect x="565.5" y="622" width="7" height="8" fill="#a00000"/><rect x="564.5" y="663.5" width="9" height="47" fill="#00b27a" stroke="#ff0000" stroke-width="1"/><rect x="564.5" y="661" width="9" height="8" fill="#00f0ff"/><rect x="565" y="671" width="8" height="5" fill="#a00000"/><circle cx="569.0" cy="670" r="2.2" fill="#ff2020"/><path d="M570 625 L558.3 655 L568 666 M571 677 V709 L575 741" fill="none" stroke="#22cc22" stroke-width="1" stroke-dasharray="3 3"/><path d="M599 620 V645 H584.3 V744 H599 V721" fill="none" stroke="#ff0000" stroke-width="10.4" stroke-linejoin="round" stroke-linecap="square"/><path d="M599 620 V645 H584.3 V744 H599 V721" fill="none" stroke="#ff9966" stroke-width="8.4" stroke-linejoin="round" stroke-linecap="square"/><rect x="594.5" y="614" width="9" height="8" fill="#00f0ff"/><rect x="595.5" y="622" width="7" height="8" fill="#a00000"/><rect x="594.5" y="663.5" width="9" height="47" fill="#00b27a" stroke="#ff0000" stroke-width="1"/><rect x="594.5" y="661" width="9" height="8" fill="#00f0ff"/><rect x="595" y="671" width="8" height="5" fill="#a00000"/><circle cx="599.0" cy="670" r="2.2" fill="#ff2020"/><path d="M600 625 L588.3 655 L598 666 M601 677 V709 L605 741" fill="none" stroke="#22cc22" stroke-width="1" stroke-dasharray="3 3"/><path d="M628 633 V659.5 H613.3 V758.6 H628 V736.7" fill="none" stroke="#ff0000" stroke-width="10.4" stroke-linejoin="round" stroke-linecap="square"/><path d="M628 633 V659.5 H613.3 V758.6 H628 V736.7" fill="none" stroke="#ff9966" stroke-width="8.4" stroke-linejoin="round" stroke-linecap="square"/><rect x="623.5" y="627" width="9" height="8" fill="#00f0ff"/><rect x="624.5" y="635" width="7" height="8" fill="#a00000"/><rect x="623.5" y="679.0" width="9" height="46.5" fill="#00b27a" stroke="#ff0000" stroke-width="1"/><rect x="623.5" y="676.5" width="9" height="8" fill="#00f0ff"/><rect x="624" y="686.5" width="8" height="5" fill="#a00000"/><circle cx="628.0" cy="685.5" r="2.2" fill="#ff2020"/><path d="M629 638 L617.3 669.5 L627 681.5 M630 692.5 V724 L634 755.6" fill="none" stroke="#22cc22" stroke-width="1" stroke-dasharray="3 3"/><path d="M657 633 V659.5 H642.3 V758.6 H657 V736.7" fill="none" stroke="#ff0000" stroke-width="10.4" stroke-linejoin="round" stroke-linecap="square"/><path d="M657 633 V659.5 H642.3 V758.6 H657 V736.7" fill="none" stroke="#ff9966" stroke-width="8.4" stroke-linejoin="round" stroke-linecap="square"/><rect x="652.5" y="627" width="9" height="8" fill="#00f0ff"/><rect x="653.5" y="635" width="7" height="8" fill="#a00000"/><rect x="652.5" y="679.0" width="9" height="46.5" fill="#00b27a" stroke="#ff0000" stroke-width="1"/><rect x="652.5" y="676.5" width="9" height="8" fill="#00f0ff"/><rect x="653" y="686.5" width="8" height="5" fill="#a00000"/><circle cx="657.0" cy="685.5" r="2.2" fill="#ff2020"/><path d="M658 638 L646.3 669.5 L656 681.5 M659 692.5 V724 L663 755.6" fill="none" stroke="#22cc22" stroke-width="1" stroke-dasharray="3 3"/><path d="M687 642 V668 H672.3 V772 H687 V750" fill="none" stroke="#ff0000" stroke-width="10.4" stroke-linejoin="round" stroke-linecap="square"/><path d="M687 642 V668 H672.3 V772 H687 V750" fill="none" stroke="#ff9966" stroke-width="8.4" stroke-linejoin="round" stroke-linecap="square"/><rect x="682.5" y="636" width="9" height="8" fill="#00f0ff"/><rect x="683.5" y="644" width="7" height="8" fill="#a00000"/><rect x="682.5" y="687.0" width="9" height="52.5" fill="#00b27a" stroke="#ff0000" stroke-width="1"/><rect x="682.5" y="684.5" width="9" height="8" fill="#00f0ff"/><rect x="683" y="694.5" width="8" height="5" fill="#a00000"/><circle cx="687.0" cy="693.5" r="2.2" fill="#ff2020"/><path d="M688 647 L676.3 678 L686 689.5 M689 700.5 V738 L693 769" fill="none" stroke="#22cc22" stroke-width="1" stroke-dasharray="3 3"/><path d="M716 648.6 V674 H701.3 V772 H716 V750" fill="none" stroke="#ff0000" stroke-width="10.4" stroke-linejoin="round" stroke-linecap="square"/><path d="M716 648.6 V674 H701.3 V772 H716 V750" fill="none" stroke="#ff9966" stroke-width="8.4" stroke-linejoin="round" stroke-linecap="square"/><rect x="711.5" y="642.6" width="9" height="8" fill="#00f0ff"/><rect x="712.5" y="650.6" width="7" height="8" fill="#a00000"/><rect x="711.5" y="693.5" width="9" height="46" fill="#00b27a" stroke="#ff0000" stroke-width="1"/><rect x="711.5" y="691" width="9" height="8" fill="#00f0ff"/><rect x="712" y="701" width="8" height="5" fill="#a00000"/><circle cx="716.0" cy="700" r="2.2" fill="#ff2020"/><path d="M717 653.6 L705.3 684 L715 696 M718 707 V738 L722 769" fill="none" stroke="#22cc22" stroke-width="1" stroke-dasharray="3 3"/><path d="M745 648.6 V674 H730.3 V772 H745 V750" fill="none" stroke="#ff0000" stroke-width="10.4" stroke-linejoin="round" stroke-linecap="square"/><path d="M745 648.6 V674 H730.3 V772 H745 V750" fill="none" stroke="#ff9966" stroke-width="8.4" stroke-linejoin="round" stroke-linecap="square"/><rect x="740.5" y="642.6" width="9" height="8" fill="#00f0ff"/><rect x="741.5" y="650.6" width="7" height="8" fill="#a00000"/><rect x="740.5" y="693.5" width="9" height="46" fill="#00b27a" stroke="#ff0000" stroke-width="1"/><rect x="740.5" y="691" width="9" height="8" fill="#00f0ff"/><rect x="741" y="701" width="8" height="5" fill="#a00000"/><circle cx="745.0" cy="700" r="2.2" fill="#ff2020"/><path d="M746 653.6 L734.3 684 L744 696 M747 707 V738 L751 769" fill="none" stroke="#22cc22" stroke-width="1" stroke-dasharray="3 3"/><path d="M775 648.6 V674 H760.3 V772 H775 V750" fill="none" stroke="#ff0000" stroke-width="10.4" stroke-linejoin="round" stroke-linecap="square"/><path d="M775 648.6 V674 H760.3 V772 H775 V750" fill="none" stroke="#ff9966" stroke-width="8.4" stroke-linejoin="round" stroke-linecap="square"/><rect x="770.5" y="642.6" width="9" height="8" fill="#00f0ff"/><rect x="771.5" y="650.6" width="7" height="8" fill="#a00000"/><rect x="770.5" y="693.5" width="9" height="46" fill="#00b27a" stroke="#ff0000" stroke-width="1"/><rect x="770.5" y="691" width="9" height="8" fill="#00f0ff"/><rect x="771" y="701" width="8" height="5" fill="#a00000"/><circle cx="775.0" cy="700" r="2.2" fill="#ff2020"/><path d="M776 653.6 L764.3 684 L774 696 M777 707 V738 L781 769" fill="none" stroke="#22cc22" stroke-width="1" stroke-dasharray="3 3"/><path d="M804.6 648.6 V674 H789.9 V772 H804.6 V750" fill="none" stroke="#ff0000" stroke-width="10.4" stroke-linejoin="round" stroke-linecap="square"/><path d="M804.6 648.6 V674 H789.9 V772 H804.6 V750" fill="none" stroke="#ff9966" stroke-width="8.4" stroke-linejoin="round" stroke-linecap="square"/><rect x="800.1" y="642.6" width="9" height="8" fill="#00f0ff"/><rect x="801.1" y="650.6" width="7" height="8" fill="#a00000"/><rect x="800.1" y="693.5" width="9" height="46" fill="#00b27a" stroke="#ff0000" stroke-width="1"/><rect x="800.1" y="691" width="9" height="8" fill="#00f0ff"/><rect x="800.6" y="701" width="8" height="5" fill="#a00000"/><circle cx="804.6" cy="700" r="2.2" fill="#ff2020"/><path d="M805.6 653.6 L793.9 684 L803.6 696 M806.6 707 V738 L810.6 769" fill="none" stroke="#22cc22" stroke-width="1" stroke-dasharray="3 3"/><path d="M834.2 648.6 V674 H819.5 V772 H834.2 V750" fill="none" stroke="#ff0000" stroke-width="10.4" stroke-linejoin="round" stroke-linecap="square"/><path d="M834.2 648.6 V674 H819.5 V772 H834.2 V750" fill="none" stroke="#ff9966" stroke-width="8.4" stroke-linejoin="round" stroke-linecap="square"/><rect x="829.7" y="642.6" width="9" height="8" fill="#00f0ff"/><rect x="830.7" y="650.6" width="7" height="8" fill="#a00000"/><rect x="829.7" y="693.5" width="9" height="46" fill="#00b27a" stroke="#ff0000" stroke-width="1"/><rect x="829.7" y="691" width="9" height="8" fill="#00f0ff"/><rect x="830.2" y="701" width="8" height="5" fill="#a00000"/><circle cx="834.2" cy="700" r="2.2" fill="#ff2020"/><path d="M835.2 653.6 L823.5 684 L833.2 696 M836.2 707 V738 L840.2 769" fill="none" stroke="#22cc22" stroke-width="1" stroke-dasharray="3 3"/><path d="M863.8 648.6 V674 H849.0999999999999 V772 H863.8 V750" fill="none" stroke="#ff0000" stroke-width="10.4" stroke-linejoin="round" stroke-linecap="square"/><path d="M863.8 648.6 V674 H849.0999999999999 V772 H863.8 V750" fill="none" stroke="#ff9966" stroke-width="8.4" stroke-linejoin="round" stroke-linecap="square"/><rect x="859.3" y="642.6" width="9" height="8" fill="#00f0ff"/><rect x="860.3" y="650.6" width="7" height="8" fill="#a00000"/><rect x="859.3" y="693.5" width="9" height="46" fill="#00b27a" stroke="#ff0000" stroke-width="1"/><rect x="859.3" y="691" width="9" height="8" fill="#00f0ff"/><rect x="859.8" y="701" width="8" height="5" fill="#a00000"/><circle cx="863.8" cy="700" r="2.2" fill="#ff2020"/><path d="M864.8 653.6 L853.0999999999999 684 L862.8 696 M865.8 707 V738 L869.8 769" fill="none" stroke="#22cc22" stroke-width="1" stroke-dasharray="3 3"/><path d="M893.4 648.6 V674 H878.6999999999999 V772 H893.4 V750" fill="none" stroke="#ff0000" stroke-width="10.4" stroke-linejoin="round" stroke-linecap="square"/><path d="M893.4 648.6 V674 H878.6999999999999 V772 H893.4 V750" fill="none" stroke="#ff9966" stroke-width="8.4" stroke-linejoin="round" stroke-linecap="square"/><rect x="888.9" y="642.6" width="9" height="8" fill="#00f0ff"/><rect x="889.9" y="650.6" width="7" height="8" fill="#a00000"/><rect x="888.9" y="693.5" width="9" height="46" fill="#00b27a" stroke="#ff0000" stroke-width="1"/><rect x="888.9" y="691" width="9" height="8" fill="#00f0ff"/><rect x="889.4" y="701" width="8" height="5" fill="#a00000"/><circle cx="893.4" cy="700" r="2.2" fill="#ff2020"/><path d="M894.4 653.6 L882.6999999999999 684 L892.4 696 M895.4 707 V738 L899.4 769" fill="none" stroke="#22cc22" stroke-width="1" stroke-dasharray="3 3"/><path d="M923 648.6 V674 H908.3 V772 H923 V750" fill="none" stroke="#ff0000" stroke-width="10.4" stroke-linejoin="round" stroke-linecap="square"/><path d="M923 648.6 V674 H908.3 V772 H923 V750" fill="none" stroke="#ff9966" stroke-width="8.4" stroke-linejoin="round" stroke-linecap="square"/><rect x="918.5" y="642.6" width="9" height="8" fill="#00f0ff"/><rect x="919.5" y="650.6" width="7" height="8" fill="#a00000"/><rect x="918.5" y="693.5" width="9" height="46" fill="#00b27a" stroke="#ff0000" stroke-width="1"/><rect x="918.5" y="691" width="9" height="8" fill="#00f0ff"/><rect x="919" y="701" width="8" height="5" fill="#a00000"/><circle cx="923.0" cy="700" r="2.2" fill="#ff2020"/><path d="M924 653.6 L912.3 684 L922 696 M925 707 V738 L929 769" fill="none" stroke="#22cc22" stroke-width="1" stroke-dasharray="3 3"/><path d="M952.7 648.6 V674 H938.0 V772 H952.7 V750" fill="none" stroke="#ff0000" stroke-width="10.4" stroke-linejoin="round" stroke-linecap="square"/><path d="M952.7 648.6 V674 H938.0 V772 H952.7 V750" fill="none" stroke="#ff9966" stroke-width="8.4" stroke-linejoin="round" stroke-linecap="square"/><rect x="948.2" y="642.6" width="9" height="8" fill="#00f0ff"/><rect x="949.2" y="650.6" width="7" height="8" fill="#a00000"/><rect x="948.2" y="693.5" width="9" height="46" fill="#00b27a" stroke="#ff0000" stroke-width="1"/><rect x="948.2" y="691" width="9" height="8" fill="#00f0ff"/><rect x="948.7" y="701" width="8" height="5" fill="#a00000"/><circle cx="952.7" cy="700" r="2.2" fill="#ff2020"/><path d="M953.7 653.6 L942.0 684 L951.7 696 M954.7 707 V738 L958.7 769" fill="none" stroke="#22cc22" stroke-width="1" stroke-dasharray="3 3"/><path d="M982.3 648.6 V674 H967.5999999999999 V772 H982.3 V750" fill="none" stroke="#ff0000" stroke-width="10.4" stroke-linejoin="round" stroke-linecap="square"/><path d="M982.3 648.6 V674 H967.5999999999999 V772 H982.3 V750" fill="none" stroke="#ff9966" stroke-width="8.4" stroke-linejoin="round" stroke-linecap="square"/><rect x="977.8" y="642.6" width="9" height="8" fill="#00f0ff"/><rect x="978.8" y="650.6" width="7" height="8" fill="#a00000"/><rect x="977.8" y="693.5" width="9" height="46" fill="#00b27a" stroke="#ff0000" stroke-width="1"/><rect x="977.8" y="691" width="9" height="8" fill="#00f0ff"/><rect x="978.3" y="701" width="8" height="5" fill="#a00000"/><circle cx="982.3" cy="700" r="2.2" fill="#ff2020"/><path d="M983.3 653.6 L971.5999999999999 684 L981.3 696 M984.3 707 V738 L988.3 769" fill="none" stroke="#22cc22" stroke-width="1" stroke-dasharray="3 3"/><path d="M997 653.6 V676 H1010 V772 H996.5 V750" fill="none" stroke="#ff0000" stroke-width="10.4" stroke-linejoin="round" stroke-linecap="square"/><path d="M997 653.6 V676 H1010 V772 H996.5 V750" fill="none" stroke="#ff9966" stroke-width="8.4" stroke-linejoin="round" stroke-linecap="square"/><rect x="992.5" y="648" width="9" height="8" fill="#00f0ff"/><rect x="992.5" y="703.5" width="9" height="36" fill="#4db5ff" stroke="#ff0000" stroke-width="1"/><rect x="992.5" y="701" width="9" height="8" fill="#00f0ff"/><rect x="993" y="711" width="8" height="5" fill="#a00000"/><circle cx="997.0" cy="710" r="2.2" fill="#ff2020"/><circle cx="487.5" cy="781.5" r="5.5" fill="#800080"/></g><line x1="15.5" y1="1" x2="15.5" y2="621" stroke="#00c8d0" stroke-width="1" stroke-dasharray="3 3"/><line x1="41.5" y1="1" x2="41.5" y2="621" stroke="#00c8d0" stroke-width="1" stroke-dasharray="3 3"/><line x1="67.5" y1="1" x2="67.5" y2="621" stroke="#00c8d0" stroke-width="1" stroke-dasharray="3 3"/><line x1="94.5" y1="1" x2="94.5" y2="621" stroke="#00c8d0" stroke-width="1" stroke-dasharray="3 3"/><line x1="120.5" y1="1" x2="120.5" y2="621" stroke="#00c8d0" stroke-width="1" stroke-dasharray="3 3"/><line x1="146.5" y1="1" x2="146.5" y2="621" stroke="#00c8d0" stroke-width="1" stroke-dasharray="3 3"/><line x1="172.5" y1="1" x2="172.5" y2="621" stroke="#00c8d0" stroke-width="1" stroke-dasharray="3 3"/><line x1="198.5" y1="1" x2="198.5" y2="621" stroke="#00c8d0" stroke-width="1" stroke-dasharray="3 3"/><line x1="225.5" y1="1" x2="225.5" y2="621" stroke="#00c8d0" stroke-width="1" stroke-dasharray="3 3"/><line x1="251.5" y1="1" x2="251.5" y2="621" stroke="#00c8d0" stroke-width="1" stroke-dasharray="3 3"/><line x1="277.5" y1="1" x2="277.5" y2="621" stroke="#00c8d0" stroke-width="1" stroke-dasharray="3 3"/><line x1="303.5" y1="1" x2="303.5" y2="621" stroke="#00c8d0" stroke-width="1" stroke-dasharray="3 3"/><line x1="330.5" y1="1" x2="330.5" y2="621" stroke="#00c8d0" stroke-width="1" stroke-dasharray="3 3"/><line x1="356.5" y1="1" x2="356.5" y2="621" stroke="#00c8d0" stroke-width="1" stroke-dasharray="3 3"/><line x1="382.5" y1="1" x2="382.5" y2="621" stroke="#00c8d0" stroke-width="1" stroke-dasharray="3 3"/><line x1="408.5" y1="1" x2="408.5" y2="621" stroke="#00c8d0" stroke-width="1" stroke-dasharray="3 3"/><line x1="434.5" y1="1" x2="434.5" y2="621" stroke="#00c8d0" stroke-width="1" stroke-dasharray="3 3"/><line x1="461.5" y1="1" x2="461.5" y2="621" stroke="#00c8d0" stroke-width="1" stroke-dasharray="3 3"/><line x1="487.5" y1="1" x2="487.5" y2="621" stroke="#00c8d0" stroke-width="1" stroke-dasharray="3 3"/><line x1="513.5" y1="1" x2="513.5" y2="621" stroke="#00c8d0" stroke-width="1" stroke-dasharray="3 3"/><line x1="539.5" y1="1" x2="539.5" y2="621" stroke="#00c8d0" stroke-width="1" stroke-dasharray="3 3"/><line x1="565.5" y1="1" x2="565.5" y2="621" stroke="#00c8d0" stroke-width="1" stroke-dasharray="3 3"/><line x1="592.5" y1="1" x2="592.5" y2="621" stroke="#00c8d0" stroke-width="1" stroke-dasharray="3 3"/><line x1="618.5" y1="1" x2="618.5" y2="621" stroke="#00c8d0" stroke-width="1" stroke-dasharray="3 3"/><line x1="644.5" y1="1" x2="644.5" y2="621" stroke="#00c8d0" stroke-width="1" stroke-dasharray="3 3"/><line x1="670.5" y1="1" x2="670.5" y2="621" stroke="#00c8d0" stroke-width="1" stroke-dasharray="3 3"/><line x1="696.5" y1="1" x2="696.5" y2="621" stroke="#00c8d0" stroke-width="1" stroke-dasharray="3 3"/><line x1="723.5" y1="1" x2="723.5" y2="621" stroke="#00c8d0" stroke-width="1" stroke-dasharray="3 3"/><line x1="749.5" y1="1" x2="749.5" y2="621" stroke="#00c8d0" stroke-width="1" stroke-dasharray="3 3"/><line x1="775.5" y1="1" x2="775.5" y2="621" stroke="#00c8d0" stroke-width="1" stroke-dasharray="3 3"/><line x1="801.5" y1="1" x2="801.5" y2="621" stroke="#00c8d0" stroke-width="1" stroke-dasharray="3 3"/><line x1="828.5" y1="1" x2="828.5" y2="621" stroke="#00c8d0" stroke-width="1" stroke-dasharray="3 3"/><line x1="854.5" y1="1" x2="854.5" y2="621" stroke="#00c8d0" stroke-width="1" stroke-dasharray="3 3"/><line x1="880.5" y1="1" x2="880.5" y2="621" stroke="#00c8d0" stroke-width="1" stroke-dasharray="3 3"/><line x1="906.5" y1="1" x2="906.5" y2="621" stroke="#00c8d0" stroke-width="1" stroke-dasharray="3 3"/><line x1="932.5" y1="1" x2="932.5" y2="621" stroke="#00c8d0" stroke-width="1" stroke-dasharray="3 3"/><line x1="959.5" y1="1" x2="959.5" y2="621" stroke="#00c8d0" stroke-width="1" stroke-dasharray="3 3"/><line x1="985.5" y1="1" x2="985.5" y2="621" stroke="#00c8d0" stroke-width="1" stroke-dasharray="3 3"/><line x1="15" y1="621.5" x2="1008" y2="621.5" stroke="#00c8d0" stroke-width="1" stroke-dasharray="3 3"/></svg>
<div class="a" style="left:1486px;top:155px;width:2px;height:855px;background:#d8d8d8"></div>
<div class="t" style="left:1495px;top:161.13px;font-size:15.2px;line-height:15.2px;color:#2b62b0;">Part Viewer</div>
<svg class="a" style="left:1870px;top:162px;" width="42" height="13" viewBox="0 0 42 13"><path d="M0 4 H9 L4.5 9Z" fill="#3c3c3c"/><path d="M19 0 V8 M22 0 V8 M17.5 0.5 H23.5 M16 8.5 H25 M20.5 9 V12" stroke="#3c3c3c" stroke-width="1.6" fill="none"/><path d="M33 1 L41 9 M41 1 L33 9" stroke="#3c3c3c" stroke-width="1.8"/></svg>
<div class="a" style="left:1489px;top:181px;width:430px;height:226px;background:#fff;border-left:1px solid #828790;border-top:1px solid #828790;border-bottom:1px solid #828790;box-sizing:border-box"></div>
<div class="a" style="left:1488px;top:407px;width:431px;height:3px;background:#e0e0e0"></div>
<div class="a" style="left:1493px;top:185px;width:216px;height:73px;background:#fff;border:1px solid #b4b4b4;box-sizing:border-box"></div>
<div class="a" style="left:1564px;top:185px;width:1px;height:73px;background:#b4b4b4"></div>
<div class="a" style="left:1636px;top:185px;width:1px;height:73px;background:#b4b4b4"></div>
<div class="a" style="left:1494px;top:186px;width:70px;height:18px;background:#a8f7a0"></div>
<div class="t" style="left:1495.5px;top:188.84px;font-size:12px;line-height:12px;color:#000;font-weight:bold;">0</div>
<div class="a" style="left:1506px;top:189px;width:2px;height:13px;background:#1a1a40"></div>
<div class="t" style="left:1512.3px;top:188.84px;font-size:12px;line-height:12px;color:#158a15;font-weight:bold;transform:scaleX(1.0488);transform-origin:0 0;">58</div>
<svg class="a" style="left:1545px;top:187px;" width="16" height="16" viewBox="0 0 16 16"><path d="M1.5 8.5 L6 13.5 L14.5 2" fill="none" stroke="#4cc24c" stroke-width="3.4"/></svg>
<div class="a" style="left:1565px;top:186px;width:70px;height:18px;background:#a8f7a0"></div>
<div class="t" style="left:1566.5px;top:188.84px;font-size:12px;line-height:12px;color:#000;font-weight:bold;">0</div>
<div class="a" style="left:1577px;top:189px;width:2px;height:13px;background:#1a1a40"></div>
<div class="t" style="left:1583.3px;top:188.84px;font-size:12px;line-height:12px;color:#158a15;font-weight:bold;transform:scaleX(1.0488);transform-origin:0 0;">52</div>
<svg class="a" style="left:1616px;top:187px;" width="16" height="16" viewBox="0 0 16 16"><path d="M1.5 8.5 L6 13.5 L14.5 2" fill="none" stroke="#4cc24c" stroke-width="3.4"/></svg>
<div class="a" style="left:1637px;top:186px;width:71px;height:18px;background:#a8f7a0"></div>
<div class="t" style="left:1638.5px;top:188.84px;font-size:12px;line-height:12px;color:#000;font-weight:bold;">0</div>
<div class="a" style="left:1649px;top:189px;width:2px;height:13px;background:#1a1a40"></div>
<div class="t" style="left:1655.3px;top:188.84px;font-size:12px;line-height:12px;color:#158a15;font-weight:bold;transform:scaleX(1.0488);transform-origin:0 0;">53</div>
<svg class="a" style="left:1688px;top:187px;" width="16" height="16" viewBox="0 0 16 16"><path d="M1.5 8.5 L6 13.5 L14.5 2" fill="none" stroke="#4cc24c" stroke-width="3.4"/></svg>
<svg class="a" style="left:1499px;top:224px;" width="62" height="15" viewBox="0 0 62 15"><path d="M1 9.5 H10 C11 9.5 12 9 12 7 V5 C12 3 13 2 15 2 H56 C59 2 60 4 60 6.5 C60 9 59 11 56 11 H45 V8 H55 C56 8 56 7.6 56 6.5 C56 5.5 56 5.2 55 5.2 H16 C15.5 5.2 15 5.6 15 6.5 V9 C15 11.5 14 12.5 12 12.5 H1Z" fill="#ff9966" stroke="#000" stroke-width="1"/><rect x="1" y="9.5" width="5" height="3" fill="#000"/></svg>
<svg class="a" style="left:1595px;top:207px;" width="12" height="48" viewBox="0 0 12 48"><rect x="1" y="0.5" width="10" height="45" rx="1" fill="#00b27a" stroke="#000" stroke-width="1"/><rect x="2" y="27" width="4" height="9" fill="#000"/><circle cx="6" cy="40" r="2" fill="#fff" stroke="#000" stroke-width="0.8"/></svg>
<svg class="a" style="left:1666px;top:207px;" width="15" height="48" viewBox="0 0 15 48"><rect x="1" y="0.5" width="12" height="45" rx="2" fill="#4db5ff" stroke="#000" stroke-width="1"/><rect x="3" y="24" width="4" height="10" fill="#000"/><ellipse cx="7" cy="40" rx="2.5" ry="2" fill="#fff" stroke="#000" stroke-width="0.8"/></svg>
<div class="t" style="left:1495px;top:416.71px;font-size:15.7px;line-height:15.7px;color:#2b62b0;">Nesting Viewer</div>
<svg class="a" style="left:1870px;top:418px;" width="42" height="13" viewBox="0 0 42 13"><path d="M0 4 H9 L4.5 9Z" fill="#3c3c3c"/><path d="M19 0 V8 M22 0 V8 M17.5 0.5 H23.5 M16 8.5 H25 M20.5 9 V12" stroke="#3c3c3c" stroke-width="1.6" fill="none"/><path d="M33 1 L41 9 M41 1 L33 9" stroke="#3c3c3c" stroke-width="1.8"/></svg>
<div class="a" style="left:1489px;top:437px;width:430px;height:573px;background:#fff;border-left:2px solid #6a6a6a;border-top:2px solid #6a6a6a;border-bottom:1px solid #d8d8d8;box-sizing:border-box"></div>
<div class="a" style="left:1491px;top:439px;width:428px;height:21px;background:#e3ebf8"></div>
<div class="t" style="left:1494px;top:444.30px;font-size:15px;line-height:15px;color:#000;font-weight:bold;transform:scaleX(1.0022);transform-origin:0 0;">Lantek Laser-304L-1.5000</div>
<div class="a" style="left:1491px;top:460px;width:401px;height:200px;border:3px solid #ff00ff;box-sizing:border-box;background:#f0f0f0"></div>
<div class="a" style="left:1494px;top:463px;width:197px;height:194px;background:#000"></div>
<div class="a" style="left:1495px;top:513px;width:193px;height:97px;border:1px solid #b8b8b8;box-sizing:border-box"></div>
<div class="a" style="left:1496px;top:514px;width:102px;height:95px;background:#a04818"></div>
<svg class="a" style="left:1494px;top:463px;overflow:hidden" width="197" height="194" viewBox="0 0 197 194"><g transform="translate(-95.00,-7.20) scale(0.197)"><path d="M518.5 300 H495.5 V314 H594.7 V300 H618" fill="none" stroke="#000000" stroke-width="12.5" stroke-linejoin="round" stroke-linecap="square"/><path d="M518.5 300 H495.5 V314 H594.7 V300 H618" fill="none" stroke="#ff8a48" stroke-width="8.4" stroke-linejoin="round" stroke-linecap="square"/><rect x="529.1" y="295.8" width="42.60000000000002" height="9" fill="#ff8a48" stroke="#000000" stroke-width="1"/><rect x="558.2" y="297.3" width="4" height="6" fill="#ff8a48"/><circle cx="566.2" cy="300.3" r="2.6" fill="#ff2020" stroke="#fff" stroke-width="0.6"/><rect x="627.3" y="295.0" width="36.80000000000007" height="9" fill="#ff8a48" stroke="#000000" stroke-width="1"/><rect x="650.6" y="296.5" width="4" height="6" fill="#ff8a48"/><circle cx="658.6" cy="299.5" r="2.6" fill="#ff2020" stroke="#fff" stroke-width="0.6"/><path d="M518.8 773 H495.3 V758.5 H594.5 V773 H617.6" fill="none" stroke="#000000" stroke-width="12.5" stroke-linejoin="round" stroke-linecap="square"/><path d="M518.8 773 H495.3 V758.5 H594.5 V773 H617.6" fill="none" stroke="#ff8a48" stroke-width="8.4" stroke-linejoin="round" stroke-linecap="square"/><rect x="529.1" y="769.0" width="43.10000000000002" height="9" fill="#ff8a48" stroke="#000000" stroke-width="1"/><rect x="558.7" y="770.5" width="4" height="6" fill="#ff8a48"/><circle cx="566.7" cy="773.5" r="2.6" fill="#ff2020" stroke="#fff" stroke-width="0.6"/><rect x="627.9" y="769.0" width="35.89999999999998" height="9" fill="#ff8a48" stroke="#000000" stroke-width="1"/><rect x="650.3" y="770.5" width="4" height="6" fill="#ff8a48"/><circle cx="658.3" cy="773.5" r="2.6" fill="#ff2020" stroke="#fff" stroke-width="0.6"/><path d="M496 352 V329.3 H510.7 V429 H496 V444" fill="none" stroke="#000000" stroke-width="12.5" stroke-linejoin="round" stroke-linecap="square"/><path d="M496 352 V329.3 H510.7 V429 H496 V444" fill="none" stroke="#ff8a48" stroke-width="8.4" stroke-linejoin="round" stroke-linecap="square"/><rect x="498.85" y="323.3" width="9" height="8" fill="#ffd8c0"/><rect x="492.5" y="438" width="7" height="9" fill="#ff8a48"/><rect x="491.5" y="375.5" width="9" height="42" fill="#ff8a48" stroke="#000000" stroke-width="1"/><rect x="491.5" y="373" width="9" height="8" fill="#ffd8c0"/><rect x="492" y="383" width="8" height="5" fill="#ff8a48"/><circle cx="496.0" cy="382" r="2.2" fill="#ff2020"/><path d="M503.35 328.3 L502.35 363 L497 378 M498 389 V416 L513.7 437 L496 445" fill="none" stroke="none" stroke-width="1" stroke-dasharray="3 3"/><path d="M524.6 352 V329.3 H539.3000000000001 V430 H524.6 V450.6" fill="none" stroke="#000000" stroke-width="12.5" stroke-linejoin="round" stroke-linecap="square"/><path d="M524.6 352 V329.3 H539.3000000000001 V430 H524.6 V450.6" fill="none" stroke="#ff8a48" stroke-width="8.4" stroke-linejoin="round" stroke-linecap="square"/><rect x="527.45" y="323.3" width="9" height="8" fill="#ffd8c0"/><rect x="521.1" y="444.6" width="7" height="9" fill="#ff8a48"/><rect x="520.1" y="375.5" width="9" height="42" fill="#ff8a48" stroke="#000000" stroke-width="1"/><rect x="520.1" y="373" width="9" height="8" fill="#ffd8c0"/><rect x="520.6" y="383" width="8" height="5" fill="#ff8a48"/><circle cx="524.6" cy="382" r="2.2" fill="#ff2020"/><path d="M531.95 328.3 L530.95 363 L525.6 378 M526.6 389 V416 L542.3000000000001 438 L524.6 451.6" fill="none" stroke="none" stroke-width="1" stroke-dasharray="3 3"/><path d="M554 357 V334.4 H568.7 V436 H554 V455.7" fill="none" stroke="#000000" stroke-width="12.5" stroke-linejoin="round" stroke-linecap="square"/><path d="M554 357 V334.4 H568.7 V436 H554 V455.7" fill="none" stroke="#ff8a48" stroke-width="8.4" stroke-linejoin="round" stroke-linecap="square"/><rect x="556.85" y="328.4" width="9" height="8" fill="#ffd8c0"/><rect x="550.5" y="449.7" width="7" height="9" fill="#ff8a48"/><rect x="549.5" y="380.1" width="9" height="41.89999999999998" fill="#ff8a48" stroke="#000000" stroke-width="1"/><rect x="549.5" y="377.6" width="9" height="8" fill="#ffd8c0"/><rect x="550" y="387.6" width="8" height="5" fill="#ff8a48"/><circle cx="554.0" cy="386.6" r="2.2" fill="#ff2020"/><path d="M561.35 333.4 L560.35 368 L555 382.6 M556 393.6 V420.5 L571.7 444 L554 456.7" fill="none" stroke="none" stroke-width="1" stroke-dasharray="3 3"/><path d="M583 352 V330 H597.7 V431 H583 V451" fill="none" stroke="#000000" stroke-width="12.5" stroke-linejoin="round" stroke-linecap="square"/><path d="M583 352 V330 H597.7 V431 H583 V451" fill="none" stroke="#ff8a48" stroke-width="8.4" stroke-linejoin="round" stroke-linecap="square"/><rect x="585.85" y="324" width="9" height="8" fill="#ffd8c0"/><rect x="579.5" y="445" width="7" height="9" fill="#ff8a48"/><rect x="578.5" y="375.5" width="9" height="43" fill="#ff8a48" stroke="#000000" stroke-width="1"/><rect x="578.5" y="373" width="9" height="8" fill="#ffd8c0"/><rect x="579" y="383" width="8" height="5" fill="#ff8a48"/><circle cx="583.0" cy="382" r="2.2" fill="#ff2020"/><path d="M590.35 329 L589.35 363 L584 378 M585 389 V417 L600.7 439 L583 452" fill="none" stroke="none" stroke-width="1" stroke-dasharray="3 3"/><path d="M628 341 V319 H613.5 V416 H628 V441" fill="none" stroke="#000000" stroke-width="12.5" stroke-linejoin="round" stroke-linecap="square"/><path d="M628 341 V319 H613.5 V416 H628 V441" fill="none" stroke="#ff8a48" stroke-width="8.4" stroke-linejoin="round" stroke-linecap="square"/><rect x="616" y="313" width="9" height="8" fill="#ffd8c0"/><path d="M628 379 V355.5 H642.7 V455 H628 V478" fill="none" stroke="#000000" stroke-width="12.5" stroke-linejoin="round" stroke-linecap="square"/><path d="M628 379 V355.5 H642.7 V455 H628 V478" fill="none" stroke="#ff8a48" stroke-width="8.4" stroke-linejoin="round" stroke-linecap="square"/><rect x="630" y="349" width="9" height="8" fill="#ffd8c0"/><path d="M657 336.8 V313.3 H671.7 V412 H657 V435" fill="none" stroke="#000000" stroke-width="12.5" stroke-linejoin="round" stroke-linecap="square"/><path d="M657 336.8 V313.3 H671.7 V412 H657 V435" fill="none" stroke="#ff8a48" stroke-width="8.4" stroke-linejoin="round" stroke-linecap="square"/><rect x="659.85" y="307.3" width="9" height="8" fill="#ffd8c0"/><rect x="653.5" y="429" width="7" height="9" fill="#ff8a48"/><rect x="652.5" y="356.1" width="9" height="46.89999999999998" fill="#ff8a48" stroke="#000000" stroke-width="1"/><rect x="652.5" y="353.6" width="9" height="8" fill="#ffd8c0"/><rect x="653" y="363.6" width="8" height="5" fill="#ff8a48"/><circle cx="657.0" cy="362.6" r="2.2" fill="#ff2020"/><path d="M664.35 312.3 L663.35 347.8 L658 358.6 M659 369.6 V401.5 L674.7 420 L657 436" fill="none" stroke="none" stroke-width="1" stroke-dasharray="3 3"/><path d="M687 321.5 V299.5 H701.7 V398.5 H687 V421" fill="none" stroke="#000000" stroke-width="12.5" stroke-linejoin="round" stroke-linecap="square"/><path d="M687 321.5 V299.5 H701.7 V398.5 H687 V421" fill="none" stroke="#ff8a48" stroke-width="8.4" stroke-linejoin="round" stroke-linecap="square"/><rect x="683" y="318.5" width="8" height="8" fill="#ffd8c0"/><rect x="683.5" y="415" width="7" height="9" fill="#ff8a48"/><rect x="682.5" y="345.2" width="9" height="42.60000000000002" fill="#ff8a48" stroke="#000000" stroke-width="1"/><rect x="682.5" y="342.7" width="9" height="8" fill="#ffd8c0"/><rect x="683" y="352.7" width="8" height="5" fill="#ff8a48"/><circle cx="687.0" cy="351.7" r="2.2" fill="#ff2020"/><path d="M694.35 298.5 L693.35 332.5 L688 347.7 M689 358.7 V386.3 L704.7 406.5 L687 422" fill="none" stroke="none" stroke-width="1" stroke-dasharray="3 3"/><path d="M716 321.5 V299.5 H730.7 V398.5 H716 V421" fill="none" stroke="#000000" stroke-width="12.5" stroke-linejoin="round" stroke-linecap="square"/><path d="M716 321.5 V299.5 H730.7 V398.5 H716 V421" fill="none" stroke="#ff8a48" stroke-width="8.4" stroke-linejoin="round" stroke-linecap="square"/><rect x="712" y="318.5" width="8" height="8" fill="#ffd8c0"/><rect x="712.5" y="415" width="7" height="9" fill="#ff8a48"/><rect x="711.5" y="345.2" width="9" height="42.60000000000002" fill="#ff8a48" stroke="#000000" stroke-width="1"/><rect x="711.5" y="342.7" width="9" height="8" fill="#ffd8c0"/><rect x="712" y="352.7" width="8" height="5" fill="#ff8a48"/><circle cx="716.0" cy="351.7" r="2.2" fill="#ff2020"/><path d="M723.35 298.5 L722.35 332.5 L717 347.7 M718 358.7 V386.3 L733.7 406.5 L716 422" fill="none" stroke="none" stroke-width="1" stroke-dasharray="3 3"/><path d="M745 321.5 V299.5 H759.7 V398.5 H745 V421" fill="none" stroke="#000000" stroke-width="12.5" stroke-linejoin="round" stroke-linecap="square"/><path d="M745 321.5 V299.5 H759.7 V398.5 H745 V421" fill="none" stroke="#ff8a48" stroke-width="8.4" stroke-linejoin="round" stroke-linecap="square"/><rect x="741" y="318.5" width="8" height="8" fill="#ffd8c0"/><rect x="741.5" y="415" width="7" height="9" fill="#ff8a48"/><rect x="740.5" y="345.2" width="9" height="42.60000000000002" fill="#ff8a48" stroke="#000000" stroke-width="1"/><rect x="740.5" y="342.7" width="9" height="8" fill="#ffd8c0"/><rect x="741" y="352.7" width="8" height="5" fill="#ff8a48"/><circle cx="745.0" cy="351.7" r="2.2" fill="#ff2020"/><path d="M752.35 298.5 L751.35 332.5 L746 347.7 M747 358.7 V386.3 L762.7 406.5 L745 422" fill="none" stroke="none" stroke-width="1" stroke-dasharray="3 3"/><path d="M775 320.5 V300 H789.7 V397 H775 V421" fill="none" stroke="#000000" stroke-width="12.5" stroke-linejoin="round" stroke-linecap="square"/><path d="M775 320.5 V300 H789.7 V397 H775 V421" fill="none" stroke="#ff8a48" stroke-width="8.4" stroke-linejoin="round" stroke-linecap="square"/><rect x="771" y="317.5" width="8" height="8" fill="#ffd8c0"/><rect x="771.5" y="415" width="7" height="9" fill="#ff8a48"/><rect x="770.5" y="340.5" width="9" height="47.5" fill="#ff8a48" stroke="#000000" stroke-width="1"/><rect x="770.5" y="338" width="9" height="8" fill="#ffd8c0"/><rect x="771" y="348" width="8" height="5" fill="#ff8a48"/><circle cx="775.0" cy="347" r="2.2" fill="#ff2020"/><path d="M782.35 299 L781.35 331.5 L776 343 M777 354 V386.5 L792.7 405 L775 422" fill="none" stroke="none" stroke-width="1" stroke-dasharray="3 3"/><path d="M805 329 V304 H819.7 V403 H805 V428" fill="none" stroke="#000000" stroke-width="12.5" stroke-linejoin="round" stroke-linecap="square"/><path d="M805 329 V304 H819.7 V403 H805 V428" fill="none" stroke="#ff8a48" stroke-width="8.4" stroke-linejoin="round" stroke-linecap="square"/><rect x="807.85" y="298" width="9" height="8" fill="#ffd8c0"/><rect x="801.5" y="422" width="7" height="9" fill="#ff8a48"/><rect x="800.5" y="349.0" width="9" height="45.0" fill="#ff8a48" stroke="#000000" stroke-width="1"/><rect x="800.5" y="346.5" width="9" height="8" fill="#ffd8c0"/><rect x="801" y="356.5" width="8" height="5" fill="#ff8a48"/><circle cx="805.0" cy="355.5" r="2.2" fill="#ff2020"/><path d="M812.35 303 L811.35 340 L806 351.5 M807 362.5 V392.5 L822.7 411 L805 429" fill="none" stroke="none" stroke-width="1" stroke-dasharray="3 3"/><path d="M834 329 V304 H848.7 V403 H834 V428" fill="none" stroke="#000000" stroke-width="12.5" stroke-linejoin="round" stroke-linecap="square"/><path d="M834 329 V304 H848.7 V403 H834 V428" fill="none" stroke="#ff8a48" stroke-width="8.4" stroke-linejoin="round" stroke-linecap="square"/><rect x="836.85" y="298" width="9" height="8" fill="#ffd8c0"/><rect x="830.5" y="422" width="7" height="9" fill="#ff8a48"/><rect x="829.5" y="349.0" width="9" height="45.0" fill="#ff8a48" stroke="#000000" stroke-width="1"/><rect x="829.5" y="346.5" width="9" height="8" fill="#ffd8c0"/><rect x="830" y="356.5" width="8" height="5" fill="#ff8a48"/><circle cx="834.0" cy="355.5" r="2.2" fill="#ff2020"/><path d="M841.35 303 L840.35 340 L835 351.5 M836 362.5 V392.5 L851.7 411 L834 429" fill="none" stroke="none" stroke-width="1" stroke-dasharray="3 3"/><path d="M863 329 V304 H877.7 V403 H863 V428" fill="none" stroke="#000000" stroke-width="12.5" stroke-linejoin="round" stroke-linecap="square"/><path d="M863 329 V304 H877.7 V403 H863 V428" fill="none" stroke="#ff8a48" stroke-width="8.4" stroke-linejoin="round" stroke-linecap="square"/><rect x="865.85" y="298" width="9" height="8" fill="#ffd8c0"/><rect x="859.5" y="422" width="7" height="9" fill="#ff8a48"/><rect x="858.5" y="349.0" width="9" height="45.0" fill="#ff8a48" stroke="#000000" stroke-width="1"/><rect x="858.5" y="346.5" width="9" height="8" fill="#ffd8c0"/><rect x="859" y="356.5" width="8" height="5" fill="#ff8a48"/><circle cx="863.0" cy="355.5" r="2.2" fill="#ff2020"/><path d="M870.35 303 L869.35 340 L864 351.5 M865 362.5 V392.5 L880.7 411 L863 429" fill="none" stroke="none" stroke-width="1" stroke-dasharray="3 3"/><path d="M892 329 V304 H906.7 V403 H892 V428" fill="none" stroke="#000000" stroke-width="12.5" stroke-linejoin="round" stroke-linecap="square"/><path d="M892 329 V304 H906.7 V403 H892 V428" fill="none" stroke="#ff8a48" stroke-width="8.4" stroke-linejoin="round" stroke-linecap="square"/><rect x="894.85" y="298" width="9" height="8" fill="#ffd8c0"/><rect x="888.5" y="422" width="7" height="9" fill="#ff8a48"/><rect x="887.5" y="349.0" width="9" height="45.0" fill="#ff8a48" stroke="#000000" stroke-width="1"/><rect x="887.5" y="346.5" width="9" height="8" fill="#ffd8c0"/><rect x="888" y="356.5" width="8" height="5" fill="#ff8a48"/><circle cx="892.0" cy="355.5" r="2.2" fill="#ff2020"/><path d="M899.35 303 L898.35 340 L893 351.5 M894 362.5 V392.5 L909.7 411 L892 429" fill="none" stroke="none" stroke-width="1" stroke-dasharray="3 3"/><path d="M922 358 V335 H936.7 V433.5 H922 V457" fill="none" stroke="#000000" stroke-width="12.5" stroke-linejoin="round" stroke-linecap="square"/><path d="M922 358 V335 H936.7 V433.5 H922 V457" fill="none" stroke="#ff8a48" stroke-width="8.4" stroke-linejoin="round" stroke-linecap="square"/><rect x="924.85" y="329" width="9" height="8" fill="#ffd8c0"/><rect x="918.5" y="451" width="7" height="9" fill="#ff8a48"/><rect x="917.5" y="378.1" width="9" height="46.39999999999998" fill="#ff8a48" stroke="#000000" stroke-width="1"/><rect x="917.5" y="375.6" width="9" height="8" fill="#ffd8c0"/><rect x="918" y="385.6" width="8" height="5" fill="#ff8a48"/><circle cx="922.0" cy="384.6" r="2.2" fill="#ff2020"/><path d="M929.35 334 L928.35 369 L923 380.6 M924 391.6 V423 L939.7 441.5 L922 458" fill="none" stroke="none" stroke-width="1" stroke-dasharray="3 3"/><path d="M951 331 V307.5 H965.7 V409 H951 V431" fill="none" stroke="#000000" stroke-width="12.5" stroke-linejoin="round" stroke-linecap="square"/><path d="M951 331 V307.5 H965.7 V409 H951 V431" fill="none" stroke="#ff8a48" stroke-width="8.4" stroke-linejoin="round" stroke-linecap="square"/><rect x="953.85" y="301.5" width="9" height="8" fill="#ffd8c0"/><rect x="947.5" y="425" width="7" height="9" fill="#ff8a48"/><rect x="946.5" y="352.5" width="9" height="46" fill="#ff8a48" stroke="#000000" stroke-width="1"/><rect x="946.5" y="350" width="9" height="8" fill="#ffd8c0"/><rect x="947" y="360" width="8" height="5" fill="#ff8a48"/><circle cx="951.0" cy="359" r="2.2" fill="#ff2020"/><path d="M958.35 306.5 L957.35 342 L952 355 M953 366 V397 L968.7 417 L951 432" fill="none" stroke="none" stroke-width="1" stroke-dasharray="3 3"/><path d="M980 329 V304 H994.7 V404 H980 V428" fill="none" stroke="#000000" stroke-width="12.5" stroke-linejoin="round" stroke-linecap="square"/><path d="M980 329 V304 H994.7 V404 H980 V428" fill="none" stroke="#ff8a48" stroke-width="8.4" stroke-linejoin="round" stroke-linecap="square"/><rect x="982.85" y="298" width="9" height="8" fill="#ffd8c0"/><rect x="976.5" y="422" width="7" height="9" fill="#ff8a48"/><rect x="975.5" y="347.5" width="9" height="45" fill="#ff8a48" stroke="#000000" stroke-width="1"/><rect x="975.5" y="345" width="9" height="8" fill="#ffd8c0"/><rect x="976" y="355" width="8" height="5" fill="#ff8a48"/><circle cx="980.0" cy="354" r="2.2" fill="#ff2020"/><path d="M987.35 303 L986.35 340 L981 350 M982 361 V391 L997.7 412 L980 429" fill="none" stroke="none" stroke-width="1" stroke-dasharray="3 3"/><path d="M1012.5 393.7 V413 H998 V519 H1012.5 V497" fill="none" stroke="#000000" stroke-width="12.5" stroke-linejoin="round" stroke-linecap="square"/><path d="M1012.5 393.7 V413 H998 V519 H1012.5 V497" fill="none" stroke="#ff8a48" stroke-width="8.4" stroke-linejoin="round" stroke-linecap="square"/><rect x="1008" y="388" width="9" height="8" fill="#ffd8c0"/><rect x="1009" y="396" width="7" height="8" fill="#ff8a48"/><path d="M657 450 H681 V436 H779 V450 H756" fill="none" stroke="#000000" stroke-width="12.5" stroke-linejoin="round" stroke-linecap="square"/><path d="M657 450 H681 V436 H779 V450 H756" fill="none" stroke="#ff8a48" stroke-width="8.4" stroke-linejoin="round" stroke-linecap="square"/><rect x="638.2" y="465.5" width="35.299999999999955" height="9" fill="#ff8a48" stroke="#000000" stroke-width="1"/><rect x="660" y="467" width="4" height="6" fill="#ff8a48"/><circle cx="668" cy="470.0" r="2.6" fill="#ff2020" stroke="#fff" stroke-width="0.6"/><rect x="638.2" y="480.8" width="35.299999999999955" height="9" fill="#ff8a48" stroke="#000000" stroke-width="1"/><rect x="660" y="482.3" width="4" height="6" fill="#ff8a48"/><circle cx="668" cy="485.3" r="2.6" fill="#ff2020" stroke="#fff" stroke-width="0.6"/><rect x="789.5" y="437.5" width="36" height="9" fill="#ff8a48" stroke="#000000" stroke-width="1"/><rect x="812" y="439" width="4" height="6" fill="#ff8a48"/><circle cx="820" cy="442.0" r="2.6" fill="#ff2020" stroke="#fff" stroke-width="0.6"/><rect x="831.5" y="437.5" width="34" height="9" fill="#ff8a48" stroke="#000000" stroke-width="1"/><rect x="852" y="439" width="4" height="6" fill="#ff8a48"/><circle cx="860" cy="442.0" r="2.6" fill="#ff2020" stroke="#fff" stroke-width="0.6"/><rect x="788.5" y="451.5" width="35" height="9" fill="#ff8a48" stroke="#000000" stroke-width="1"/><rect x="810" y="453" width="4" height="6" fill="#ff8a48"/><circle cx="818" cy="456.0" r="2.6" fill="#ff2020" stroke="#fff" stroke-width="0.6"/><rect x="826.5" y="494.5" width="36" height="9" fill="#ff8a48" stroke="#000000" stroke-width="1"/><rect x="849" y="496" width="4" height="6" fill="#ff8a48"/><circle cx="857" cy="499.0" r="2.6" fill="#ff2020" stroke="#fff" stroke-width="0.6"/><rect x="874.5" y="479.5" width="35" height="9" fill="#ff8a48" stroke="#000000" stroke-width="1"/><rect x="896" y="481" width="4" height="6" fill="#ff8a48"/><circle cx="904" cy="484.0" r="2.6" fill="#ff2020" stroke="#fff" stroke-width="0.6"/><rect x="869.5" y="494.5" width="35" height="9" fill="#ff8a48" stroke="#000000" stroke-width="1"/><rect x="891" y="496" width="4" height="6" fill="#ff8a48"/><circle cx="899" cy="499.0" r="2.6" fill="#ff2020" stroke="#fff" stroke-width="0.6"/><rect x="946.5" y="494.5" width="36" height="9" fill="#ff8a48" stroke="#000000" stroke-width="1"/><rect x="969" y="496" width="4" height="6" fill="#ff8a48"/><circle cx="977" cy="499.0" r="2.6" fill="#ff2020" stroke="#fff" stroke-width="0.6"/><g transform="rotate(-14 726 455)"><rect x="707.5" y="449.5" width="37" height="9" fill="#ff8a48" stroke="#000000" stroke-width="1"/><rect x="731" y="451" width="4" height="6" fill="#ff8a48"/><circle cx="739" cy="454.0" r="2.6" fill="#ff2020" stroke="#fff" stroke-width="0.6"/></g><g transform="rotate(-24 951 451)"><rect x="933.5" y="446.5" width="35" height="9" fill="#ff8a48" stroke="#000000" stroke-width="1"/><rect x="955" y="448" width="4" height="6" fill="#ff8a48"/><circle cx="963" cy="451.0" r="2.6" fill="#ff2020" stroke="#fff" stroke-width="0.6"/></g><rect x="680.5" y="457.5" width="9" height="39" fill="#ff8a48" stroke="#000000" stroke-width="1"/><rect x="680.5" y="455" width="9" height="8" fill="#ffd8c0"/><rect x="681" y="465" width="8" height="5" fill="#ff8a48"/><circle cx="685.0" cy="464" r="2.2" fill="#ff2020"/><rect x="694.9" y="459.0" width="9" height="39.0" fill="#ff8a48" stroke="#000000" stroke-width="1"/><rect x="694.9" y="456.5" width="9" height="8" fill="#ffd8c0"/><rect x="695.4" y="466.5" width="8" height="5" fill="#ff8a48"/><circle cx="699.4" cy="465.5" r="2.2" fill="#ff2020"/><rect x="710.2" y="464.1" width="9" height="39.0" fill="#ff8a48" stroke="#000000" stroke-width="1"/><rect x="710.2" y="461.6" width="9" height="8" fill="#ffd8c0"/><rect x="710.7" y="471.6" width="8" height="5" fill="#ff8a48"/><circle cx="714.7" cy="470.6" r="2.2" fill="#ff2020"/><rect x="724.5" y="464.1" width="9" height="39.0" fill="#ff8a48" stroke="#000000" stroke-width="1"/><rect x="724.5" y="461.6" width="9" height="8" fill="#ffd8c0"/><rect x="725" y="471.6" width="8" height="5" fill="#ff8a48"/><circle cx="729.0" cy="470.6" r="2.2" fill="#ff2020"/><rect x="739.2" y="464.1" width="9" height="39.0" fill="#ff8a48" stroke="#000000" stroke-width="1"/><rect x="739.2" y="461.6" width="9" height="8" fill="#ffd8c0"/><rect x="739.7" y="471.6" width="8" height="5" fill="#ff8a48"/><circle cx="743.7" cy="470.6" r="2.2" fill="#ff2020"/><rect x="754.5" y="464.1" width="9" height="39.0" fill="#ff8a48" stroke="#000000" stroke-width="1"/><rect x="754.5" y="461.6" width="9" height="8" fill="#ffd8c0"/><rect x="755" y="471.6" width="8" height="5" fill="#ff8a48"/><circle cx="759.0" cy="470.6" r="2.2" fill="#ff2020"/><rect x="769.0" y="467.5" width="9" height="35" fill="#ff8a48" stroke="#000000" stroke-width="1"/><rect x="769.0" y="465" width="9" height="8" fill="#ffd8c0"/><rect x="769.5" y="475" width="8" height="5" fill="#ff8a48"/><circle cx="773.5" cy="474" r="2.2" fill="#ff2020"/><rect x="783.5" y="467.5" width="9" height="35" fill="#ff8a48" stroke="#000000" stroke-width="1"/><rect x="783.5" y="465" width="9" height="8" fill="#ffd8c0"/><rect x="784" y="475" width="8" height="5" fill="#ff8a48"/><circle cx="788.0" cy="474" r="2.2" fill="#ff2020"/><rect x="797.5" y="467.5" width="9" height="35" fill="#ff8a48" stroke="#000000" stroke-width="1"/><rect x="797.5" y="465" width="9" height="8" fill="#ffd8c0"/><rect x="798" y="475" width="8" height="5" fill="#ff8a48"/><circle cx="802.0" cy="474" r="2.2" fill="#ff2020"/><rect x="812.5" y="467.5" width="9" height="35" fill="#ff8a48" stroke="#000000" stroke-width="1"/><rect x="812.5" y="465" width="9" height="8" fill="#ffd8c0"/><rect x="813" y="475" width="8" height="5" fill="#ff8a48"/><circle cx="817.0" cy="474" r="2.2" fill="#ff2020"/><rect x="828.1" y="453.1" width="9" height="36.39999999999998" fill="#ff8a48" stroke="#000000" stroke-width="1"/><rect x="828.1" y="450.6" width="9" height="8" fill="#ffd8c0"/><rect x="828.6" y="460.6" width="8" height="5" fill="#ff8a48"/><circle cx="832.6" cy="459.6" r="2.2" fill="#ff2020"/><rect x="843.5" y="453.1" width="9" height="36.39999999999998" fill="#ff8a48" stroke="#000000" stroke-width="1"/><rect x="843.5" y="450.6" width="9" height="8" fill="#ffd8c0"/><rect x="844" y="460.6" width="8" height="5" fill="#ff8a48"/><circle cx="848.0" cy="459.6" r="2.2" fill="#ff2020"/><rect x="858.5" y="453.1" width="9" height="36.39999999999998" fill="#ff8a48" stroke="#000000" stroke-width="1"/><rect x="858.5" y="450.6" width="9" height="8" fill="#ffd8c0"/><rect x="859" y="460.6" width="8" height="5" fill="#ff8a48"/><circle cx="863.0" cy="459.6" r="2.2" fill="#ff2020"/><rect x="874.1" y="436.2" width="9" height="39.0" fill="#ff8a48" stroke="#000000" stroke-width="1"/><rect x="874.1" y="433.7" width="9" height="8" fill="#ffd8c0"/><rect x="874.6" y="443.7" width="8" height="5" fill="#ff8a48"/><circle cx="878.6" cy="442.7" r="2.2" fill="#ff2020"/><rect x="888.5" y="436.2" width="9" height="39.0" fill="#ff8a48" stroke="#000000" stroke-width="1"/><rect x="888.5" y="433.7" width="9" height="8" fill="#ffd8c0"/><rect x="889" y="443.7" width="8" height="5" fill="#ff8a48"/><circle cx="893.0" cy="442.7" r="2.2" fill="#ff2020"/><rect x="903.2" y="436.2" width="9" height="39.0" fill="#ff8a48" stroke="#000000" stroke-width="1"/><rect x="903.2" y="433.7" width="9" height="8" fill="#ffd8c0"/><rect x="903.7" y="443.7" width="8" height="5" fill="#ff8a48"/><circle cx="907.7" cy="442.7" r="2.2" fill="#ff2020"/><rect x="918.9" y="465.5" width="9" height="37.5" fill="#ff8a48" stroke="#000000" stroke-width="1"/><rect x="918.9" y="463" width="9" height="8" fill="#ffd8c0"/><rect x="919.4" y="473" width="8" height="5" fill="#ff8a48"/><circle cx="923.4" cy="472" r="2.2" fill="#ff2020"/><rect x="933.5" y="465.5" width="9" height="37.5" fill="#ff8a48" stroke="#000000" stroke-width="1"/><rect x="933.5" y="463" width="9" height="8" fill="#ffd8c0"/><rect x="934" y="473" width="8" height="5" fill="#ff8a48"/><circle cx="938.0" cy="472" r="2.2" fill="#ff2020"/><rect x="971.0" y="450.5" width="9" height="39" fill="#ff8a48" stroke="#000000" stroke-width="1"/><rect x="971.0" y="448" width="9" height="8" fill="#ffd8c0"/><rect x="971.5" y="458" width="8" height="5" fill="#ff8a48"/><circle cx="975.5" cy="457" r="2.2" fill="#ff2020"/><path d="M496 489 V466.4 H510.7 V565 H496 V587.7" fill="none" stroke="#000000" stroke-width="12.5" stroke-linejoin="round" stroke-linecap="square"/><path d="M496 489 V466.4 H510.7 V565 H496 V587.7" fill="none" stroke="#ff8a48" stroke-width="8.4" stroke-linejoin="round" stroke-linecap="square"/><rect x="498.85" y="460.4" width="9" height="8" fill="#ffd8c0"/><rect x="492.5" y="581.7" width="7" height="9" fill="#ff8a48"/><rect x="491.5" y="509.2" width="9" height="45.30000000000001" fill="#ff8a48" stroke="#000000" stroke-width="1"/><rect x="491.5" y="506.7" width="9" height="8" fill="#ffd8c0"/><rect x="492" y="516.7" width="8" height="5" fill="#ff8a48"/><circle cx="496.0" cy="515.7" r="2.2" fill="#ff2020"/><path d="M503.35 465.4 L502.35 500 L497 511.7 M498 522.7 V553 L513.7 573 L496 588.7" fill="none" stroke="none" stroke-width="1" stroke-dasharray="3 3"/><path d="M524.6 489 V466.4 H539.3000000000001 V565 H524.6 V587.7" fill="none" stroke="#000000" stroke-width="12.5" stroke-linejoin="round" stroke-linecap="square"/><path d="M524.6 489 V466.4 H539.3000000000001 V565 H524.6 V587.7" fill="none" stroke="#ff8a48" stroke-width="8.4" stroke-linejoin="round" stroke-linecap="square"/><rect x="527.45" y="460.4" width="9" height="8" fill="#ffd8c0"/><rect x="521.1" y="581.7" width="7" height="9" fill="#ff8a48"/><rect x="520.1" y="509.2" width="9" height="45.30000000000001" fill="#ff8a48" stroke="#000000" stroke-width="1"/><rect x="520.1" y="506.7" width="9" height="8" fill="#ffd8c0"/><rect x="520.6" y="516.7" width="8" height="5" fill="#ff8a48"/><circle cx="524.6" cy="515.7" r="2.2" fill="#ff2020"/><path d="M531.95 465.4 L530.95 500 L525.6 511.7 M526.6 522.7 V553 L542.3000000000001 573 L524.6 588.7" fill="none" stroke="none" stroke-width="1" stroke-dasharray="3 3"/><path d="M569 452 V471 H554.3 V560 H569 V547" fill="none" stroke="#000000" stroke-width="12.5" stroke-linejoin="round" stroke-linecap="square"/><path d="M569 452 V471 H554.3 V560 H569 V547" fill="none" stroke="#ff8a48" stroke-width="8.4" stroke-linejoin="round" stroke-linecap="square"/><rect x="564.5" y="446" width="9" height="8" fill="#ffd8c0"/><rect x="565.5" y="454" width="7" height="8" fill="#ff8a48"/><path d="M569 508 V485.3 H583.7 V584 H569 V606" fill="none" stroke="#000000" stroke-width="12.5" stroke-linejoin="round" stroke-linecap="square"/><path d="M569 508 V485.3 H583.7 V584 H569 V606" fill="none" stroke="#ff8a48" stroke-width="8.4" stroke-linejoin="round" stroke-linecap="square"/><rect x="571.85" y="479.3" width="9" height="8" fill="#ffd8c0"/><rect x="565.5" y="600" width="7" height="9" fill="#ff8a48"/><path d="M598 466.6 V443 H612.7 V537 H598 V565" fill="none" stroke="#000000" stroke-width="12.5" stroke-linejoin="round" stroke-linecap="square"/><path d="M598 466.6 V443 H612.7 V537 H598 V565" fill="none" stroke="#ff8a48" stroke-width="8.4" stroke-linejoin="round" stroke-linecap="square"/><rect x="600.85" y="437" width="9" height="8" fill="#ffd8c0"/><rect x="594.5" y="559" width="7" height="9" fill="#ff8a48"/><rect x="593.5" y="485.9" width="9" height="46.200000000000045" fill="#ff8a48" stroke="#000000" stroke-width="1"/><rect x="593.5" y="483.4" width="9" height="8" fill="#ffd8c0"/><rect x="594" y="493.4" width="8" height="5" fill="#ff8a48"/><circle cx="598.0" cy="492.4" r="2.2" fill="#ff2020"/><path d="M605.35 442 L604.35 477.6 L599 488.4 M600 499.4 V530.6 L615.7 545 L598 566" fill="none" stroke="none" stroke-width="1" stroke-dasharray="3 3"/><path d="M628 522 V497.7 H642.7 V598.5 H628 V620.4" fill="none" stroke="#000000" stroke-width="12.5" stroke-linejoin="round" stroke-linecap="square"/><path d="M628 522 V497.7 H642.7 V598.5 H628 V620.4" fill="none" stroke="#ff8a48" stroke-width="8.4" stroke-linejoin="round" stroke-linecap="square"/><rect x="630.85" y="491.7" width="9" height="8" fill="#ffd8c0"/><rect x="624.5" y="614.4" width="7" height="9" fill="#ff8a48"/><rect x="623.5" y="541.5" width="9" height="47" fill="#ff8a48" stroke="#000000" stroke-width="1"/><rect x="623.5" y="539" width="9" height="8" fill="#ffd8c0"/><rect x="624" y="549" width="8" height="5" fill="#ff8a48"/><circle cx="628.0" cy="548" r="2.2" fill="#ff2020"/><path d="M635.35 496.7 L634.35 533 L629 544 M630 555 V587 L645.7 606.5 L628 621.4" fill="none" stroke="none" stroke-width="1" stroke-dasharray="3 3"/><path d="M657 522 V497.7 H671.7 V598.5 H657 V620.4" fill="none" stroke="#000000" stroke-width="12.5" stroke-linejoin="round" stroke-linecap="square"/><path d="M657 522 V497.7 H671.7 V598.5 H657 V620.4" fill="none" stroke="#ff8a48" stroke-width="8.4" stroke-linejoin="round" stroke-linecap="square"/><rect x="659.85" y="491.7" width="9" height="8" fill="#ffd8c0"/><rect x="653.5" y="614.4" width="7" height="9" fill="#ff8a48"/><rect x="652.5" y="541.5" width="9" height="47" fill="#ff8a48" stroke="#000000" stroke-width="1"/><rect x="652.5" y="539" width="9" height="8" fill="#ffd8c0"/><rect x="653" y="549" width="8" height="5" fill="#ff8a48"/><circle cx="657.0" cy="548" r="2.2" fill="#ff2020"/><path d="M664.35 496.7 L663.35 533 L658 544 M659 555 V587 L674.7 606.5 L657 621.4" fill="none" stroke="none" stroke-width="1" stroke-dasharray="3 3"/><path d="M687 531 V505.7 H701.7 V607 H687 V630" fill="none" stroke="#000000" stroke-width="12.5" stroke-linejoin="round" stroke-linecap="square"/><path d="M687 531 V505.7 H701.7 V607 H687 V630" fill="none" stroke="#ff8a48" stroke-width="8.4" stroke-linejoin="round" stroke-linecap="square"/><rect x="689.85" y="499.7" width="9" height="8" fill="#ffd8c0"/><rect x="683.5" y="624" width="7" height="9" fill="#ff8a48"/><rect x="682.5" y="549.5" width="9" height="48" fill="#ff8a48" stroke="#000000" stroke-width="1"/><rect x="682.5" y="547" width="9" height="8" fill="#ffd8c0"/><rect x="683" y="557" width="8" height="5" fill="#ff8a48"/><circle cx="687.0" cy="556" r="2.2" fill="#ff2020"/><path d="M694.35 504.7 L693.35 542 L688 552 M689 563 V596 L704.7 615 L687 631" fill="none" stroke="none" stroke-width="1" stroke-dasharray="3 3"/><path d="M716 537 V511.5 H730.7 V614 H716 V636" fill="none" stroke="#000000" stroke-width="12.5" stroke-linejoin="round" stroke-linecap="square"/><path d="M716 537 V511.5 H730.7 V614 H716 V636" fill="none" stroke="#ff8a48" stroke-width="8.4" stroke-linejoin="round" stroke-linecap="square"/><rect x="718.85" y="505.5" width="9" height="8" fill="#ffd8c0"/><rect x="712.5" y="630" width="7" height="9" fill="#ff8a48"/><rect x="711.5" y="556.5" width="9" height="47" fill="#ff8a48" stroke="#000000" stroke-width="1"/><rect x="711.5" y="554" width="9" height="8" fill="#ffd8c0"/><rect x="712" y="564" width="8" height="5" fill="#ff8a48"/><circle cx="716.0" cy="563" r="2.2" fill="#ff2020"/><path d="M723.35 510.5 L722.35 548 L717 559 M718 570 V602 L733.7 622 L716 637" fill="none" stroke="none" stroke-width="1" stroke-dasharray="3 3"/><path d="M745 537 V511.5 H759.7 V614 H745 V636" fill="none" stroke="#000000" stroke-width="12.5" stroke-linejoin="round" stroke-linecap="square"/><path d="M745 537 V511.5 H759.7 V614 H745 V636" fill="none" stroke="#ff8a48" stroke-width="8.4" stroke-linejoin="round" stroke-linecap="square"/><rect x="747.85" y="505.5" width="9" height="8" fill="#ffd8c0"/><rect x="741.5" y="630" width="7" height="9" fill="#ff8a48"/><rect x="740.5" y="556.5" width="9" height="47" fill="#ff8a48" stroke="#000000" stroke-width="1"/><rect x="740.5" y="554" width="9" height="8" fill="#ffd8c0"/><rect x="741" y="564" width="8" height="5" fill="#ff8a48"/><circle cx="745.0" cy="563" r="2.2" fill="#ff2020"/><path d="M752.35 510.5 L751.35 548 L746 559 M747 570 V602 L762.7 622 L745 637" fill="none" stroke="none" stroke-width="1" stroke-dasharray="3 3"/><path d="M775 537 V511.5 H789.7 V614 H775 V636" fill="none" stroke="#000000" stroke-width="12.5" stroke-linejoin="round" stroke-linecap="square"/><path d="M775 537 V511.5 H789.7 V614 H775 V636" fill="none" stroke="#ff8a48" stroke-width="8.4" stroke-linejoin="round" stroke-linecap="square"/><rect x="777.85" y="505.5" width="9" height="8" fill="#ffd8c0"/><rect x="771.5" y="630" width="7" height="9" fill="#ff8a48"/><rect x="770.5" y="556.5" width="9" height="47" fill="#ff8a48" stroke="#000000" stroke-width="1"/><rect x="770.5" y="554" width="9" height="8" fill="#ffd8c0"/><rect x="771" y="564" width="8" height="5" fill="#ff8a48"/><circle cx="775.0" cy="563" r="2.2" fill="#ff2020"/><path d="M782.35 510.5 L781.35 548 L776 559 M777 570 V602 L792.7 622 L775 637" fill="none" stroke="none" stroke-width="1" stroke-dasharray="3 3"/><path d="M804.6 537 V511.5 H819.3000000000001 V614 H804.6 V636" fill="none" stroke="#000000" stroke-width="12.5" stroke-linejoin="round" stroke-linecap="square"/><path d="M804.6 537 V511.5 H819.3000000000001 V614 H804.6 V636" fill="none" stroke="#ff8a48" stroke-width="8.4" stroke-linejoin="round" stroke-linecap="square"/><rect x="807.45" y="505.5" width="9" height="8" fill="#ffd8c0"/><rect x="801.1" y="630" width="7" height="9" fill="#ff8a48"/><rect x="800.1" y="556.5" width="9" height="47" fill="#ff8a48" stroke="#000000" stroke-width="1"/><rect x="800.1" y="554" width="9" height="8" fill="#ffd8c0"/><rect x="800.6" y="564" width="8" height="5" fill="#ff8a48"/><circle cx="804.6" cy="563" r="2.2" fill="#ff2020"/><path d="M811.95 510.5 L810.95 548 L805.6 559 M806.6 570 V602 L822.3000000000001 622 L804.6 637" fill="none" stroke="none" stroke-width="1" stroke-dasharray="3 3"/><path d="M834.2 537 V511.5 H848.9000000000001 V614 H834.2 V636" fill="none" stroke="#000000" stroke-width="12.5" stroke-linejoin="round" stroke-linecap="square"/><path d="M834.2 537 V511.5 H848.9000000000001 V614 H834.2 V636" fill="none" stroke="#ff8a48" stroke-width="8.4" stroke-linejoin="round" stroke-linecap="square"/><rect x="837.0500000000001" y="505.5" width="9" height="8" fill="#ffd8c0"/><rect x="830.7" y="630" width="7" height="9" fill="#ff8a48"/><rect x="829.7" y="556.5" width="9" height="47" fill="#ff8a48" stroke="#000000" stroke-width="1"/><rect x="829.7" y="554" width="9" height="8" fill="#ffd8c0"/><rect x="830.2" y="564" width="8" height="5" fill="#ff8a48"/><circle cx="834.2" cy="563" r="2.2" fill="#ff2020"/><path d="M841.5500000000001 510.5 L840.5500000000001 548 L835.2 559 M836.2 570 V602 L851.9000000000001 622 L834.2 637" fill="none" stroke="none" stroke-width="1" stroke-dasharray="3 3"/><path d="M863.8 537 V511.5 H878.5 V614 H863.8 V636" fill="none" stroke="#000000" stroke-width="12.5" stroke-linejoin="round" stroke-linecap="square"/><path d="M863.8 537 V511.5 H878.5 V614 H863.8 V636" fill="none" stroke="#ff8a48" stroke-width="8.4" stroke-linejoin="round" stroke-linecap="square"/><rect x="866.65" y="505.5" width="9" height="8" fill="#ffd8c0"/><rect x="860.3" y="630" width="7" height="9" fill="#ff8a48"/><rect x="859.3" y="556.5" width="9" height="47" fill="#ff8a48" stroke="#000000" stroke-width="1"/><rect x="859.3" y="554" width="9" height="8" fill="#ffd8c0"/><rect x="859.8" y="564" width="8" height="5" fill="#ff8a48"/><circle cx="863.8" cy="563" r="2.2" fill="#ff2020"/><path d="M871.15 510.5 L870.15 548 L864.8 559 M865.8 570 V602 L881.5 622 L863.8 637" fill="none" stroke="none" stroke-width="1" stroke-dasharray="3 3"/><path d="M893.4 537 V511.5 H908.1 V614 H893.4 V636" fill="none" stroke="#000000" stroke-width="12.5" stroke-linejoin="round" stroke-linecap="square"/><path d="M893.4 537 V511.5 H908.1 V614 H893.4 V636" fill="none" stroke="#ff8a48" stroke-width="8.4" stroke-linejoin="round" stroke-linecap="square"/><rect x="896.25" y="505.5" width="9" height="8" fill="#ffd8c0"/><rect x="889.9" y="630" width="7" height="9" fill="#ff8a48"/><rect x="888.9" y="556.5" width="9" height="47" fill="#ff8a48" stroke="#000000" stroke-width="1"/><rect x="888.9" y="554" width="9" height="8" fill="#ffd8c0"/><rect x="889.4" y="564" width="8" height="5" fill="#ff8a48"/><circle cx="893.4" cy="563" r="2.2" fill="#ff2020"/><path d="M900.75 510.5 L899.75 548 L894.4 559 M895.4 570 V602 L911.1 622 L893.4 637" fill="none" stroke="none" stroke-width="1" stroke-dasharray="3 3"/><path d="M923 537 V511.5 H937.7 V614 H923 V636" fill="none" stroke="#000000" stroke-width="12.5" stroke-linejoin="round" stroke-linecap="square"/><path d="M923 537 V511.5 H937.7 V614 H923 V636" fill="none" stroke="#ff8a48" stroke-width="8.4" stroke-linejoin="round" stroke-linecap="square"/><rect x="925.85" y="505.5" width="9" height="8" fill="#ffd8c0"/><rect x="919.5" y="630" width="7" height="9" fill="#ff8a48"/><rect x="918.5" y="556.5" width="9" height="47" fill="#ff8a48" stroke="#000000" stroke-width="1"/><rect x="918.5" y="554" width="9" height="8" fill="#ffd8c0"/><rect x="919" y="564" width="8" height="5" fill="#ff8a48"/><circle cx="923.0" cy="563" r="2.2" fill="#ff2020"/><path d="M930.35 510.5 L929.35 548 L924 559 M925 570 V602 L940.7 622 L923 637" fill="none" stroke="none" stroke-width="1" stroke-dasharray="3 3"/><path d="M952.7 537 V511.5 H967.4000000000001 V614 H952.7 V636" fill="none" stroke="#000000" stroke-width="12.5" stroke-linejoin="round" stroke-linecap="square"/><path d="M952.7 537 V511.5 H967.4000000000001 V614 H952.7 V636" fill="none" stroke="#ff8a48" stroke-width="8.4" stroke-linejoin="round" stroke-linecap="square"/><rect x="955.5500000000001" y="505.5" width="9" height="8" fill="#ffd8c0"/><rect x="949.2" y="630" width="7" height="9" fill="#ff8a48"/><rect x="948.2" y="556.5" width="9" height="47" fill="#ff8a48" stroke="#000000" stroke-width="1"/><rect x="948.2" y="554" width="9" height="8" fill="#ffd8c0"/><rect x="948.7" y="564" width="8" height="5" fill="#ff8a48"/><circle cx="952.7" cy="563" r="2.2" fill="#ff2020"/><path d="M960.0500000000001 510.5 L959.0500000000001 548 L953.7 559 M954.7 570 V602 L970.4000000000001 622 L952.7 637" fill="none" stroke="none" stroke-width="1" stroke-dasharray="3 3"/><path d="M982 519 V532 L997 537 L1003.5 632 L990 632 L988 613" fill="none" stroke="#000000" stroke-width="12.5" stroke-linejoin="round" stroke-linecap="square"/><path d="M982 519 V532 L997 537 L1003.5 632 L990 632 L988 613" fill="none" stroke="#ff8a48" stroke-width="8.4" stroke-linejoin="round" stroke-linecap="square"/><rect x="978" y="508" width="8" height="7" fill="#ffd8c0"/><rect x="976.5" y="557.5" width="9" height="47" fill="#ff8a48" stroke="#000000" stroke-width="1"/><rect x="976.5" y="555" width="9" height="8" fill="#ffd8c0"/><rect x="977" y="565" width="8" height="5" fill="#ff8a48"/><circle cx="981.0" cy="564" r="2.2" fill="#ff2020"/><rect x="506.5" y="572.9" width="9" height="38.89999999999998" fill="#ff8a48" stroke="#000000" stroke-width="1"/><rect x="506.5" y="570.4" width="9" height="8" fill="#ffd8c0"/><rect x="507" y="580.4" width="8" height="5" fill="#ff8a48"/><circle cx="511.0" cy="579.4" r="2.2" fill="#ff2020"/><rect x="535.5" y="572.9" width="9" height="38.89999999999998" fill="#ff8a48" stroke="#000000" stroke-width="1"/><rect x="535.5" y="570.4" width="9" height="8" fill="#ffd8c0"/><rect x="536" y="580.4" width="8" height="5" fill="#ff8a48"/><circle cx="540.0" cy="579.4" r="2.2" fill="#ff2020"/><rect x="593.5" y="572.9" width="9" height="38.89999999999998" fill="#ff8a48" stroke="#000000" stroke-width="1"/><rect x="593.5" y="570.4" width="9" height="8" fill="#ffd8c0"/><rect x="594" y="580.4" width="8" height="5" fill="#ff8a48"/><circle cx="598.0" cy="579.4" r="2.2" fill="#ff2020"/><rect x="491.5" y="596.1" width="9" height="39.0" fill="#ff8a48" stroke="#000000" stroke-width="1"/><rect x="491.5" y="593.6" width="9" height="8" fill="#ffd8c0"/><rect x="492" y="603.6" width="8" height="5" fill="#ff8a48"/><circle cx="496.0" cy="602.6" r="2.2" fill="#ff2020"/><rect x="520.5" y="596.1" width="9" height="39.0" fill="#ff8a48" stroke="#000000" stroke-width="1"/><rect x="520.5" y="593.6" width="9" height="8" fill="#ffd8c0"/><rect x="521" y="603.6" width="8" height="5" fill="#ff8a48"/><circle cx="525.0" cy="602.6" r="2.2" fill="#ff2020"/><rect x="550.2" y="596.1" width="9" height="39.0" fill="#ff8a48" stroke="#000000" stroke-width="1"/><rect x="550.2" y="593.6" width="9" height="8" fill="#ffd8c0"/><rect x="550.7" y="603.6" width="8" height="5" fill="#ff8a48"/><circle cx="554.7" cy="602.6" r="2.2" fill="#ff2020"/><rect x="579.2" y="596.1" width="9" height="39.0" fill="#ff8a48" stroke="#000000" stroke-width="1"/><rect x="579.2" y="593.6" width="9" height="8" fill="#ffd8c0"/><rect x="579.7" y="603.6" width="8" height="5" fill="#ff8a48"/><circle cx="583.7" cy="602.6" r="2.2" fill="#ff2020"/><rect x="609.0" y="611.5" width="9" height="37.39999999999998" fill="#ff8a48" stroke="#000000" stroke-width="1"/><rect x="609.0" y="609" width="9" height="8" fill="#ffd8c0"/><rect x="609.5" y="619" width="8" height="5" fill="#ff8a48"/><circle cx="613.5" cy="618" r="2.2" fill="#ff2020"/><rect x="638.2" y="610.5" width="9" height="38.39999999999998" fill="#ff8a48" stroke="#000000" stroke-width="1"/><rect x="638.2" y="608" width="9" height="8" fill="#ffd8c0"/><rect x="638.7" y="618" width="8" height="5" fill="#ff8a48"/><circle cx="642.7" cy="617" r="2.2" fill="#ff2020"/><rect x="668.0" y="618.5" width="9" height="39" fill="#ff8a48" stroke="#000000" stroke-width="1"/><rect x="668.0" y="616" width="9" height="8" fill="#ffd8c0"/><rect x="668.5" y="626" width="8" height="5" fill="#ff8a48"/><circle cx="672.5" cy="625" r="2.2" fill="#ff2020"/><rect x="697.1" y="624.5" width="9" height="39" fill="#ff8a48" stroke="#000000" stroke-width="1"/><rect x="697.1" y="622" width="9" height="8" fill="#ffd8c0"/><rect x="697.6" y="632" width="8" height="5" fill="#ff8a48"/><circle cx="701.6" cy="631" r="2.2" fill="#ff2020"/><rect x="726.9" y="624.5" width="9" height="39" fill="#ff8a48" stroke="#000000" stroke-width="1"/><rect x="726.9" y="622" width="9" height="8" fill="#ffd8c0"/><rect x="727.4" y="632" width="8" height="5" fill="#ff8a48"/><circle cx="731.4" cy="631" r="2.2" fill="#ff2020"/><rect x="755.9" y="624.5" width="9" height="39" fill="#ff8a48" stroke="#000000" stroke-width="1"/><rect x="755.9" y="622" width="9" height="8" fill="#ffd8c0"/><rect x="756.4" y="632" width="8" height="5" fill="#ff8a48"/><circle cx="760.4" cy="631" r="2.2" fill="#ff2020"/><rect x="785.1" y="624.5" width="9" height="39" fill="#ff8a48" stroke="#000000" stroke-width="1"/><rect x="785.1" y="622" width="9" height="8" fill="#ffd8c0"/><rect x="785.6" y="632" width="8" height="5" fill="#ff8a48"/><circle cx="789.6" cy="631" r="2.2" fill="#ff2020"/><rect x="814.8" y="624.5" width="9" height="39" fill="#ff8a48" stroke="#000000" stroke-width="1"/><rect x="814.8" y="622" width="9" height="8" fill="#ffd8c0"/><rect x="815.3" y="632" width="8" height="5" fill="#ff8a48"/><circle cx="819.3" cy="631" r="2.2" fill="#ff2020"/><rect x="844.4" y="624.5" width="9" height="39" fill="#ff8a48" stroke="#000000" stroke-width="1"/><rect x="844.4" y="622" width="9" height="8" fill="#ffd8c0"/><rect x="844.9" y="632" width="8" height="5" fill="#ff8a48"/><circle cx="848.9" cy="631" r="2.2" fill="#ff2020"/><rect x="874.1" y="624.5" width="9" height="39" fill="#ff8a48" stroke="#000000" stroke-width="1"/><rect x="874.1" y="622" width="9" height="8" fill="#ffd8c0"/><rect x="874.6" y="632" width="8" height="5" fill="#ff8a48"/><circle cx="878.6" cy="631" r="2.2" fill="#ff2020"/><rect x="903.7" y="624.5" width="9" height="39" fill="#ff8a48" stroke="#000000" stroke-width="1"/><rect x="903.7" y="622" width="9" height="8" fill="#ffd8c0"/><rect x="904.2" y="632" width="8" height="5" fill="#ff8a48"/><circle cx="908.2" cy="631" r="2.2" fill="#ff2020"/><rect x="933.4" y="624.5" width="9" height="39" fill="#ff8a48" stroke="#000000" stroke-width="1"/><rect x="933.4" y="622" width="9" height="8" fill="#ffd8c0"/><rect x="933.9" y="632" width="8" height="5" fill="#ff8a48"/><circle cx="937.9" cy="631" r="2.2" fill="#ff2020"/><rect x="963.0" y="624.5" width="9" height="39" fill="#ff8a48" stroke="#000000" stroke-width="1"/><rect x="963.0" y="622" width="9" height="8" fill="#ffd8c0"/><rect x="963.5" y="632" width="8" height="5" fill="#ff8a48"/><circle cx="967.5" cy="631" r="2.2" fill="#ff2020"/><path d="M511 620 V645 H496.3 V744 H511 V721" fill="none" stroke="#000000" stroke-width="12.5" stroke-linejoin="round" stroke-linecap="square"/><path d="M511 620 V645 H496.3 V744 H511 V721" fill="none" stroke="#ff8a48" stroke-width="8.4" stroke-linejoin="round" stroke-linecap="square"/><rect x="506.5" y="614" width="9" height="8" fill="#ffd8c0"/><rect x="507.5" y="622" width="7" height="8" fill="#ff8a48"/><rect x="506.5" y="663.5" width="9" height="47" fill="#ff8a48" stroke="#000000" stroke-width="1"/><rect x="506.5" y="661" width="9" height="8" fill="#ffd8c0"/><rect x="507" y="671" width="8" height="5" fill="#ff8a48"/><circle cx="511.0" cy="670" r="2.2" fill="#ff2020"/><path d="M512 625 L500.3 655 L510 666 M513 677 V709 L517 741" fill="none" stroke="none" stroke-width="1" stroke-dasharray="3 3"/><path d="M540 620 V645 H525.3 V744 H540 V721" fill="none" stroke="#000000" stroke-width="12.5" stroke-linejoin="round" stroke-linecap="square"/><path d="M540 620 V645 H525.3 V744 H540 V721" fill="none" stroke="#ff8a48" stroke-width="8.4" stroke-linejoin="round" stroke-linecap="square"/><rect x="535.5" y="614" width="9" height="8" fill="#ffd8c0"/><rect x="536.5" y="622" width="7" height="8" fill="#ff8a48"/><rect x="535.5" y="663.5" width="9" height="47" fill="#ff8a48" stroke="#000000" stroke-width="1"/><rect x="535.5" y="661" width="9" height="8" fill="#ffd8c0"/><rect x="536" y="671" width="8" height="5" fill="#ff8a48"/><circle cx="540.0" cy="670" r="2.2" fill="#ff2020"/><path d="M541 625 L529.3 655 L539 666 M542 677 V709 L546 741" fill="none" stroke="none" stroke-width="1" stroke-dasharray="3 3"/><path d="M569 620 V645 H554.3 V744 H569 V721" fill="none" stroke="#000000" stroke-width="12.5" stroke-linejoin="round" stroke-linecap="square"/><path d="M569 620 V645 H554.3 V744 H569 V721" fill="none" stroke="#ff8a48" stroke-width="8.4" stroke-linejoin="round" stroke-linecap="square"/><rect x="564.5" y="614" width="9" height="8" fill="#ffd8c0"/><rect x="565.5" y="622" width="7" height="8" fill="#ff8a48"/><rect x="564.5" y="663.5" width="9" height="47" fill="#ff8a48" stroke="#000000" stroke-width="1"/><rect x="564.5" y="661" width="9" height="8" fill="#ffd8c0"/><rect x="565" y="671" width="8" height="5" fill="#ff8a48"/><circle cx="569.0" cy="670" r="2.2" fill="#ff2020"/><path d="M570 625 L558.3 655 L568 666 M571 677 V709 L575 741" fill="none" stroke="none" stroke-width="1" stroke-dasharray="3 3"/><path d="M599 620 V645 H584.3 V744 H599 V721" fill="none" stroke="#000000" stroke-width="12.5" stroke-linejoin="round" stroke-linecap="square"/><path d="M599 620 V645 H584.3 V744 H599 V721" fill="none" stroke="#ff8a48" stroke-width="8.4" stroke-linejoin="round" stroke-linecap="square"/><rect x="594.5" y="614" width="9" height="8" fill="#ffd8c0"/><rect x="595.5" y="622" width="7" height="8" fill="#ff8a48"/><rect x="594.5" y="663.5" width="9" height="47" fill="#ff8a48" stroke="#000000" stroke-width="1"/><rect x="594.5" y="661" width="9" height="8" fill="#ffd8c0"/><rect x="595" y="671" width="8" height="5" fill="#ff8a48"/><circle cx="599.0" cy="670" r="2.2" fill="#ff2020"/><path d="M600 625 L588.3 655 L598 666 M601 677 V709 L605 741" fill="none" stroke="none" stroke-width="1" stroke-dasharray="3 3"/><path d="M628 633 V659.5 H613.3 V758.6 H628 V736.7" fill="none" stroke="#000000" stroke-width="12.5" stroke-linejoin="round" stroke-linecap="square"/><path d="M628 633 V659.5 H613.3 V758.6 H628 V736.7" fill="none" stroke="#ff8a48" stroke-width="8.4" stroke-linejoin="round" stroke-linecap="square"/><rect x="623.5" y="627" width="9" height="8" fill="#ffd8c0"/><rect x="624.5" y="635" width="7" height="8" fill="#ff8a48"/><rect x="623.5" y="679.0" width="9" height="46.5" fill="#ff8a48" stroke="#000000" stroke-width="1"/><rect x="623.5" y="676.5" width="9" height="8" fill="#ffd8c0"/><rect x="624" y="686.5" width="8" height="5" fill="#ff8a48"/><circle cx="628.0" cy="685.5" r="2.2" fill="#ff2020"/><path d="M629 638 L617.3 669.5 L627 681.5 M630 692.5 V724 L634 755.6" fill="none" stroke="none" stroke-width="1" stroke-dasharray="3 3"/><path d="M657 633 V659.5 H642.3 V758.6 H657 V736.7" fill="none" stroke="#000000" stroke-width="12.5" stroke-linejoin="round" stroke-linecap="square"/><path d="M657 633 V659.5 H642.3 V758.6 H657 V736.7" fill="none" stroke="#ff8a48" stroke-width="8.4" stroke-linejoin="round" stroke-linecap="square"/><rect x="652.5" y="627" width="9" height="8" fill="#ffd8c0"/><rect x="653.5" y="635" width="7" height="8" fill="#ff8a48"/><rect x="652.5" y="679.0" width="9" height="46.5" fill="#ff8a48" stroke="#000000" stroke-width="1"/><rect x="652.5" y="676.5" width="9" height="8" fill="#ffd8c0"/><rect x="653" y="686.5" width="8" height="5" fill="#ff8a48"/><circle cx="657.0" cy="685.5" r="2.2" fill="#ff2020"/><path d="M658 638 L646.3 669.5 L656 681.5 M659 692.5 V724 L663 755.6" fill="none" stroke="none" stroke-width="1" stroke-dasharray="3 3"/><path d="M687 642 V668 H672.3 V772 H687 V750" fill="none" stroke="#000000" stroke-width="12.5" stroke-linejoin="round" stroke-linecap="square"/><path d="M687 642 V668 H672.3 V772 H687 V750" fill="none" stroke="#ff8a48" stroke-width="8.4" stroke-linejoin="round" stroke-linecap="square"/><rect x="682.5" y="636" width="9" height="8" fill="#ffd8c0"/><rect x="683.5" y="644" width="7" height="8" fill="#ff8a48"/><rect x="682.5" y="687.0" width="9" height="52.5" fill="#ff8a48" stroke="#000000" stroke-width="1"/><rect x="682.5" y="684.5" width="9" height="8" fill="#ffd8c0"/><rect x="683" y="694.5" width="8" height="5" fill="#ff8a48"/><circle cx="687.0" cy="693.5" r="2.2" fill="#ff2020"/><path d="M688 647 L676.3 678 L686 689.5 M689 700.5 V738 L693 769" fill="none" stroke="none" stroke-width="1" stroke-dasharray="3 3"/><path d="M716 648.6 V674 H701.3 V772 H716 V750" fill="none" stroke="#000000" stroke-width="12.5" stroke-linejoin="round" stroke-linecap="square"/><path d="M716 648.6 V674 H701.3 V772 H716 V750" fill="none" stroke="#ff8a48" stroke-width="8.4" stroke-linejoin="round" stroke-linecap="square"/><rect x="711.5" y="642.6" width="9" height="8" fill="#ffd8c0"/><rect x="712.5" y="650.6" width="7" height="8" fill="#ff8a48"/><rect x="711.5" y="693.5" width="9" height="46" fill="#ff8a48" stroke="#000000" stroke-width="1"/><rect x="711.5" y="691" width="9" height="8" fill="#ffd8c0"/><rect x="712" y="701" width="8" height="5" fill="#ff8a48"/><circle cx="716.0" cy="700" r="2.2" fill="#ff2020"/><path d="M717 653.6 L705.3 684 L715 696 M718 707 V738 L722 769" fill="none" stroke="none" stroke-width="1" stroke-dasharray="3 3"/><path d="M745 648.6 V674 H730.3 V772 H745 V750" fill="none" stroke="#000000" stroke-width="12.5" stroke-linejoin="round" stroke-linecap="square"/><path d="M745 648.6 V674 H730.3 V772 H745 V750" fill="none" stroke="#ff8a48" stroke-width="8.4" stroke-linejoin="round" stroke-linecap="square"/><rect x="740.5" y="642.6" width="9" height="8" fill="#ffd8c0"/><rect x="741.5" y="650.6" width="7" height="8" fill="#ff8a48"/><rect x="740.5" y="693.5" width="9" height="46" fill="#ff8a48" stroke="#000000" stroke-width="1"/><rect x="740.5" y="691" width="9" height="8" fill="#ffd8c0"/><rect x="741" y="701" width="8" height="5" fill="#ff8a48"/><circle cx="745.0" cy="700" r="2.2" fill="#ff2020"/><path d="M746 653.6 L734.3 684 L744 696 M747 707 V738 L751 769" fill="none" stroke="none" stroke-width="1" stroke-dasharray="3 3"/><path d="M775 648.6 V674 H760.3 V772 H775 V750" fill="none" stroke="#000000" stroke-width="12.5" stroke-linejoin="round" stroke-linecap="square"/><path d="M775 648.6 V674 H760.3 V772 H775 V750" fill="none" stroke="#ff8a48" stroke-width="8.4" stroke-linejoin="round" stroke-linecap="square"/><rect x="770.5" y="642.6" width="9" height="8" fill="#ffd8c0"/><rect x="771.5" y="650.6" width="7" height="8" fill="#ff8a48"/><rect x="770.5" y="693.5" width="9" height="46" fill="#ff8a48" stroke="#000000" stroke-width="1"/><rect x="770.5" y="691" width="9" height="8" fill="#ffd8c0"/><rect x="771" y="701" width="8" height="5" fill="#ff8a48"/><circle cx="775.0" cy="700" r="2.2" fill="#ff2020"/><path d="M776 653.6 L764.3 684 L774 696 M777 707 V738 L781 769" fill="none" stroke="none" stroke-width="1" stroke-dasharray="3 3"/><path d="M804.6 648.6 V674 H789.9 V772 H804.6 V750" fill="none" stroke="#000000" stroke-width="12.5" stroke-linejoin="round" stroke-linecap="square"/><path d="M804.6 648.6 V674 H789.9 V772 H804.6 V750" fill="none" stroke="#ff8a48" stroke-width="8.4" stroke-linejoin="round" stroke-linecap="square"/><rect x="800.1" y="642.6" width="9" height="8" fill="#ffd8c0"/><rect x="801.1" y="650.6" width="7" height="8" fill="#ff8a48"/><rect x="800.1" y="693.5" width="9" height="46" fill="#ff8a48" stroke="#000000" stroke-width="1"/><rect x="800.1" y="691" width="9" height="8" fill="#ffd8c0"/><rect x="800.6" y="701" width="8" height="5" fill="#ff8a48"/><circle cx="804.6" cy="700" r="2.2" fill="#ff2020"/><path d="M805.6 653.6 L793.9 684 L803.6 696 M806.6 707 V738 L810.6 769" fill="none" stroke="none" stroke-width="1" stroke-dasharray="3 3"/><path d="M834.2 648.6 V674 H819.5 V772 H834.2 V750" fill="none" stroke="#000000" stroke-width="12.5" stroke-linejoin="round" stroke-linecap="square"/><path d="M834.2 648.6 V674 H819.5 V772 H834.2 V750" fill="none" stroke="#ff8a48" stroke-width="8.4" stroke-linejoin="round" stroke-linecap="square"/><rect x="829.7" y="642.6" width="9" height="8" fill="#ffd8c0"/><rect x="830.7" y="650.6" width="7" height="8" fill="#ff8a48"/><rect x="829.7" y="693.5" width="9" height="46" fill="#ff8a48" stroke="#000000" stroke-width="1"/><rect x="829.7" y="691" width="9" height="8" fill="#ffd8c0"/><rect x="830.2" y="701" width="8" height="5" fill="#ff8a48"/><circle cx="834.2" cy="700" r="2.2" fill="#ff2020"/><path d="M835.2 653.6 L823.5 684 L833.2 696 M836.2 707 V738 L840.2 769" fill="none" stroke="none" stroke-width="1" stroke-dasharray="3 3"/><path d="M863.8 648.6 V674 H849.0999999999999 V772 H863.8 V750" fill="none" stroke="#000000" stroke-width="12.5" stroke-linejoin="round" stroke-linecap="square"/><path d="M863.8 648.6 V674 H849.0999999999999 V772 H863.8 V750" fill="none" stroke="#ff8a48" stroke-width="8.4" stroke-linejoin="round" stroke-linecap="square"/><rect x="859.3" y="642.6" width="9" height="8" fill="#ffd8c0"/><rect x="860.3" y="650.6" width="7" height="8" fill="#ff8a48"/><rect x="859.3" y="693.5" width="9" height="46" fill="#ff8a48" stroke="#000000" stroke-width="1"/><rect x="859.3" y="691" width="9" height="8" fill="#ffd8c0"/><rect x="859.8" y="701" width="8" height="5" fill="#ff8a48"/><circle cx="863.8" cy="700" r="2.2" fill="#ff2020"/><path d="M864.8 653.6 L853.0999999999999 684 L862.8 696 M865.8 707 V738 L869.8 769" fill="none" stroke="none" stroke-width="1" stroke-dasharray="3 3"/><path d="M893.4 648.6 V674 H878.6999999999999 V772 H893.4 V750" fill="none" stroke="#000000" stroke-width="12.5" stroke-linejoin="round" stroke-linecap="square"/><path d="M893.4 648.6 V674 H878.6999999999999 V772 H893.4 V750" fill="none" stroke="#ff8a48" stroke-width="8.4" stroke-linejoin="round" stroke-linecap="square"/><rect x="888.9" y="642.6" width="9" height="8" fill="#ffd8c0"/><rect x="889.9" y="650.6" width="7" height="8" fill="#ff8a48"/><rect x="888.9" y="693.5" width="9" height="46" fill="#ff8a48" stroke="#000000" stroke-width="1"/><rect x="888.9" y="691" width="9" height="8" fill="#ffd8c0"/><rect x="889.4" y="701" width="8" height="5" fill="#ff8a48"/><circle cx="893.4" cy="700" r="2.2" fill="#ff2020"/><path d="M894.4 653.6 L882.6999999999999 684 L892.4 696 M895.4 707 V738 L899.4 769" fill="none" stroke="none" stroke-width="1" stroke-dasharray="3 3"/><path d="M923 648.6 V674 H908.3 V772 H923 V750" fill="none" stroke="#000000" stroke-width="12.5" stroke-linejoin="round" stroke-linecap="square"/><path d="M923 648.6 V674 H908.3 V772 H923 V750" fill="none" stroke="#ff8a48" stroke-width="8.4" stroke-linejoin="round" stroke-linecap="square"/><rect x="918.5" y="642.6" width="9" height="8" fill="#ffd8c0"/><rect x="919.5" y="650.6" width="7" height="8" fill="#ff8a48"/><rect x="918.5" y="693.5" width="9" height="46" fill="#ff8a48" stroke="#000000" stroke-width="1"/><rect x="918.5" y="691" width="9" height="8" fill="#ffd8c0"/><rect x="919" y="701" width="8" height="5" fill="#ff8a48"/><circle cx="923.0" cy="700" r="2.2" fill="#ff2020"/><path d="M924 653.6 L912.3 684 L922 696 M925 707 V738 L929 769" fill="none" stroke="none" stroke-width="1" stroke-dasharray="3 3"/><path d="M952.7 648.6 V674 H938.0 V772 H952.7 V750" fill="none" stroke="#000000" stroke-width="12.5" stroke-linejoin="round" stroke-linecap="square"/><path d="M952.7 648.6 V674 H938.0 V772 H952.7 V750" fill="none" stroke="#ff8a48" stroke-width="8.4" stroke-linejoin="round" stroke-linecap="square"/><rect x="948.2" y="642.6" width="9" height="8" fill="#ffd8c0"/><rect x="949.2" y="650.6" width="7" height="8" fill="#ff8a48"/><rect x="948.2" y="693.5" width="9" height="46" fill="#ff8a48" stroke="#000000" stroke-width="1"/><rect x="948.2" y="691" width="9" height="8" fill="#ffd8c0"/><rect x="948.7" y="701" width="8" height="5" fill="#ff8a48"/><circle cx="952.7" cy="700" r="2.2" fill="#ff2020"/><path d="M953.7 653.6 L942.0 684 L951.7 696 M954.7 707 V738 L958.7 769" fill="none" stroke="none" stroke-width="1" stroke-dasharray="3 3"/><path d="M982.3 648.6 V674 H967.5999999999999 V772 H982.3 V750" fill="none" stroke="#000000" stroke-width="12.5" stroke-linejoin="round" stroke-linecap="square"/><path d="M982.3 648.6 V674 H967.5999999999999 V772 H982.3 V750" fill="none" stroke="#ff8a48" stroke-width="8.4" stroke-linejoin="round" stroke-linecap="square"/><rect x="977.8" y="642.6" width="9" height="8" fill="#ffd8c0"/><rect x="978.8" y="650.6" width="7" height="8" fill="#ff8a48"/><rect x="977.8" y="693.5" width="9" height="46" fill="#ff8a48" stroke="#000000" stroke-width="1"/><rect x="977.8" y="691" width="9" height="8" fill="#ffd8c0"/><rect x="978.3" y="701" width="8" height="5" fill="#ff8a48"/><circle cx="982.3" cy="700" r="2.2" fill="#ff2020"/><path d="M983.3 653.6 L971.5999999999999 684 L981.3 696 M984.3 707 V738 L988.3 769" fill="none" stroke="none" stroke-width="1" stroke-dasharray="3 3"/><path d="M997 653.6 V676 H1010 V772 H996.5 V750" fill="none" stroke="#000000" stroke-width="12.5" stroke-linejoin="round" stroke-linecap="square"/><path d="M997 653.6 V676 H1010 V772 H996.5 V750" fill="none" stroke="#ff8a48" stroke-width="8.4" stroke-linejoin="round" stroke-linecap="square"/><rect x="992.5" y="648" width="9" height="8" fill="#ffd8c0"/><rect x="992.5" y="703.5" width="9" height="36" fill="#ff8a48" stroke="#000000" stroke-width="1"/><rect x="992.5" y="701" width="9" height="8" fill="#ffd8c0"/><rect x="993" y="711" width="8" height="5" fill="#ff8a48"/><circle cx="997.0" cy="710" r="2.2" fill="#ff2020"/><circle cx="487.5" cy="781.5" r="5.5" fill="#800080"/></g></svg>
<div class="t" style="left:1693.3px;top:464.84px;font-size:12px;line-height:12px;color:#000;font-weight:bold;transform:scaleX(0.9944);transform-origin:0 0;">Reference :</div>
<div class="t" style="left:1763.3px;top:464.84px;font-size:12px;line-height:12px;color:#1a1a1a;transform:scaleX(1.0085);transform-origin:0 0;">Nestings\0\43</div>
<div class="t" style="left:1693.3px;top:481.84px;font-size:12px;line-height:12px;color:#000;font-weight:bold;">Quantity :</div>
<div class="t" style="left:1754.2996875px;top:481.84px;font-size:12px;line-height:12px;color:#1a1a1a;">1</div>
<div class="t" style="left:1693.3px;top:498.84px;font-size:12px;line-height:12px;color:#000;font-weight:bold;transform:scaleX(0.9290);transform-origin:0 0;">Dimensions :</div>
<div class="t" style="left:1768.3px;top:498.84px;font-size:12px;line-height:12px;color:#1a1a1a;transform:scaleX(0.9000);transform-origin:0 0;">3000.000 x 1500.000</div>
<div class="t" style="left:1693.3px;top:515.84px;font-size:12px;line-height:12px;color:#000;font-weight:bold;transform:scaleX(0.9343);transform-origin:0 0;">Use % :</div>
<div class="t" style="left:1738.8px;top:515.84px;font-size:12px;line-height:12px;color:#1a1a1a;transform:scaleX(0.8991);transform-origin:0 0;">29.50</div>
<div class="t" style="left:1693.3px;top:532.84px;font-size:12px;line-height:12px;color:#000;font-weight:bold;transform:scaleX(0.8701);transform-origin:0 0;">CNC :</div>
<div class="t" style="left:1727.3px;top:532.84px;font-size:12px;line-height:12px;color:#1a1a1a;transform:scaleX(0.9368);transform-origin:0 0;">demo 001</div>
<div class="t" style="left:1693.3px;top:549.84px;font-size:12px;line-height:12px;color:#000;font-weight:bold;transform:scaleX(0.9748);transform-origin:0 0;">Sheet :</div>
<div class="t" style="left:1737.3px;top:549.84px;font-size:12px;line-height:12px;color:#1a1a1a;transform:scaleX(0.9150);transform-origin:0 0;">304L-1.5(3000x1500)</div>
<div class="t" style="left:1693.3px;top:566.84px;font-size:12px;line-height:12px;color:#000;font-weight:bold;transform:scaleX(1.0063);transform-origin:0 0;">Weight :</div>
<div class="t" style="left:1745.7px;top:566.84px;font-size:12px;line-height:12px;color:#1a1a1a;transform:scaleX(0.8777);transform-origin:0 0;">54.0</div>
<div class="a" style="left:1491px;top:661px;width:428px;height:22px;background:#e3ebf8"></div>
<div class="t" style="left:1493.5px;top:665.00px;font-size:15px;line-height:15px;color:#000;font-weight:bold;transform:scaleX(0.9959);transform-origin:0 0;">Lantek Laser-DC01-3.0000</div>
<div class="a" style="left:1491px;top:683px;width:402px;height:201px;border:1px solid #7cc048;box-sizing:border-box;background:#f0f0f0"></div>
<div class="a" style="left:1492px;top:684px;width:199px;height:199px;background:#000"></div>
<div class="a" style="left:1495px;top:735px;width:193px;height:97px;border:1px solid #b8b8b8;box-sizing:border-box"></div>
<svg class="a" style="left:1496px;top:736px;overflow:hidden" width="182" height="95" viewBox="0 0 182 95"><g><polyline points="23.5,24.5 23.6,24.9 23.6,25.4 23.4,25.8 23.1,26.2 22.7,26.6 22.2,26.8 21.6,26.9 20.9,26.9 20.3,26.6 19.7,26.2 19.2,25.7 18.9,24.9 18.7,24.1 18.8,23.3 19.1,22.4 19.6,21.7 20.3,21.0 21.2,20.6 22.2,20.4 23.2,20.4 24.3,20.7 25.2,21.3 26.1,22.1 26.6,23.1 27.0,24.3 27.0,25.6 26.7,26.9 26.1,28.0 25.1,29.1 24.0,29.8 22.6,30.3 21.1,30.4 19.6,30.1 18.2,29.5 17.0,28.5 16.1,27.2 15.4,25.7 15.2,24.0 15.4,22.3 16.1,20.7 17.1,19.2 18.5,18.0 20.2,17.2 22.0,16.9 24.0,17.0 25.8,17.6 27.5,18.6 28.9,20.1 29.9,21.9 30.4,23.9 30.5,26.1 29.9,28.2 28.9,30.1 27.4,31.8 25.5,33.0 23.3,33.7 20.9,33.9 18.6,33.5 16.4,32.4 14.5,30.9 13.0,28.9 12.1,26.6 11.7,24.1 12.0,21.5 13.0,19.1 14.5,16.9 16.5,15.1 19.0,14.0 21.7,13.4 24.5,13.5 27.2,14.4 29.6,15.8 31.6,17.9 33.1,20.5 33.9,23.3 33.9,26.3 33.3,29.3 31.8,32.0 29.8,34.3 27.2,36.0 24.2,37.1 21.0,37.4 17.8,36.9 14.8,35.5 12.2,33.5 10.1,30.9 8.8,27.8 8.2,24.4 8.6,20.9 9.7,17.7 11.7,14.7 14.4,12.4 17.6,10.7 21.1,9.9 24.8,10.0 28.3,11.0 31.5,12.9 34.2,15.5 36.2,18.8 37.3,22.5 37.5,26.3 36.7,30.1 34.9,33.7 32.3,36.7 29.1,39.0 25.3,40.4 21.2,40.9 17.2,40.3 13.3,38.8 10.0,36.3 7.3,33.0 5.5,29.1 4.8,24.9 5.1,20.6 6.4,16.5 8.8,12.8 12.0,9.8 15.9,7.6 20.3,6.5 24.8,6.5 29.2,7.6 33.3,9.8 36.6,13.0 39.2,16.9 40.6,21.4 41.0,26.1 40.1,30.8 38.1,35.2 35.1,38.9 31.2,41.8 26.6,43.7 21.7,44.4 16.8,43.8 12.1,42.1 8.0,39.2 4.7,35.3 2.4,30.7 1.3,25.7 1.5,20.5 3.0,15.5 5.7,11.0 9.5,7.3 14.1,4.6 19.2,3.1 24.6,3.0 29.9,4.2 34.8,6.6 38.9,10.3 42.0,14.8 43.9,20.1 44.5,25.6 43.6,31.2 41.4,36.4 38.0,41.0 33.5,44.5 28.2,46.9 22.5,47.9 16.6,47.4 11.1,45.5 6.1,42.2 2.1,37.8 -0.7,32.5 -2.1,26.7 -2.0,20.6 -0.5,14.8" fill="none" stroke="#ff8a48" stroke-width="2.1"/><polyline points="21.8,72.0 21.4,72.0 21.0,71.9 20.5,71.7 20.1,71.4 19.8,70.9 19.7,70.4 19.6,69.7 19.8,69.1 20.1,68.5 20.6,68.0 21.2,67.6 22.0,67.3 22.8,67.3 23.6,67.5 24.4,67.8 25.1,68.4 25.7,69.2 26.0,70.2 26.1,71.2 25.9,72.2 25.5,73.2 24.8,74.1 23.8,74.8 22.7,75.3 21.5,75.5 20.3,75.3 19.0,74.9 18.0,74.1 17.1,73.0 16.5,71.8 16.2,70.4 16.3,68.9 16.7,67.4 17.5,66.1 18.7,65.1 20.1,64.3 21.7,63.9 23.4,63.8 25.0,64.3 26.6,65.1 27.9,66.3 28.9,67.9 29.4,69.6 29.6,71.5 29.2,73.4 28.4,75.2 27.1,76.7 25.5,77.9 23.5,78.7 21.5,78.9 19.4,78.7 17.3,77.9 15.6,76.6 14.1,74.9 13.1,72.8 12.7,70.6 12.8,68.2 13.6,66.0 14.8,63.9 16.6,62.2 18.8,61.0 21.2,60.4 23.8,60.4 26.3,61.0 28.6,62.2 30.5,64.0 32.0,66.3 32.8,68.9 33.1,71.6 32.6,74.4 31.4,76.9 29.6,79.2 27.3,80.9 24.6,82.0 21.6,82.4 18.7,82.1 15.8,81.0 13.3,79.3 11.3,76.9 9.9,74.1 9.2,71.0 9.4,67.8 10.3,64.7 12.0,61.9 14.3,59.6 17.2,57.9 20.5,57.0 23.9,56.9 27.3,57.6 30.4,59.2 33.0,61.6 35.0,64.5 36.2,67.9 36.6,71.5 36.0,75.1 34.5,78.5 32.3,81.4 29.3,83.8 25.8,85.3 22.1,85.9 18.2,85.6 14.5,84.3 11.2,82.1 8.6,79.2 6.7,75.6 5.8,71.7 5.9,67.6 6.9,63.7 9.0,60.1 11.9,57.1 15.5,54.8 19.5,53.6 23.8,53.4 28.0,54.2 32.0,56.1 35.3,58.9 37.9,62.5 39.5,66.7 40.1,71.1 39.5,75.6 37.8,79.8 35.1,83.6 31.5,86.5 27.3,88.5 22.7,89.4 18.0,89.1 13.4,87.7 9.4,85.1 6.0,81.6 3.6,77.4 2.4,72.6 2.3,67.7 3.5,62.8 5.9,58.4 9.3,54.7 13.5,51.9 18.3,50.2 23.5,49.8 28.6,50.7 33.4,52.8 37.5,56.1 40.7,60.3 42.8,65.2 43.6,70.5 43.0,75.9 41.2,81.0 38.1,85.5 33.9,89.1 29.0,91.6 23.6,92.8 18.0,92.7 12.5,91.1 7.7,88.2 3.6,84.2 0.7,79.3 -1.0,73.8 -1.2,68.0 -0.0,62.2 2.6,57.0 6.5,52.5 11.3,49.1 16.9,47.0 22.9,46.3 28.9,47.2 34.6,49.5" fill="none" stroke="#ff8a48" stroke-width="2.1"/><polyline points="67.0,25.6 66.8,25.9 66.5,26.2 66.0,26.4 65.5,26.5 65.0,26.4 64.4,26.2 63.9,25.9 63.5,25.4 63.3,24.8 63.1,24.0 63.2,23.3 63.5,22.6 64.0,21.9 64.6,21.3 65.4,21.0 66.3,20.8 67.3,20.9 68.2,21.2 69.1,21.7 69.8,22.5 70.3,23.5 70.6,24.6 70.5,25.7 70.2,26.9 69.6,28.0 68.7,28.9 67.6,29.5 66.3,29.9 64.9,29.9 63.6,29.6 62.3,29.0 61.2,28.0 60.3,26.7 59.8,25.3 59.7,23.7 59.9,22.1 60.6,20.6 61.6,19.3 63.0,18.2 64.6,17.6 66.4,17.3 68.2,17.5 69.9,18.1 71.5,19.2 72.8,20.7 73.6,22.4 74.0,24.4 74.0,26.4 73.4,28.4 72.3,30.2 70.8,31.7 68.9,32.7 66.8,33.3 64.5,33.4 62.3,32.9 60.3,31.8 58.5,30.3 57.2,28.3 56.4,26.0 56.2,23.6 56.6,21.1 57.6,18.8 59.2,16.8 61.2,15.3 63.6,14.2 66.2,13.8 68.9,14.1 71.5,15.0 73.7,16.5 75.6,18.6 76.9,21.1 77.5,23.9 77.4,26.8 76.6,29.6 75.1,32.2 73.0,34.3 70.4,35.9 67.5,36.8 64.4,36.9 61.3,36.2 58.5,34.8 56.0,32.7 54.2,30.1 53.0,27.0 52.7,23.7 53.2,20.4 54.5,17.3 56.5,14.5 59.2,12.4 62.4,10.9 65.8,10.3 69.4,10.6 72.8,11.7 75.8,13.7 78.3,16.4 80.1,19.6 81.0,23.3 80.9,27.0 80.0,30.7 78.1,34.0 75.5,36.9 72.2,38.9 68.4,40.2 64.5,40.4 60.5,39.7 56.9,38.0 53.7,35.4 51.3,32.1 49.7,28.2 49.2,24.1 49.7,19.9 51.2,15.9 53.7,12.4 57.0,9.6 60.9,7.7 65.2,6.9 69.6,7.1 73.9,8.4 77.7,10.7 80.9,14.0 83.1,17.9 84.4,22.4 84.5,27.0 83.4,31.5 81.2,35.7 78.1,39.2 74.1,41.9 69.6,43.5 64.8,43.9 60.0,43.1 55.5,41.2 51.6,38.2 48.5,34.2 46.5,29.6 45.7,24.7 46.2,19.6 47.9,14.8 50.7,10.5 54.6,7.0 59.2,4.6 64.3,3.4 69.6,3.5 74.8,5.0 79.4,7.6 83.3,11.4 86.1,16.0 87.7,21.2 88.0,26.7 86.9,32.1 84.5,37.2 80.9,41.4 76.3,44.7 71.0,46.8 65.3,47.4 59.6,46.7 54.3,44.5 49.6,41.1 45.8,36.6 43.3,31.3 42.2,25.5 42.6,19.5 44.4,13.8 47.6,8.7 52.0,4.6 57.3,1.6" fill="none" stroke="#ff8a48" stroke-width="2.1"/><polyline points="64.8,71.4 64.5,71.1 64.2,70.8 64.1,70.3 64.1,69.8 64.2,69.2 64.5,68.7 64.9,68.3 65.4,67.9 66.1,67.7 66.8,67.7 67.6,67.9 68.2,68.3 68.9,68.8 69.3,69.5 69.6,70.4 69.6,71.3 69.5,72.2 69.0,73.1 68.4,73.9 67.5,74.5 66.5,74.9 65.3,75.0 64.2,74.8 63.1,74.4 62.1,73.6 61.3,72.6 60.8,71.4 60.6,70.1 60.8,68.7 61.2,67.4 62.1,66.2 63.2,65.3 64.5,64.6 66.0,64.3 67.6,64.3 69.1,64.8 70.6,65.7 71.7,66.9 72.6,68.3 73.1,70.0 73.1,71.8 72.7,73.6 71.8,75.2 70.5,76.6 68.9,77.7 67.1,78.3 65.1,78.5 63.1,78.2 61.2,77.3 59.6,76.0 58.3,74.3 57.4,72.3 57.1,70.1 57.4,67.9 58.2,65.8 59.5,63.9 61.2,62.4 63.4,61.3 65.7,60.8 68.2,60.9 70.5,61.6 72.7,62.9 74.5,64.7 75.8,66.9 76.5,69.5 76.6,72.1 76.0,74.7 74.7,77.1 72.9,79.2 70.6,80.8 67.9,81.7 65.1,82.0 62.2,81.5 59.5,80.4 57.2,78.6 55.3,76.2 54.1,73.4 53.6,70.4 53.9,67.3 55.0,64.3 56.7,61.7 59.1,59.6 62.0,58.1 65.2,57.3 68.5,57.4 71.7,58.3 74.6,60.0 77.1,62.4 78.9,65.3 79.9,68.6 80.1,72.2 79.4,75.6 77.8,78.9 75.4,81.6 72.5,83.7 69.0,85.1 65.3,85.5 61.6,85.0 58.1,83.6 55.0,81.3 52.5,78.3 50.9,74.8 50.2,70.9 50.4,66.9 51.7,63.1 53.8,59.7 56.8,56.9 60.4,54.9 64.4,53.9 68.6,53.9 72.7,54.9 76.4,56.9 79.6,59.9 81.9,63.5 83.3,67.6 83.6,72.0 82.8,76.3 81.0,80.4 78.1,83.9 74.5,86.6 70.3,88.3 65.8,89.0 61.2,88.5 56.8,86.8 52.9,84.2 49.8,80.6 47.7,76.3 46.7,71.6 46.9,66.8 48.3,62.1 50.8,57.9 54.3,54.4 58.6,51.9 63.4,50.5 68.5,50.3 73.4,51.5 78.0,53.8 81.9,57.2 84.8,61.4 86.6,66.3 87.1,71.6 86.3,76.8 84.2,81.7 81.0,86.0 76.8,89.3 71.8,91.5 66.4,92.5 61.0,92.0 55.7,90.2 51.1,87.2 47.3,83.0 44.6,78.1 43.3,72.6 43.3,66.9 44.8,61.3 47.6,56.3 51.6,52.1 56.6,49.0 62.2,47.2 68.1,46.8 73.9,47.9 79.4,50.5 84.0,54.3 87.6,59.2 89.8,64.9" fill="none" stroke="#ff8a48" stroke-width="2.1"/><polyline points="110.0,26.0 109.5,26.1 109.1,26.0 108.7,25.9 108.2,25.6 107.9,25.1 107.7,24.6 107.6,24.0 107.7,23.3 107.9,22.7 108.3,22.1 108.9,21.7 109.6,21.3 110.5,21.2 111.3,21.3 112.1,21.6 112.9,22.1 113.5,22.9 113.9,23.8 114.1,24.8 114.1,25.8 113.7,26.9 113.1,27.8 112.3,28.6 111.2,29.2 110.0,29.5 108.8,29.5 107.5,29.1 106.3,28.5 105.4,27.5 104.6,26.3 104.2,24.9 104.1,23.5 104.4,22.0 105.1,20.6 106.2,19.4 107.5,18.5 109.0,17.9 110.7,17.7 112.4,18.0 114.0,18.7 115.4,19.8 116.6,21.2 117.3,22.9 117.6,24.8 117.5,26.7 116.8,28.5 115.7,30.2 114.2,31.5 112.4,32.5 110.3,33.0 108.2,32.9 106.1,32.3 104.2,31.2 102.6,29.7 101.4,27.7 100.8,25.5 100.7,23.2 101.1,20.8 102.2,18.7 103.8,16.8 105.8,15.4 108.2,14.5 110.7,14.3 113.3,14.6 115.7,15.6 117.8,17.2 119.5,19.3 120.6,21.8 121.1,24.5 120.9,27.3 120.0,30.0 118.4,32.4 116.3,34.3 113.7,35.7 110.8,36.4 107.8,36.4 104.9,35.6 102.2,34.1 100.0,32.0 98.3,29.3 97.3,26.3 97.2,23.1 97.8,19.9 99.2,17.0 101.3,14.4 104.0,12.4 107.1,11.2 110.5,10.8 113.9,11.2 117.2,12.4 120.0,14.5 122.3,17.2 123.9,20.5 124.6,24.0 124.4,27.7 123.3,31.2 121.3,34.4 118.6,37.0 115.3,38.8 111.6,39.8 107.7,39.9 103.9,39.0 100.5,37.1 97.5,34.5 95.3,31.1 94.0,27.3 93.6,23.3 94.3,19.2 96.0,15.4 98.6,12.1 101.9,9.6 105.9,7.9 110.1,7.3 114.4,7.7 118.5,9.2 122.1,11.6 125.0,15.0 127.0,18.9 128.0,23.3 127.9,27.8 126.6,32.2 124.3,36.2 121.1,39.5 117.1,41.9 112.6,43.2 107.8,43.4 103.2,42.4 98.9,40.3 95.2,37.2 92.4,33.2 90.7,28.6 90.1,23.7 90.8,18.7 92.7,14.1 95.7,10.0 99.7,6.8 104.3,4.7 109.4,3.8 114.6,4.2 119.5,5.8 124.0,8.6 127.6,12.5 130.1,17.2 131.4,22.4 131.4,27.8 130.1,33.0 127.5,37.8 123.7,41.8 119.1,44.8 113.8,46.6 108.2,47.0 102.7,45.9 97.5,43.6 93.1,40.0 89.6,35.4 87.4,30.0 86.6,24.3 87.3,18.5 89.4,13.0 92.8,8.1 97.3,4.3 102.6,1.6 108.5,0.3 114.6,0.6 120.4,2.3" fill="none" stroke="#ff8a48" stroke-width="2.1"/><polyline points="108.5,70.3 108.5,69.8 108.6,69.4 108.8,69.0 109.2,68.6 109.6,68.3 110.2,68.2 110.8,68.2 111.4,68.3 112.0,68.7 112.6,69.2 112.9,69.8 113.2,70.6 113.2,71.4 113.0,72.2 112.6,73.0 112.0,73.7 111.2,74.2 110.2,74.5 109.2,74.6 108.2,74.4 107.2,73.9 106.3,73.2 105.6,72.2 105.2,71.1 105.1,69.9 105.2,68.6 105.7,67.4 106.5,66.4 107.6,65.5 108.9,64.9 110.3,64.7 111.8,64.8 113.2,65.3 114.5,66.2 115.5,67.4 116.3,68.8 116.7,70.4 116.6,72.1 116.1,73.7 115.3,75.2 114.0,76.5 112.4,77.4 110.7,78.0 108.8,78.0 106.9,77.6 105.1,76.7 103.6,75.4 102.5,73.7 101.8,71.8 101.6,69.7 101.9,67.6 102.7,65.6 104.1,63.9 105.8,62.5 107.9,61.6 110.2,61.2 112.5,61.4 114.8,62.2 116.8,63.5 118.4,65.4 119.5,67.6 120.1,70.0 120.1,72.5 119.4,75.0 118.1,77.3 116.2,79.2 113.9,80.6 111.3,81.4 108.6,81.5 105.8,80.9 103.3,79.7 101.1,77.8 99.5,75.5 98.4,72.7 98.1,69.8 98.5,66.8 99.6,64.0 101.5,61.6 103.9,59.6 106.7,58.3 109.8,57.7 113.0,57.9 116.1,59.0 118.9,60.7 121.1,63.2 122.7,66.1 123.6,69.4 123.6,72.8 122.7,76.1 121.0,79.2 118.6,81.8 115.6,83.7 112.2,84.8 108.6,85.0 105.0,84.4 101.6,82.8 98.8,80.4 96.5,77.4 95.1,73.9 94.6,70.1 95.0,66.3 96.4,62.6 98.7,59.4 101.7,56.8 105.3,55.1 109.3,54.3 113.3,54.4 117.3,55.6 120.8,57.8 123.7,60.8 125.8,64.4 127.0,68.5 127.1,72.8 126.1,77.0 124.1,80.9 121.2,84.2 117.5,86.6 113.3,88.1 108.9,88.5 104.4,87.8 100.2,86.0 96.6,83.2 93.7,79.6 91.9,75.3 91.1,70.6 91.5,65.9 93.1,61.4 95.8,57.4 99.4,54.2 103.7,51.9 108.5,50.8 113.4,50.9 118.2,52.2 122.5,54.7 126.2,58.2 128.8,62.6 130.4,67.4 130.6,72.6 129.6,77.7 127.3,82.4 123.9,86.4 119.6,89.5 114.7,91.4 109.4,92.0 104.0,91.3 99.0,89.3 94.5,86.1 91.0,81.9 88.7,76.9 87.6,71.4 88.0,65.8 89.7,60.5 92.7,55.6 96.8,51.7 101.8,48.9 107.4,47.4 113.2,47.4 118.9,48.7 124.1,51.5 128.5,55.5 131.7,60.5 133.7,66.1 134.1,72.1 133.1,78.1 130.6,83.7" fill="none" stroke="#ff8a48" stroke-width="2.1"/><polyline points="152.9,25.5 152.6,25.3 152.3,24.9 152.1,24.5 152.0,24.0 152.1,23.4 152.3,22.9 152.7,22.4 153.2,22.0 153.8,21.8 154.5,21.7 155.3,21.8 156.0,22.0 156.7,22.5 157.2,23.2 157.6,24.0 157.7,24.9 157.6,25.9 157.3,26.8 156.7,27.7 155.9,28.4 154.9,28.8 153.8,29.1 152.6,29.0 151.5,28.6 150.4,28.0 149.6,27.1 148.9,25.9 148.6,24.6 148.6,23.3 149.0,21.9 149.6,20.6 150.7,19.6 151.9,18.8 153.4,18.3 155.0,18.2 156.6,18.5 158.0,19.2 159.3,20.3 160.3,21.7 161.0,23.3 161.2,25.1 160.9,26.9 160.2,28.6 159.1,30.1 157.6,31.4 155.9,32.2 153.9,32.5 151.9,32.4 149.9,31.8 148.2,30.6 146.7,29.1 145.7,27.1 145.1,25.0 145.1,22.8 145.7,20.6 146.8,18.6 148.4,16.9 150.5,15.6 152.8,14.9 155.2,14.7 157.6,15.2 159.9,16.3 161.9,17.9 163.4,20.0 164.3,22.4 164.7,25.0 164.3,27.7 163.3,30.2 161.7,32.5 159.6,34.3 157.0,35.5 154.2,36.0 151.3,35.9 148.6,35.0 146.0,33.4 144.0,31.2 142.5,28.6 141.7,25.6 141.7,22.5 142.4,19.5 143.9,16.7 146.1,14.3 148.8,12.5 151.9,11.5 155.2,11.2 158.5,11.8 161.6,13.2 164.2,15.3 166.3,18.1 167.7,21.3 168.2,24.7 167.8,28.3 166.6,31.6 164.5,34.6 161.7,37.0 158.4,38.7 154.8,39.5 151.0,39.4 147.4,38.3 144.1,36.3 141.4,33.6 139.4,30.2 138.3,26.5 138.1,22.5 139.0,18.6 140.8,15.0 143.5,11.9 146.9,9.6 150.8,8.1 154.9,7.7 159.1,8.3 163.0,10.0 166.4,12.6 169.1,15.9 170.9,19.9 171.7,24.2 171.3,28.6 169.9,32.8 167.4,36.6 164.1,39.7 160.1,41.8 155.6,42.9 151.0,42.9 146.5,41.7 142.4,39.4 138.9,36.1 136.4,32.1 134.9,27.5 134.6,22.7 135.5,17.9 137.6,13.5 140.8,9.7 144.8,6.7 149.4,4.9 154.4,4.2 159.5,4.8 164.3,6.7 168.4,9.7 171.8,13.6 174.1,18.3 175.1,23.5 174.8,28.7 173.3,33.8 170.5,38.4 166.6,42.2 161.9,44.9 156.6,46.3 151.1,46.4 145.7,45.2 140.8,42.6 136.6,38.9 133.5,34.2 131.6,28.8 131.1,23.1 132.0,17.5 134.3,12.2 137.9,7.6 142.5,4.0 147.9,1.7 153.7,0.7 159.7,1.3 165.3,3.3 170.3,6.6 174.3,11.1 177.1,16.5" fill="none" stroke="#ff8a48" stroke-width="2.1"/><polyline points="153.1,69.3 153.4,69.0 153.8,68.7 154.3,68.6 154.8,68.6 155.3,68.7 155.8,69.0 156.2,69.5 156.6,70.0 156.7,70.7 156.7,71.4 156.6,72.1 156.2,72.8 155.6,73.4 154.9,73.8 154.0,74.1 153.1,74.1 152.2,73.9 151.3,73.4 150.5,72.8 149.9,71.9 149.6,70.8 149.5,69.7 149.7,68.6 150.2,67.5 151.0,66.5 152.0,65.8 153.2,65.3 154.6,65.1 155.9,65.3 157.2,65.8 158.4,66.7 159.3,67.8 160.0,69.2 160.2,70.7 160.1,72.3 159.6,73.8 158.7,75.2 157.5,76.3 156.0,77.1 154.3,77.6 152.5,77.5 150.7,77.1 149.1,76.2 147.7,74.9 146.7,73.2 146.1,71.4 146.0,69.4 146.4,67.4 147.3,65.5 148.7,63.9 150.4,62.7 152.4,61.9 154.6,61.6 156.8,61.9 159.0,62.8 160.8,64.2 162.3,66.0 163.3,68.1 163.7,70.5 163.5,72.9 162.8,75.3 161.4,77.4 159.5,79.1 157.3,80.4 154.7,81.0 152.1,81.0 149.5,80.3 147.1,79.0 145.1,77.1 143.6,74.8 142.7,72.1 142.5,69.2 143.1,66.4 144.3,63.7 146.2,61.5 148.6,59.7 151.4,58.6 154.5,58.1 157.6,58.5 160.5,59.6 163.1,61.5 165.1,63.9 166.5,66.9 167.2,70.1 167.0,73.4 166.0,76.6 164.3,79.4 161.8,81.8 158.8,83.5 155.5,84.5 151.9,84.5 148.5,83.7 145.3,82.0 142.6,79.6 140.6,76.6 139.4,73.1 139.0,69.4 139.6,65.7 141.2,62.2 143.5,59.2 146.6,56.8 150.2,55.3 154.1,54.7 158.0,55.0 161.8,56.4 165.1,58.7 167.8,61.7 169.7,65.4 170.6,69.4 170.5,73.6 169.4,77.6 167.3,81.3 164.2,84.4 160.6,86.6 156.4,87.9 152.0,88.0 147.7,87.1 143.7,85.2 140.3,82.2 137.7,78.5 136.0,74.3 135.5,69.7 136.2,65.1 137.9,60.8 140.7,57.0 144.4,54.1 148.7,52.1 153.5,51.2 158.3,51.5 162.9,53.0 167.0,55.7 170.4,59.3 172.8,63.7 174.1,68.5 174.1,73.6 172.8,78.5 170.4,83.0 166.9,86.7 162.5,89.5 157.6,91.2 152.3,91.6 147.1,90.6 142.3,88.4 138.1,85.0 134.9,80.7 132.8,75.7 132.0,70.3 132.6,64.8 134.6,59.7 137.8,55.1 142.0,51.4 147.1,48.9 152.6,47.7 158.3,48.0 163.8,49.6 168.8,52.6 172.8,56.7 175.8,61.7 177.4,67.4 177.6,73.3 176.3,79.1 173.6,84.4 169.6,89.0 164.7,92.4 158.9,94.5" fill="none" stroke="#ff8a48" stroke-width="2.1"/><path d="M40 22 h5 v4 h4 M42 28 v3 h5" fill="none" stroke="#ff8a48" stroke-width="2.1"/><path d="M84 22 h5 v4 h4 M86 28 v3 h5" fill="none" stroke="#ff8a48" stroke-width="2.1"/><path d="M128 22 h5 v4 h4 M130 28 v3 h5" fill="none" stroke="#ff8a48" stroke-width="2.1"/><path d="M40 68 h5 v4 h4 M42 74 v3 h5" fill="none" stroke="#ff8a48" stroke-width="2.1"/><path d="M84 68 h5 v4 h4 M86 74 v3 h5" fill="none" stroke="#ff8a48" stroke-width="2.1"/><path d="M128 68 h5 v4 h4 M130 74 v3 h5" fill="none" stroke="#ff8a48" stroke-width="2.1"/><path d="M18 45 h5 v4 h4 M20 51 v3 h5" fill="none" stroke="#ff8a48" stroke-width="2.1"/><path d="M62 45 h5 v4 h4 M64 51 v3 h5" fill="none" stroke="#ff8a48" stroke-width="2.1"/><path d="M106 45 h5 v4 h4 M108 51 v3 h5" fill="none" stroke="#ff8a48" stroke-width="2.1"/><path d="M150 45 h5 v4 h4 M152 51 v3 h5" fill="none" stroke="#ff8a48" stroke-width="2.1"/><path d="M172 22 h5 v4 h4 M174 28 v3 h5" fill="none" stroke="#ff8a48" stroke-width="2.1"/><path d="M172 68 h5 v4 h4 M174 74 v3 h5" fill="none" stroke="#ff8a48" stroke-width="2.1"/></g></svg>
<div class="t" style="left:1693.3px;top:686.84px;font-size:12px;line-height:12px;color:#000;font-weight:bold;transform:scaleX(0.9944);transform-origin:0 0;">Reference :</div>
<div class="t" style="left:1763.3px;top:686.84px;font-size:12px;line-height:12px;color:#1a1a1a;transform:scaleX(1.0085);transform-origin:0 0;">Nestings\0\89</div>
<div class="t" style="left:1693.3px;top:703.84px;font-size:12px;line-height:12px;color:#000;font-weight:bold;">Quantity :</div>
<div class="t" style="left:1754.2996875px;top:703.84px;font-size:12px;line-height:12px;color:#1a1a1a;">1</div>
<div class="t" style="left:1693.3px;top:720.84px;font-size:12px;line-height:12px;color:#000;font-weight:bold;transform:scaleX(0.9290);transform-origin:0 0;">Dimensions :</div>
<div class="t" style="left:1768.3px;top:720.84px;font-size:12px;line-height:12px;color:#1a1a1a;transform:scaleX(0.9000);transform-origin:0 0;">3000.000 x 1500.000</div>
<div class="t" style="left:1693.3px;top:737.84px;font-size:12px;line-height:12px;color:#000;font-weight:bold;transform:scaleX(0.9343);transform-origin:0 0;">Use % :</div>
<div class="t" style="left:1738.8px;top:737.84px;font-size:12px;line-height:12px;color:#1a1a1a;transform:scaleX(0.8991);transform-origin:0 0;">41.01</div>
<div class="t" style="left:1693.3px;top:754.84px;font-size:12px;line-height:12px;color:#000;font-weight:bold;transform:scaleX(0.8701);transform-origin:0 0;">CNC :</div>
<div class="t" style="left:1693.3px;top:771.84px;font-size:12px;line-height:12px;color:#000;font-weight:bold;transform:scaleX(0.9748);transform-origin:0 0;">Sheet :</div>
<div class="t" style="left:1737.3px;top:771.84px;font-size:12px;line-height:12px;color:#1a1a1a;transform:scaleX(0.9197);transform-origin:0 0;">DC01-3(3000x1500)</div>
<div class="t" style="left:1693.3px;top:788.84px;font-size:12px;line-height:12px;color:#000;font-weight:bold;transform:scaleX(1.0063);transform-origin:0 0;">Weight :</div>
<div class="t" style="left:1745.7px;top:788.84px;font-size:12px;line-height:12px;color:#1a1a1a;transform:scaleX(0.8991);transform-origin:0 0;">108.0</div>
<div class="a" style="left:0px;top:801px;width:1486px;height:28px;background:#f0f0f0"></div>
<div class="t" style="left:5.5px;top:807.24px;font-size:15.9px;line-height:15.9px;color:#2b62b0;">Simulation Window</div>
<svg class="a" style="left:1435px;top:810px;" width="42" height="13" viewBox="0 0 42 13"><path d="M0 4 H9 L4.5 9Z" fill="#3c3c3c"/><path d="M19 0 V8 M22 0 V8 M17.5 0.5 H23.5 M16 8.5 H25 M20.5 9 V12" stroke="#3c3c3c" stroke-width="1.6" fill="none"/><path d="M33 1 L41 9 M41 1 L33 9" stroke="#3c3c3c" stroke-width="1.8"/></svg>
<div class="a" style="left:0px;top:828px;width:1485px;height:182px;background:#fff;border:1px solid #6a6a6a;border-width:1px 1px 1px 2px;box-sizing:border-box"></div>
<div class="a" style="left:7px;top:843px;width:705px;height:23px;border:1px solid #dcdcdc;box-sizing:border-box"></div>
<div class="a" style="left:16px;top:850px;width:625px;height:4px;background:#e2e4e4;border:1px solid #d4d6d6;box-sizing:border-box"></div>
<div class="a" style="left:20px;top:861px;width:1px;height:4px;background:#a0a0a0"></div>
<div class="a" style="left:51px;top:861px;width:1px;height:3px;background:#a0a0a0"></div>
<div class="a" style="left:82px;top:861px;width:1px;height:3px;background:#a0a0a0"></div>
<div class="a" style="left:113px;top:861px;width:1px;height:3px;background:#a0a0a0"></div>
<div class="a" style="left:144px;top:861px;width:1px;height:3px;background:#a0a0a0"></div>
<div class="a" style="left:175px;top:861px;width:1px;height:3px;background:#a0a0a0"></div>
<div class="a" style="left:206px;top:861px;width:1px;height:3px;background:#a0a0a0"></div>
<div class="a" style="left:236px;top:861px;width:1px;height:3px;background:#a0a0a0"></div>
<div class="a" style="left:267px;top:861px;width:1px;height:3px;background:#a0a0a0"></div>
<div class="a" style="left:298px;top:861px;width:1px;height:3px;background:#a0a0a0"></div>
<div class="a" style="left:329px;top:861px;width:1px;height:3px;background:#a0a0a0"></div>
<div class="a" style="left:360px;top:861px;width:1px;height:3px;background:#a0a0a0"></div>
<div class="a" style="left:391px;top:861px;width:1px;height:3px;background:#a0a0a0"></div>
<div class="a" style="left:422px;top:861px;width:1px;height:3px;background:#a0a0a0"></div>
<div class="a" style="left:452px;top:861px;width:1px;height:3px;background:#a0a0a0"></div>
<div class="a" style="left:483px;top:861px;width:1px;height:3px;background:#a0a0a0"></div>
<div class="a" style="left:514px;top:861px;width:1px;height:3px;background:#a0a0a0"></div>
<div class="a" style="left:545px;top:861px;width:1px;height:3px;background:#a0a0a0"></div>
<div class="a" style="left:576px;top:861px;width:1px;height:3px;background:#a0a0a0"></div>
<div class="a" style="left:607px;top:861px;width:1px;height:3px;background:#a0a0a0"></div>
<div class="a" style="left:638px;top:861px;width:1px;height:3px;background:#a0a0a0"></div>
<svg class="a" style="left:40px;top:845px;" width="10" height="14" viewBox="0 0 10 14"><path d="M0.5 0.5 H9.5 V9 L5 13.5 L0.5 9Z" fill="#0a6fd8" stroke="#0a5cb8" stroke-width="1"/></svg>
<div class="t" style="left:680px;top:848.84px;font-size:12px;line-height:12px;color:#1a1a1a;transform:scaleX(0.8705);transform-origin:0 0;">4 %</div>
<div class="a" style="left:7px;top:924px;width:21px;height:21px;background:#ececec"></div>
<div class="a" style="left:9px;top:926px;width:17px;height:17px;background:#fdfdfd;border-radius:3px;border:1px solid #9a9a9a;box-sizing:border-box;"></div>
<svg class="a" style="left:7px;top:924px;" width="21" height="21" viewBox="0 0 21 21"><path d="M7 5 L15 10.5 L7 16Z" fill="#4a6ed0"/></svg>
<div class="a" style="left:33px;top:923px;width:21px;height:21px;background:#ececec"></div>
<div class="a" style="left:35px;top:925px;width:17px;height:17px;background:#fdfdfd;border-radius:3px;border:1px solid #e6e6e6;box-sizing:border-box;"></div>
<svg class="a" style="left:33px;top:923px;" width="21" height="21" viewBox="0 0 21 21"><rect x="7.5" y="6" width="2" height="8" fill="#8a8a8a"/><rect x="11.5" y="6" width="2" height="8" fill="#8a8a8a"/></svg>
<div class="a" style="left:58px;top:923px;width:21px;height:21px;background:#ececec"></div>
<div class="a" style="left:60px;top:925px;width:17px;height:17px;background:#fdfdfd;border-radius:3px;border:1px solid #e6e6e6;box-sizing:border-box;"></div>
<svg class="a" style="left:58px;top:923px;" width="21" height="21" viewBox="0 0 21 21"><rect x="6.5" y="6" width="8" height="8" fill="#8a8a8a"/></svg>
<div class="a" style="left:84px;top:923px;width:21px;height:21px;background:#ececec"></div>
<div class="a" style="left:86px;top:925px;width:17px;height:17px;background:#fdfdfd;border-radius:3px;border:1px solid #e6e6e6;box-sizing:border-box;"></div>
<svg class="a" style="left:84px;top:923px;" width="21" height="21" viewBox="0 0 21 21"><path d="M4 5 L10 10.5 L4 16Z M10 5 L16 10.5 L10 16Z" fill="#8a8a8a"/></svg>
<div class="a" style="left:109px;top:923px;width:21px;height:21px;background:#ececec"></div>
<div class="a" style="left:111px;top:925px;width:17px;height:17px;background:#fdfdfd;border-radius:3px;border:1px solid #e6e6e6;box-sizing:border-box;"></div>
<svg class="a" style="left:109px;top:923px;" width="21" height="21" viewBox="0 0 21 21"><path d="M5 5 L12 10.5 L5 16Z" fill="#8a8a8a"/><rect x="13" y="5" width="2" height="11" fill="#8a8a8a"/></svg>
<div class="a" style="left:580px;top:923px;width:21px;height:21px;background:#ececec"></div>
<div class="a" style="left:582px;top:925px;width:17px;height:17px;background:#fdfdfd;border-radius:3px;border:1px solid #e6e6e6;box-sizing:border-box;"></div>
<svg class="a" style="left:580px;top:923px;" width="21" height="21" viewBox="0 0 21 21"><path d="M4 10.5 L10 5.5 V8.5 H17 V12.5 H10 V15.5Z" fill="#4a78d8"/><rect x="3" y="5" width="1.5" height="11" fill="#4a78d8"/></svg>
<div class="a" style="left:606px;top:923px;width:21px;height:21px;background:#ececec"></div>
<div class="a" style="left:608px;top:925px;width:17px;height:17px;background:#fdfdfd;border-radius:3px;border:1px solid #e6e6e6;box-sizing:border-box;"></div>
<svg class="a" style="left:606px;top:923px;" width="21" height="21" viewBox="0 0 21 21"><path d="M4 10.5 L10 5.5 V8.5 H17 V12.5 H10 V15.5Z" fill="#4a78d8"/></svg>
<div class="a" style="left:631px;top:923px;width:21px;height:21px;background:#ececec"></div>
<div class="a" style="left:633px;top:925px;width:17px;height:17px;background:#fdfdfd;border-radius:3px;border:1px solid #e6e6e6;box-sizing:border-box;"></div>
<svg class="a" style="left:631px;top:923px;" width="21" height="21" viewBox="0 0 21 21"><path d="M17 10.5 L11 5.5 V8.5 H4 V12.5 H11 V15.5Z" fill="#4a78d8"/></svg>
<div class="a" style="left:657px;top:923px;width:21px;height:21px;background:#ececec"></div>
<div class="a" style="left:659px;top:925px;width:17px;height:17px;background:#fdfdfd;border-radius:3px;border:1px solid #e6e6e6;box-sizing:border-box;"></div>
<svg class="a" style="left:657px;top:923px;" width="21" height="21" viewBox="0 0 21 21"><path d="M17 10.5 L11 5.5 V8.5 H4 V12.5 H11 V15.5Z" fill="#4a78d8"/><rect x="16.5" y="5" width="1.5" height="11" fill="#4a78d8"/></svg>
<div class="a" style="left:691px;top:924px;width:21px;height:21px;background:#e6e6e6"></div>
<div class="a" style="left:693px;top:926px;width:17px;height:17px;background:#fff;border:1px solid #bdbdbd;border-radius:3px;box-sizing:border-box"></div>
<svg class="a" style="left:691px;top:924px;" width="21" height="21" viewBox="0 0 21 21"><path d="M5 7 H13 V9 H5Z" fill="#111"/><path d="M13 6 L17 4 V16 H10 V11Z" fill="#111"/><rect x="5" y="11" width="5" height="2" fill="#29a8e0"/><rect x="5" y="16" width="10" height="1" fill="#333"/></svg>
<div class="a" style="left:717px;top:843px;width:561px;height:46px;border:1px solid #dcdcdc;box-sizing:border-box"></div>
<div class="a" style="left:717px;top:898px;width:561px;height:46px;border:1px solid #dcdcdc;box-sizing:border-box"></div>
<div class="a" style="left:1282px;top:843px;width:138px;height:101px;border:1px solid #dcdcdc;box-sizing:border-box"></div>
<div class="t" style="left:725px;top:854.52px;font-size:11.2px;line-height:11.2px;color:#111;font-weight:bold;transform:scaleX(0.9709);transform-origin:0 0;">Operation :</div>
<div class="t" style="left:853px;top:854.27px;font-size:11.5px;line-height:11.5px;color:#1a1a1a;transform:scaleX(1.0722);transform-origin:0 0;">Nothing</div>
<div class="t" style="left:725px;top:875.12px;font-size:11.2px;line-height:11.2px;color:#111;font-weight:bold;">X :</div>
<div class="t" style="left:754.7px;top:874.44px;font-size:12px;line-height:12px;color:#1a1a1a;transform:scaleX(0.8851);transform-origin:0 0;">1602.460</div>
<div class="t" style="left:842px;top:875.12px;font-size:11.2px;line-height:11.2px;color:#111;font-weight:bold;">Y :</div>
<div class="t" style="left:871px;top:874.44px;font-size:12px;line-height:12px;color:#1a1a1a;transform:scaleX(0.9011);transform-origin:0 0;">1188.820</div>
<div class="t" style="left:1077px;top:875.12px;font-size:11.2px;line-height:11.2px;color:#111;font-weight:bold;transform:scaleX(0.9537);transform-origin:0 0;">Cutter radius :</div>
<div class="t" style="left:1162.5px;top:874.44px;font-size:12px;line-height:12px;color:#1a1a1a;transform:scaleX(0.8991);transform-origin:0 0;">0.000</div>
<div class="t" style="left:725.5px;top:909.12px;font-size:11.2px;line-height:11.2px;color:#111;font-weight:bold;transform:scaleX(0.9814);transform-origin:0 0;">Number of heads :</div>
<div class="t" style="left:939.5px;top:908.44px;font-size:12px;line-height:12px;color:#1a1a1a;">1</div>
<div class="t" style="left:1028px;top:909.12px;font-size:11.2px;line-height:11.2px;color:#111;font-weight:bold;">A :</div>
<div class="t" style="left:1168px;top:908.44px;font-size:12px;line-height:12px;color:#1a1a1a;transform:scaleX(0.8991);transform-origin:0 0;">0.000</div>
<div class="t" style="left:725.5px;top:928.02px;font-size:11.2px;line-height:11.2px;color:#111;font-weight:bold;transform:scaleX(0.9538);transform-origin:0 0;">Positions of heads :</div>
<div class="t" style="left:939.5px;top:927.34px;font-size:12px;line-height:12px;color:#1a1a1a;">1</div>
<div class="t" style="left:1028px;top:928.02px;font-size:11.2px;line-height:11.2px;color:#111;font-weight:bold;">C :</div>
<div class="t" style="left:1168px;top:927.34px;font-size:12px;line-height:12px;color:#1a1a1a;transform:scaleX(0.8991);transform-origin:0 0;">0.000</div>
<div class="t" style="left:1291px;top:854.52px;font-size:11.2px;line-height:11.2px;color:#111;font-weight:bold;transform:scaleX(0.9642);transform-origin:0 0;">Compensation</div>
<div class="t" style="left:1291px;top:867.52px;font-size:11.2px;line-height:11.2px;color:#111;font-weight:bold;transform:scaleX(0.9210);transform-origin:0 0;">System :</div>
<div class="t" style="left:1291px;top:897.52px;font-size:11.2px;line-height:11.2px;color:#111;font-weight:bold;transform:scaleX(0.9642);transform-origin:0 0;">Compensation</div>
<div class="t" style="left:1291px;top:910.52px;font-size:11.2px;line-height:11.2px;color:#111;font-weight:bold;transform:scaleX(0.9645);transform-origin:0 0;">Control :</div>
<svg class="a" style="left:1383px;top:856px;" width="24" height="26" viewBox="0 0 24 26"><path d="M2 24 L21 4" stroke="#000" stroke-width="1.8"/><path d="M22 2 L13 3.5 L20.5 11Z" fill="#000"/><circle cx="15.5" cy="18.5" r="4.3" fill="#ff0000"/></svg>
<svg class="a" style="left:1383px;top:899px;" width="24" height="26" viewBox="0 0 24 26"><path d="M2 24 L21 4" stroke="#000" stroke-width="1.8"/><path d="M22 2 L13 3.5 L20.5 11Z" fill="#000"/><circle cx="11.5" cy="14" r="4.5" fill="#ff0000"/></svg>
<div class="a" style="left:0px;top:1010px;width:1919px;height:22px;background:#f0f0f0"></div>
<div class="t" style="left:3.2px;top:1015.84px;font-size:12px;line-height:12px;color:#262626;">1</div>
<div class="t" style="left:15px;top:1015.84px;font-size:12px;line-height:12px;color:#262626;transform:scaleX(0.9048);transform-origin:0 0;">3000.000x1500.000</div>
<div class="t" style="left:123px;top:1015.84px;font-size:12px;line-height:12px;color:#262626;transform:scaleX(0.9025);transform-origin:0 0;">Use : 29.5 %</div>
<div class="t" style="left:197px;top:1015.84px;font-size:12px;line-height:12px;color:#262626;transform:scaleX(0.9474);transform-origin:0 0;">Remnant : 55.3 %</div>
<div class="t" style="left:300px;top:1015.84px;font-size:12px;line-height:12px;color:#262626;transform:scaleX(0.9048);transform-origin:0 0;">1622.500x1495.859</div>
<div class="t" style="left:408px;top:1015.84px;font-size:12px;line-height:12px;color:#262626;transform:scaleX(0.9150);transform-origin:0 0;">304L-1.5(3000x1500)</div>
<div class="t" style="left:526px;top:1015.84px;font-size:12px;line-height:12px;color:#262626;transform:scaleX(0.9530);transform-origin:0 0;">CNC: demo 001</div>
<div class="t" style="left:1687px;top:1015.84px;font-size:12px;line-height:12px;color:#262626;transform:scaleX(0.8948);transform-origin:0 0;">X: 8.489</div>
<div class="t" style="left:1785px;top:1015.84px;font-size:12px;line-height:12px;color:#262626;transform:scaleX(0.8898);transform-origin:0 0;">Y: 1367.661</div>
<div class="t" style="left:1886px;top:1015.84px;font-size:12px;line-height:12px;color:#262626;transform:scaleX(1.0003);transform-origin:0 0;">mm</div>
<div class="a" style="left:0;top:0;z-index:20"><div class="a" style="left:128px;top:200px;width:239px;height:331px;background:rgba(0,0,0,0.18);filter:blur(2px)"></div>
<div class="a" style="left:126px;top:197px;width:237px;height:330px;background:#ffffff;border:1px solid #c8c8c8;box-sizing:border-box"></div>
<div class="a" style="left:161px;top:278px;width:201px;height:1px;background:#d7d7d7"></div>
<div class="a" style="left:161px;top:307px;width:201px;height:1px;background:#d7d7d7"></div>
<div class="a" style="left:161px;top:388px;width:201px;height:1px;background:#d7d7d7"></div>
<div class="a" style="left:161px;top:443px;width:201px;height:1px;background:#d7d7d7"></div>
<div class="a" style="left:161px;top:498px;width:201px;height:1px;background:#d7d7d7"></div>
<div class="a" style="left:128px;top:416px;width:233px;height:26px;background:#c5c5c5"></div>
<div class="t" style="left:161.3px;top:206.10px;font-size:11.7px;line-height:11.7px;color:#262626;transform:scaleX(0.9688);transform-origin:0 0;">New sheet...</div>
<div class="t" style="left:161.3px;top:231.60px;font-size:11.7px;line-height:11.7px;color:#a0a0a0;transform:scaleX(0.8812);transform-origin:0 0;">Save</div>
<div class="t" style="left:161.3px;top:257.60px;font-size:11.7px;line-height:11.7px;color:#262626;transform:scaleX(0.9178);transform-origin:0 0;">Save As</div>
<div class="t" style="left:161.3px;top:287.10px;font-size:11.7px;line-height:11.7px;color:#262626;transform:scaleX(0.9952);transform-origin:0 0;">Delete every sheet of the subjob</div>
<div class="t" style="left:161.3px;top:316.10px;font-size:11.7px;line-height:11.7px;color:#262626;transform:scaleX(1.0462);transform-origin:0 0;">Automatic nesting</div>
<div class="t" style="left:161.3px;top:342.10px;font-size:11.7px;line-height:11.7px;color:#262626;transform:scaleX(0.9832);transform-origin:0 0;">Prenesting</div>
<div class="t" style="left:161.3px;top:368.10px;font-size:11.7px;line-height:11.7px;color:#262626;transform:scaleX(1.0589);transform-origin:0 0;">Automatic Machining</div>
<div class="t" style="left:161.3px;top:397.10px;font-size:11.7px;line-height:11.7px;color:#262626;transform:scaleX(0.9884);transform-origin:0 0;">Create subjob</div>
<div class="t" style="left:161.3px;top:423.10px;font-size:11.7px;line-height:11.7px;color:#262626;transform:scaleX(1.0557);transform-origin:0 0;">Modify machine</div>
<div class="t" style="left:161.3px;top:452.10px;font-size:11.7px;line-height:11.7px;color:#262626;transform:scaleX(0.9700);transform-origin:0 0;">Expand all</div>
<div class="t" style="left:161.3px;top:478.10px;font-size:11.7px;line-height:11.7px;color:#262626;transform:scaleX(0.9755);transform-origin:0 0;">Collapse all</div>
<div class="t" style="left:161.3px;top:507.10px;font-size:11.7px;line-height:11.7px;color:#262626;">Configure nesting explo</div>
<svg class="a" style="left:131px;top:203px;" width="21" height="18" viewBox="0 0 21 18"><rect x="1" y="3" width="18" height="14" rx="1" fill="#dcdcdc" stroke="#555" stroke-width="1"/><path d="M15 0 V8 M11 4 H19" stroke="#00aeef" stroke-width="2.5"/></svg>
<svg class="a" style="left:132px;top:229px;" width="17" height="17" viewBox="0 0 17 17"><path d="M1 1 H13 L16 4 V16 H1Z" fill="#b0b0b0" stroke="#999"/><rect x="4" y="2" width="8" height="4" fill="#eee"/><rect x="5" y="10" width="6" height="6" fill="#fff"/></svg>
<svg class="a" style="left:132px;top:255px;" width="17" height="17" viewBox="0 0 17 17"><path d="M1 1 H13 L16 4 V16 H1Z" fill="#00aeef" stroke="#333"/><rect x="4" y="2" width="8" height="4" fill="#eee" stroke="#555" stroke-width="0.5"/><rect x="5" y="10" width="6" height="6" fill="#fff"/></svg>
<svg class="a" style="left:131px;top:284px;" width="21" height="15" viewBox="0 0 21 15"><rect x="1" y="2" width="18" height="12" fill="#dcdcdc" stroke="#333" stroke-width="1"/><path d="M14 1 L20 7 M20 1 L14 7" stroke="#e0002a" stroke-width="2.5"/></svg>
<div class="a" style="left:131px;top:299px;width:19px;height:4px;background:#dedede"></div>
<div class="a" style="left:137px;top:300px;width:11px;height:2px;background:#fff"></div>
<svg class="a" style="left:131px;top:313px;" width="19" height="16" viewBox="0 0 19 16"><rect x="1.5" y="0.5" width="15" height="12" fill="#fff" stroke="#444"/><path d="M1.5 7 H16 M9 1 V12 M1.5 1 L9 7" stroke="#444" stroke-width="0.8" fill="none"/><circle cx="5" cy="10" r="3" fill="#00aeef"/><path d="M3 12 L2 16 L5 14 L7 16 L6.5 12" fill="#00aeef"/></svg>
<div class="a" style="left:131px;top:327px;width:19px;height:4px;background:#dedede"></div>
<div class="a" style="left:137px;top:328px;width:11px;height:2px;background:#fff"></div>
<svg class="a" style="left:131px;top:340px;" width="19" height="16" viewBox="0 0 19 16"><rect x="1.5" y="0.5" width="15" height="11" fill="#fff" stroke="#444"/><path d="M1.5 7 H16 M9 1 V12 M1.5 1 L9 7" stroke="#444" stroke-width="0.8" fill="none"/><text x="11" y="10" font-family="Liberation Sans" font-weight="bold" font-size="11" fill="#00aeef">?</text></svg>
<div class="a" style="left:131px;top:352px;width:19px;height:4px;background:#dedede"></div>
<div class="a" style="left:137px;top:353px;width:11px;height:2px;background:#fff"></div>
<svg class="a" style="left:131px;top:365px;" width="19" height="16" viewBox="0 0 19 16"><rect x="1.5" y="2.5" width="15" height="10" fill="#fff" stroke="#444"/><path d="M1.5 9 L8 3 L12 9 L16 4 M1.5 12 H16" stroke="#c8102e" stroke-width="1.2" fill="none"/><circle cx="14" cy="3" r="2.5" fill="#fff" stroke="#00aeef" stroke-width="1.4"/></svg>
<div class="a" style="left:131px;top:378px;width:19px;height:4px;background:#dedede"></div>
<div class="a" style="left:137px;top:379px;width:11px;height:2px;background:#fff"></div>
<svg class="a" style="left:131px;top:393px;" width="19" height="12" viewBox="0 0 19 12"><path d="M5 1 V9 M1 5 H9" stroke="#00aeef" stroke-width="2.5" transform="translate(1,0)"/></svg>
<div class="a" style="left:131px;top:406px;width:19px;height:4px;background:#dedede"></div>
<div class="a" style="left:137px;top:407px;width:11px;height:2px;background:#fff"></div>
<svg class="a" style="left:131px;top:423px;" width="19" height="12" viewBox="0 0 19 12"><path d="M4 11 L14 1 L16 3 L6 13 L3 14Z" fill="#00aeef" stroke="#333" stroke-width="1"/></svg>
<div class="a" style="left:131px;top:433px;width:19px;height:4px;background:#dedede"></div>
<div class="a" style="left:137px;top:434px;width:11px;height:2px;background:#fff"></div>
<svg class="a" style="left:133px;top:450px;" width="15" height="15" viewBox="0 0 15 15"><rect x="0.5" y="0.5" width="14" height="14" fill="#fff" stroke="#555"/><path d="M7.5 3 V12 M3 7.5 H12" stroke="#2b3f8c" stroke-width="1"/></svg>
<svg class="a" style="left:133px;top:476px;" width="15" height="15" viewBox="0 0 15 15"><rect x="0.5" y="0.5" width="14" height="14" fill="#fff" stroke="#555"/><path d="M3 7.5 H12" stroke="#2b3f8c" stroke-width="1"/></svg>
<svg class="a" style="left:130px;top:504px;" width="20" height="19" viewBox="0 0 20 19"><circle cx="10" cy="9.5" r="8.5" fill="none" stroke="#333" stroke-width="1"/><circle cx="10" cy="9.5" r="5" fill="#333"/><g fill="#333"><rect x="8.5" y="2.5" width="3" height="3" transform="rotate(0 10 9.5)"/><rect x="8.5" y="2.5" width="3" height="3" transform="rotate(60 10 9.5)"/><rect x="8.5" y="2.5" width="3" height="3" transform="rotate(120 10 9.5)"/><rect x="8.5" y="2.5" width="3" height="3" transform="rotate(180 10 9.5)"/><rect x="8.5" y="2.5" width="3" height="3" transform="rotate(240 10 9.5)"/><rect x="8.5" y="2.5" width="3" height="3" transform="rotate(300 10 9.5)"/></g><circle cx="10" cy="9.5" r="2.5" fill="#fff"/><circle cx="10" cy="9.5" r="1.2" fill="#00aeef"/></svg>
<div class="a" style="left:287px;top:453px;width:213px;height:84px;background:rgba(0,0,0,0.2);filter:blur(2px)"></div>
<div class="a" style="left:284px;top:450px;width:214px;height:84px;background:#ffffff;border:1px solid #bdbdbd;box-sizing:border-box"></div>
<div class="t" style="left:291.5px;top:459.10px;font-size:11.7px;line-height:11.7px;color:#333333;font-weight:bold;transform:scaleX(1.0010);transform-origin:0 0;">Modify machine</div>
<div class="t" style="left:344.6px;top:483.23px;font-size:11.9px;line-height:11.9px;color:#333333;transform:scaleX(1.0031);transform-origin:0 0;">Assign subjob to another</div>
<div class="t" style="left:344.6px;top:498.23px;font-size:11.9px;line-height:11.9px;color:#333333;transform:scaleX(0.9782);transform-origin:0 0;">machine</div>
<div class="a" style="left:301px;top:508px;width:36px;height:12px;background:#dcdcdc"></div>
<div class="a" style="left:313px;top:512px;width:20px;height:4px;background:#fff"></div>
<svg class="a" style="left:311px;top:491px;" width="27" height="29" viewBox="0 0 27 29"><path d="M2 27 L4 20 L21 3 C23 1 25 1 26 3 C27 4 27 6 25 8 L8 25Z" fill="#00aeef" stroke="#333" stroke-width="1.6" stroke-linejoin="round"/><path d="M4 20 L8 25" stroke="#333" stroke-width="1.4"/><path d="M2 27 L3.5 22 L6.5 25Z" fill="#fff" stroke="#333" stroke-width="1"/><path d="M19 5 L23 9" stroke="#fff" stroke-width="1.2"/></svg>
</div></body></html>
